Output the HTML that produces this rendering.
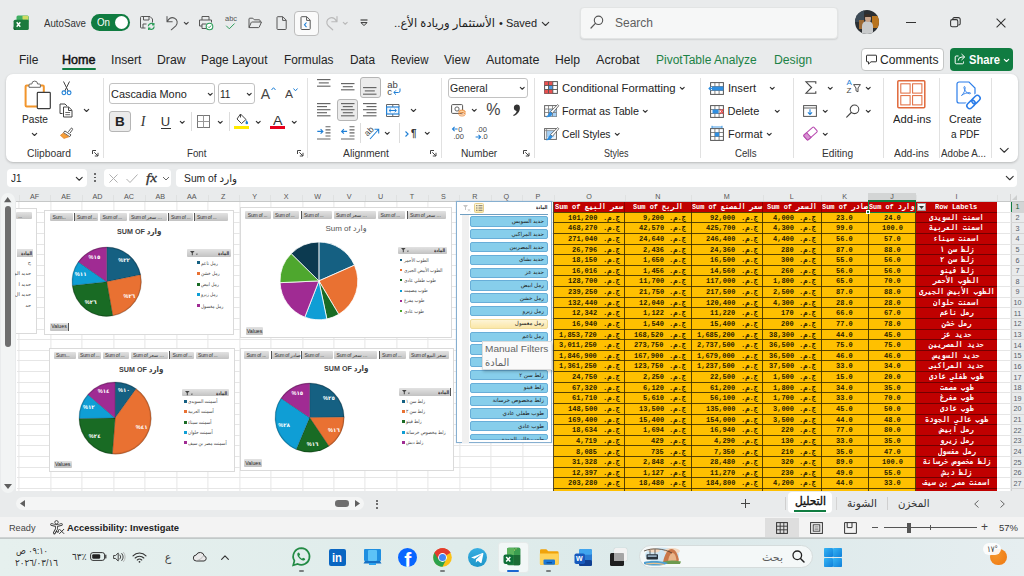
<!DOCTYPE html>
<html lang="ar"><head><meta charset="utf-8"><title>Excel</title>
<style>
html,body{margin:0;padding:0;}
body{width:1024px;height:576px;overflow:hidden;background:#e9ebec;position:relative;font-family:'Liberation Sans','DejaVu Sans',sans-serif;}
#app{position:absolute;left:0;top:0;width:1024px;height:576px;overflow:hidden;}
#app div,#app span,#app svg{position:absolute;box-sizing:border-box;}
#app span{white-space:pre;transform-origin:0 50%;}
#app svg{overflow:visible;}

</style></head><body><div id="app">
<svg style="left:13.00px;top:14.00px;" width="18" height="17" viewBox="0 0 18 17">
<path d="M3.500 3 a1.500 1.500 0 0 1 1.500-1.500 h9.300 a1.500 1.500 0 0 1 1.500 1.500 v4 h-12.300z" fill="#3fae62"/>
<rect x="9.500" y="1.700" width="5.800" height="4" rx=".8" fill="#cfdb62"/>
<rect x=".6" y="5.700" width="15.200" height="10.300" rx="1.600" fill="#1b7a3d"/>
<path d="M.6 12.500 l2.500 3.500 h-1 a1.500 1.500 0 0 1-1.500-1.500z" fill="#14602e"/>
<path d="M3.700 8.300 L7.300 12.700 M7.300 8.300 L3.700 12.700" stroke="#fff" stroke-width="1.400"/></svg>
<span style="left:44.00px;top:18.25px;font:400 10.5px/10.5px 'Liberation Sans','DejaVu Sans',sans-serif;color:#333;transform:scaleX(0.9221);">AutoSave</span>
<div style="left:91.00px;top:13.70px;width:39.30px;height:17.00px;background:#107c41;border-radius:8.500px;"></div>
<span style="left:96.80px;top:17.70px;font:400 10px/10px 'Liberation Sans','DejaVu Sans',sans-serif;color:#fff;transform:scaleX(0.9742);">On</span>
<div style="left:115.00px;top:15.70px;width:13.00px;height:13.00px;background:#fff;border-radius:50%;"></div>
<svg style="left:139.00px;top:15.00px;" width="17" height="16" viewBox="0 0 17 16"><path d="M1.5 2.5 a1 1 0 0 1 1-1 h8.5 l2.5 2.5 v3.5 M1.5 2.5 v9.5 a1 1 0 0 0 1 1 h4" fill="none" stroke="#575757" stroke-width="1"/>
<path d="M4.5 1.5 v3.5 h5.5 v-3.5 M4 13 v-4 h3.5" fill="none" stroke="#575757" stroke-width="1"/>
<path d="M9.3 11.3 a3 3 0 0 1 5.3-1.8 M14.9 8 v1.8 h-1.8 M15.2 11.5 a3 3 0 0 1-5.3 1.8 M9.6 15 v-1.8 h1.8" fill="none" stroke="#2e9e5b" stroke-width="1.2"/></svg>
<svg style="left:165.00px;top:15.00px;" width="15" height="16" viewBox="0 0 15 16"><path d="M2 1.5 v5.2 h5.2 M2.3 6.4 C4 3.5 7 2 9.6 3.2 C12.6 4.6 13 8.4 10.8 10.8 L6.3 14.8" fill="none" stroke="#575757" stroke-width="1.05" stroke-linecap="round" stroke-linejoin="round"/></svg>
<svg style="left:184.25px;top:21.88px;" width="4.5" height="3.25" viewBox="0 0 4.5 3.25"><path d="M0.3 0.3 L2.25 2.25 L4.2 0.3" fill="none" stroke="#444" stroke-width="1.1" stroke-linecap="round" stroke-linejoin="round"/></svg>
<svg style="left:198.00px;top:15.00px;" width="17" height="16" viewBox="0 0 17 16"><path d="M4 5 v-3.5 h7 v3.5 M4 11 h-2.5 v-6 h12 v2.5 M4 13.5 v-4.5 h4.5 M4 13.5 h4" fill="none" stroke="#575757" stroke-width="1"/>
<circle cx="11.5" cy="11.5" r="3.3" fill="#fff" stroke="#2e9e5b" stroke-width="1.1"/><path d="M10 11.6 l1.1 1.1 l2-2.2" fill="none" stroke="#2e9e5b" stroke-width="1"/></svg>
<span style="left:225.00px;top:15.30px;font:400 8px/8px 'Liberation Sans','DejaVu Sans',sans-serif;color:#555;transform:scaleX(0.9298);">abc</span>
<svg style="left:225.00px;top:22.50px;" width="11" height="7" viewBox="0 0 11 7"><path d="M1.500 3 l2.800 2.800 l5-5" fill="none" stroke="#2e9e5b" stroke-width="1" stroke-linecap="round" stroke-linejoin="round"/></svg>
<svg style="left:248.00px;top:17.00px;" width="15" height="12" viewBox="0 0 15 12"><path d="M1 10.5 v-8.5 a0.8 0.8 0 0 1 .8-.8 h3 l1.5 1.6 h5 a0.8 0.8 0 0 1 .8.8 v1.4 M1 10.5 l2.2-5 a1 1 0 0 1 .9-.5 h9.4 l-2.3 5.2 a0.8 0.8 0 0 1-.7.4 h-9.5" fill="none" stroke="#575757" stroke-width="1" stroke-linejoin="round"/></svg>
<svg style="left:276.00px;top:16.00px;" width="11" height="15" viewBox="0 0 11 15"><path d="M1 1.5 a.8 .8 0 0 1 .8-.8 h5 l3.4 3.4 v8.6 a.8 .8 0 0 1-.8.8 h-7.6 a.8 .8 0 0 1-.8-.8 z M6.6 .9 v3.5 h3.4" fill="none" stroke="#575757" stroke-width="1" stroke-linejoin="round"/></svg>
<div style="left:293.50px;top:10.50px;width:25.00px;height:25.00px;background:#fafafa;border:1px solid #bdbdbd;border-radius:4px;"></div>
<svg style="left:300.00px;top:16.00px;" width="11" height="15" viewBox="0 0 11 15"><path d="M1 1.5 a.8 .8 0 0 1 .8-.8 h5 l3.4 3.4 v8.6 a.8 .8 0 0 1-.8.8 h-7.6 a.8 .8 0 0 1-.8-.8 z M6.6 .9 v3.5 h3.4" fill="none" stroke="#575757" stroke-width="1" stroke-linejoin="round"/><path d="M6.5 6.5 l-2 2.3 l2 2.3" fill="none" stroke="#1e7fd6" stroke-width="1.1"/></svg>
<svg style="left:324.00px;top:15.00px;" width="15" height="16" viewBox="0 0 15 16"><path d="M13 1.5 v5.2 h-5.2 M12.7 6.4 C11 3.5 8 2 5.4 3.2 C2.4 4.6 2 8.4 4.2 10.8 L8.7 14.8" fill="none" stroke="#b9b9b9" stroke-width="1.15" stroke-linecap="round" stroke-linejoin="round"/></svg>
<svg style="left:343.25px;top:21.88px;" width="4.5" height="3.25" viewBox="0 0 4.5 3.25"><path d="M0.3 0.3 L2.25 2.25 L4.2 0.3" fill="none" stroke="#b9b9b9" stroke-width="1.1" stroke-linecap="round" stroke-linejoin="round"/></svg>
<svg style="left:360.00px;top:19.00px;" width="8" height="8" viewBox="0 0 8 8"><path d="M0.5 1 h7" stroke="#333" stroke-width="1.1"/><path d="M1 3.6 l3 3 l3-3 z" fill="none" stroke="#333" stroke-width="1"/></svg>
<span style="left:394.00px;top:18.40px;font:400 11.8px/11.8px 'Liberation Sans','DejaVu Sans',sans-serif;color:#222;direction:rtl;transform:scaleX(0.9807);">الأستثمار وريادة الأع..</span>
<span style="left:499.00px;top:17.75px;font:400 11.5px/11.5px 'Liberation Sans','DejaVu Sans',sans-serif;color:#222;transform:scaleX(0.9537);">• Saved</span>
<svg style="left:541.50px;top:21.75px;" width="7" height="4.5" viewBox="0 0 7 4.5"><path d="M0.3 0.3 L3.5 3.5 L6.7 0.3" fill="none" stroke="#333" stroke-width="1.1" stroke-linecap="round" stroke-linejoin="round"/></svg>
<div style="left:580.00px;top:6.50px;width:258.00px;height:32.50px;background:#f6f7f7;border:1px solid #e2e4e4;border-radius:4px;box-shadow:0 1px 1.5px rgba(0,0,0,.10);"></div>
<svg style="left:590.00px;top:15.00px;" width="14" height="14" viewBox="0 0 14 14"><circle cx="8.5" cy="5.3" r="4.2" fill="none" stroke="#555" stroke-width="1.1"/><path d="M5.4 8.3 L1 13" stroke="#555" stroke-width="1.2" stroke-linecap="round"/></svg>
<span style="left:615.00px;top:16.50px;font:400 12px/12px 'Liberation Sans','DejaVu Sans',sans-serif;color:#5f5f5f;">Search</span>
<div style="left:855px;top:10px;width:24px;height:24px;border-radius:50%;overflow:hidden;background:#2b2f33;"><div style="left:0;top:0;width:9px;height:12px;background:#3d4b57;"></div><div style="left:17px;top:6px;width:7px;height:12px;background:#b8741f;"></div><div style="left:4px;top:10px;width:5px;height:9px;background:#9c6a35;"></div><div style="left:7px;top:11px;width:11px;height:14px;border-radius:5px 5px 0 0;background:#c9cbcc;"></div><div style="left:9.5px;top:4.5px;width:6px;height:7px;border-radius:50%;background:#c9a58c;"></div><div style="left:9px;top:3.5px;width:7px;height:3px;border-radius:3px 3px 0 0;background:#3a2d25;"></div></div>
<div style="left:906.00px;top:21.50px;width:9.50px;height:1.10px;background:#333;"></div>
<svg style="left:950.00px;top:17.00px;" width="11" height="11" viewBox="0 0 11 11"><rect x="0.6" y="2.6" width="7.2" height="7.2" rx="1.6" fill="none" stroke="#333" stroke-width="1.05"/><path d="M2.8 2.4 v-.4 a1.4 1.4 0 0 1 1.4-1.4 h4.2 a1.8 1.8 0 0 1 1.8 1.8 v4.2 a1.4 1.4 0 0 1-1.4 1.4 h-.5" fill="none" stroke="#333" stroke-width="1.05"/></svg>
<svg style="left:996.00px;top:18.00px;" width="10" height="10" viewBox="0 0 10 10"><path d="M0.6 0.6 L9.4 9.4 M9.4 0.6 L0.6 9.4" stroke="#333" stroke-width="1.05"/></svg>
<span style="left:19.00px;top:54.30px;font:400 12px/12px 'Liberation Sans','DejaVu Sans',sans-serif;color:#242424;">File</span>
<span style="left:111.00px;top:54.30px;font:400 12px/12px 'Liberation Sans','DejaVu Sans',sans-serif;color:#242424;transform:scaleX(1.0161);">Insert</span>
<span style="left:157.00px;top:54.30px;font:400 12px/12px 'Liberation Sans','DejaVu Sans',sans-serif;color:#242424;transform:scaleX(1.0173);">Draw</span>
<span style="left:201.00px;top:54.30px;font:400 12px/12px 'Liberation Sans','DejaVu Sans',sans-serif;color:#242424;transform:scaleX(0.9868);">Page Layout</span>
<span style="left:284.00px;top:54.30px;font:400 12px/12px 'Liberation Sans','DejaVu Sans',sans-serif;color:#242424;transform:scaleX(0.9897);">Formulas</span>
<span style="left:350.00px;top:54.30px;font:400 12px/12px 'Liberation Sans','DejaVu Sans',sans-serif;color:#242424;transform:scaleX(0.9858);">Data</span>
<span style="left:391.00px;top:54.30px;font:400 12px/12px 'Liberation Sans','DejaVu Sans',sans-serif;color:#242424;transform:scaleX(0.9528);">Review</span>
<span style="left:444.00px;top:54.30px;font:400 12px/12px 'Liberation Sans','DejaVu Sans',sans-serif;color:#242424;">View</span>
<span style="left:486.00px;top:54.30px;font:400 12px/12px 'Liberation Sans','DejaVu Sans',sans-serif;color:#242424;transform:scaleX(1.0414);">Automate</span>
<span style="left:555.00px;top:54.30px;font:400 12px/12px 'Liberation Sans','DejaVu Sans',sans-serif;color:#242424;transform:scaleX(1.0127);">Help</span>
<span style="left:596.00px;top:54.30px;font:400 12px/12px 'Liberation Sans','DejaVu Sans',sans-serif;color:#242424;transform:scaleX(1.0518);">Acrobat</span>
<span style="left:62.00px;top:54.30px;font:400 12px/12px 'Liberation Sans','DejaVu Sans',sans-serif;color:#111;-webkit-text-stroke:.45px #111;transform:scaleX(1.0464);">Home</span>
<div style="left:61.50px;top:68.40px;width:34.00px;height:1.80px;background:#107c41;border-radius:1px;"></div>
<span style="left:656.00px;top:54.30px;font:400 12px/12px 'Liberation Sans','DejaVu Sans',sans-serif;color:#1c8246;">PivotTable Analyze</span>
<span style="left:774.00px;top:54.30px;font:400 12px/12px 'Liberation Sans','DejaVu Sans',sans-serif;color:#1c8246;transform:scaleX(1.0171);">Design</span>
<div style="left:861.00px;top:48.00px;width:82.50px;height:22.50px;background:#fff;border:1px solid #c4c6c6;border-radius:4px;"></div>
<svg style="left:866.00px;top:53.50px;" width="11" height="11" viewBox="0 0 11 11"><path d="M1 1.2 h9 a.5 .5 0 0 1 .5 .5 v5.6 a.5 .5 0 0 1-.5 .5 h-5 l-2.5 2.3 v-2.3 h-1.5 a.5 .5 0 0 1-.5-.5 v-5.6 a.5 .5 0 0 1 .5-.5z" fill="none" stroke="#333" stroke-width="1"/></svg>
<span style="left:879.50px;top:53.60px;font:400 12px/12px 'Liberation Sans','DejaVu Sans',sans-serif;color:#242424;transform:scaleX(1.0083);">Comments</span>
<div style="left:950.00px;top:48.00px;width:63.00px;height:22.50px;background:#107c41;border-radius:4px;"></div>
<svg style="left:954.00px;top:53.00px;" width="12" height="12" viewBox="0 0 12 12"><path d="M4.5 3 h-2.3 a1 1 0 0 0-1 1 v5.8 a1 1 0 0 0 1 1 h6.3 a1 1 0 0 0 1-1 v-1.3" fill="none" stroke="#fff" stroke-width="1"/><path d="M7.5 1 l3.2 3 l-3.2 3 M10.5 4 h-2.5 a3.8 3.8 0 0 0-3.8 3.6" fill="none" stroke="#fff" stroke-width="1"/></svg>
<span style="left:968.50px;top:53.60px;font:700 12px/12px 'Liberation Sans','DejaVu Sans',sans-serif;color:#fff;transform:scaleX(0.9293);">Share</span>
<svg style="left:1003.50px;top:58.75px;" width="5" height="3.5" viewBox="0 0 5 3.5"><path d="M0.3 0.3 L2.5 2.5 L4.7 0.3" fill="none" stroke="#fff" stroke-width="1.1" stroke-linecap="round" stroke-linejoin="round"/></svg>
<div style="left:6.00px;top:73.50px;width:1011.50px;height:88.00px;background:#fff;border-radius:7px;box-shadow:0 1px 2.5px rgba(0,0,0,.22);"></div>
<svg style="left:23.00px;top:79.00px;" width="29" height="32" viewBox="0 0 29 32"><rect x="2.600" y="6.600" width="18.200" height="21" rx="1" fill="#fff" stroke="#f2952b" stroke-width="2"/>
<path d="M6 8.300 v-2.300 a1 1 0 0 1 1-1 h1.800 a2.900 2.900 0 0 1 5.800 0 h1.800 a1 1 0 0 1 1 1 v2.300z" fill="#fff" stroke="#6a6a6a" stroke-width="1"/>
<rect x="14.300" y="13.400" width="13" height="16.200" rx=".8" fill="#fff" stroke="#3c3c3c" stroke-width="1.200"/></svg>
<span style="left:22.00px;top:113.80px;font:400 11px/11px 'Liberation Sans','DejaVu Sans',sans-serif;color:#242424;transform:scaleX(0.9239);">Paste</span>
<svg style="left:31.50px;top:132.75px;" width="5" height="3.5" viewBox="0 0 5 3.5"><path d="M0.3 0.3 L2.5 2.5 L4.7 0.3" fill="none" stroke="#333" stroke-width="1.1" stroke-linecap="round" stroke-linejoin="round"/></svg>
<svg style="left:60.50px;top:80.50px;" width="11" height="15" viewBox="0 0 11 15"><path d="M2.5 0.5 L7.2 10 M8.5 0.5 L3.8 10" stroke="#444" stroke-width="1"/><circle cx="2.9" cy="11.8" r="1.9" fill="none" stroke="#1e7fd6" stroke-width="1.1"/><circle cx="8.1" cy="11.8" r="1.9" fill="none" stroke="#1e7fd6" stroke-width="1.1"/></svg>
<svg style="left:59.00px;top:103.00px;" width="15" height="15" viewBox="0 0 15 15"><path d="M3.5 10.5 h-2.5 v-9.5 h5 l2 2" fill="none" stroke="#444" stroke-width="1"/><path d="M4.5 4 h5.2 l3.3 3.3 v6.7 h-8.5z M9.5 4.2 v3.3 h3.3" fill="#fff" stroke="#444" stroke-width="1"/><path d="M6.3 9.5 h4.8 M6.3 11.7 h4.8" stroke="#444" stroke-width=".8"/></svg>
<svg style="left:84.00px;top:109.25px;" width="5" height="3.5" viewBox="0 0 5 3.5"><path d="M0.3 0.3 L2.5 2.5 L4.7 0.3" fill="none" stroke="#333" stroke-width="1.1" stroke-linecap="round" stroke-linejoin="round"/></svg>
<svg style="left:59.80px;top:127.00px;" width="13.2" height="12.3" viewBox="0 0 15 14"><path d="M9.5 5.5 l3-4 a1.2 1.2 0 0 1 1.8 1.4 l-2.8 4" fill="#fff" stroke="#444" stroke-width="1"/><path d="M5.5 4.5 l7 4.5 l-1.5 2 l-7-4.5z" fill="#fff" stroke="#444" stroke-width="1"/><path d="M3.6 7 l6.4 4.2 l-5.5 1.8 l-4-3.5z" fill="#f6a13a" stroke="#e07a1f" stroke-width=".8"/></svg>
<span style="left:26.50px;top:148.80px;font:400 10.2px/10.2px 'Liberation Sans','DejaVu Sans',sans-serif;color:#333;transform:scaleX(1.0090);">Clipboard</span>
<svg style="left:92.00px;top:149.50px;" width="7" height="7" viewBox="0 0 7 7"><path d="M0.5 4 v-3.5 h3.5" fill="none" stroke="#444" stroke-width="1"/><path d="M2.3 2.3 L6 6 M6 2.800 v3.200 h-3.200" fill="none" stroke="#444" stroke-width="1"/></svg>
<div style="left:102.50px;top:78.00px;width:1.00px;height:80.00px;background:#e1e1e1;"></div>
<div style="left:109.00px;top:83.00px;width:106.00px;height:20.70px;background:#fff;border:1px solid #c2c2c2;border-radius:3px;"></div>
<span style="left:110.80px;top:88.50px;font:400 11px/11px 'Liberation Sans','DejaVu Sans',sans-serif;color:#242424;transform:scaleX(0.9917);">Cascadia Mono</span>
<svg style="left:207.75px;top:93.17px;" width="4.5" height="3.25" viewBox="0 0 4.5 3.25"><path d="M0.3 0.3 L2.25 2.25 L4.2 0.3" fill="none" stroke="#333" stroke-width="1.1" stroke-linecap="round" stroke-linejoin="round"/></svg>
<div style="left:217.50px;top:83.00px;width:37.00px;height:20.70px;background:#fff;border:1px solid #c2c2c2;border-radius:3px;"></div>
<span style="left:219.50px;top:88.50px;font:400 11px/11px 'Liberation Sans','DejaVu Sans',sans-serif;color:#242424;transform:scaleX(0.9193);">11</span>
<svg style="left:246.75px;top:93.17px;" width="4.5" height="3.25" viewBox="0 0 4.5 3.25"><path d="M0.3 0.3 L2.25 2.25 L4.2 0.3" fill="none" stroke="#333" stroke-width="1.1" stroke-linecap="round" stroke-linejoin="round"/></svg>
<span style="left:260.80px;top:86.70px;font:400 14px/14px 'Liberation Sans','DejaVu Sans',sans-serif;color:#444;">A</span>
<svg style="left:270.80px;top:87.00px;" width="5" height="3.5" viewBox="0 0 5 3.5"><path d="M.5 3 l2-2.3 l2 2.3" fill="none" stroke="#1e7fd6" stroke-width="1"/></svg>
<span style="left:285.00px;top:89.05px;font:400 11.5px/11.5px 'Liberation Sans','DejaVu Sans',sans-serif;color:#444;transform:scaleX(1.0428);">A</span>
<svg style="left:293.30px;top:87.50px;" width="5" height="3.5" viewBox="0 0 5 3.5"><path d="M.5 .5 l2 2.3 l2-2.3" fill="none" stroke="#1e7fd6" stroke-width="1"/></svg>
<div style="left:109.00px;top:110.70px;width:21.50px;height:21.50px;background:#ebebeb;border:1px solid #b5b5b5;border-radius:3px;"></div>
<span style="left:114.92px;top:115.25px;font:700 13.5px/13.5px 'Liberation Sans','DejaVu Sans',sans-serif;color:#222;">B</span>
<span style="left:140.66px;top:115.00px;font:italic 400 14px/14px 'Liberation Serif','DejaVu Serif',serif;color:#333;">I</span>
<span style="left:160.80px;top:114.80px;font:400 13px/13px 'Liberation Sans','DejaVu Sans',sans-serif;color:#333;">U</span>
<div style="left:161.00px;top:128.20px;width:9.50px;height:1.00px;background:#333;"></div>
<svg style="left:180.25px;top:121.17px;" width="4.5" height="3.25" viewBox="0 0 4.5 3.25"><path d="M0.3 0.3 L2.25 2.25 L4.2 0.3" fill="none" stroke="#333" stroke-width="1.1" stroke-linecap="round" stroke-linejoin="round"/></svg>
<div style="left:191.00px;top:112.00px;width:1.00px;height:19.00px;background:#dcdcdc;"></div>
<svg style="left:196.50px;top:115.00px;" width="13" height="13" viewBox="0 0 13 13"><rect x=".5" y=".5" width="12" height="12" fill="none" stroke="#777" stroke-width="1"/><path d="M6.5 .5 v12 M.5 6.5 h12" stroke="#999" stroke-width="1"/></svg>
<svg style="left:217.75px;top:121.17px;" width="4.5" height="3.25" viewBox="0 0 4.5 3.25"><path d="M0.3 0.3 L2.25 2.25 L4.2 0.3" fill="none" stroke="#333" stroke-width="1.1" stroke-linecap="round" stroke-linejoin="round"/></svg>
<div style="left:228.50px;top:112.00px;width:1.00px;height:19.00px;background:#dcdcdc;"></div>
<svg style="left:235.00px;top:113.00px;" width="14" height="12" viewBox="0 0 14 12"><path d="M5.5 1 L11 6.5 L6.5 10.5 L2 6 z" fill="#fff" stroke="#444" stroke-width="1" stroke-linejoin="round"/><path d="M5.5 1 v3.5" stroke="#444" stroke-width="1"/><path d="M11.5 7 c1 1.5 1.6 2.3 1.6 3 a1.3 1.3 0 0 1-2.6 0 c0-.8 .5-1.6 1-3z" fill="#1e7fd6"/></svg>
<div style="left:234.00px;top:126.20px;width:15.00px;height:3.20px;background:#ffeb00;"></div>
<svg style="left:256.25px;top:121.17px;" width="4.5" height="3.25" viewBox="0 0 4.5 3.25"><path d="M0.3 0.3 L2.25 2.25 L4.2 0.3" fill="none" stroke="#333" stroke-width="1.1" stroke-linecap="round" stroke-linejoin="round"/></svg>
<span style="left:272.75px;top:113.75px;font:400 13.5px/13.5px 'Liberation Sans','DejaVu Sans',sans-serif;color:#333;transform:scaleX(1.0537);">A</span>
<div style="left:270.00px;top:126.20px;width:15.00px;height:3.20px;background:#e8001c;"></div>
<svg style="left:291.75px;top:121.17px;" width="4.5" height="3.25" viewBox="0 0 4.5 3.25"><path d="M0.3 0.3 L2.25 2.25 L4.2 0.3" fill="none" stroke="#333" stroke-width="1.1" stroke-linecap="round" stroke-linejoin="round"/></svg>
<span style="left:187.00px;top:148.80px;font:400 10.2px/10.2px 'Liberation Sans','DejaVu Sans',sans-serif;color:#333;transform:scaleX(0.9563);">Font</span>
<svg style="left:296.50px;top:149.50px;" width="7" height="7" viewBox="0 0 7 7"><path d="M0.5 4 v-3.5 h3.5" fill="none" stroke="#444" stroke-width="1"/><path d="M2.3 2.3 L6 6 M6 2.800 v3.200 h-3.200" fill="none" stroke="#444" stroke-width="1"/></svg>
<div style="left:306.50px;top:78.00px;width:1.00px;height:80.00px;background:#e1e1e1;"></div>
<svg style="left:317.30px;top:79.40px;" width="13.5" height="10.899999999999999" viewBox="0 0 13.5 10.899999999999999"><path d="M0.0 0.6 h13.5" stroke="#666" stroke-width="1.15"/><path d="M1.8 3.9 h10" stroke="#666" stroke-width="1.15"/><path d="M0.0 7.2 h13.5" stroke="#666" stroke-width="1.15"/></svg>
<svg style="left:340.50px;top:83.40px;" width="13.5" height="10.3" viewBox="0 0 13.5 10.3"><path d="M0.0 0.6 h13.5" stroke="#666" stroke-width="1.15"/><path d="M1.8 3.7 h10" stroke="#666" stroke-width="1.15"/><path d="M0.0 6.8 h13.5" stroke="#666" stroke-width="1.15"/></svg>
<div style="left:359.50px;top:76.70px;width:21.30px;height:21.20px;background:#ebebeb;border:1px solid #b5b5b5;border-radius:3px;"></div>
<svg style="left:363.30px;top:87.40px;" width="13.5" height="10.899999999999999" viewBox="0 0 13.5 10.899999999999999"><path d="M0.0 0.6 h13.5" stroke="#666" stroke-width="1.15"/><path d="M1.8 3.9 h10" stroke="#666" stroke-width="1.15"/><path d="M0.0 7.2 h13.5" stroke="#666" stroke-width="1.15"/></svg>
<span style="left:387.30px;top:80.05px;font:400 9.5px/9.5px 'Liberation Sans','DejaVu Sans',sans-serif;color:#444;">ab</span>
<span style="left:387.30px;top:86.55px;font:400 9.5px/9.5px 'Liberation Sans','DejaVu Sans',sans-serif;color:#444;">c</span>
<svg style="left:392.50px;top:88.00px;" width="8" height="7" viewBox="0 0 8 7"><path d="M7 .5 v2.5 a1.5 1.5 0 0 1-1.5 1.5 h-4.5 M3 2.3 l-2.2 2.2 l2.2 2.2" fill="none" stroke="#1e7fd6" stroke-width="1"/></svg>
<svg style="left:317.30px;top:103.30px;" width="13.5" height="16.25" viewBox="0 0 13.5 16.25"><path d="M0.0 0.6 h13.5" stroke="#666" stroke-width="1.15"/><path d="M0.0 3.6 h10" stroke="#666" stroke-width="1.15"/><path d="M0.0 6.7 h13.5" stroke="#666" stroke-width="1.15"/><path d="M0.0 9.7 h10" stroke="#666" stroke-width="1.15"/><path d="M0.0 12.8 h13.5" stroke="#666" stroke-width="1.15"/></svg>
<div style="left:336.50px;top:99.20px;width:21.30px;height:21.50px;background:#ebebeb;border:1px solid #b5b5b5;border-radius:3px;"></div>
<svg style="left:340.50px;top:103.30px;" width="13.5" height="16.25" viewBox="0 0 13.5 16.25"><path d="M0.0 0.6 h13.5" stroke="#666" stroke-width="1.15"/><path d="M1.8 3.6 h10" stroke="#666" stroke-width="1.15"/><path d="M0.0 6.7 h13.5" stroke="#666" stroke-width="1.15"/><path d="M1.8 9.7 h10" stroke="#666" stroke-width="1.15"/><path d="M0.0 12.8 h13.5" stroke="#666" stroke-width="1.15"/></svg>
<svg style="left:363.40px;top:103.30px;" width="13.5" height="16.25" viewBox="0 0 13.5 16.25"><path d="M0.0 0.6 h13.5" stroke="#666" stroke-width="1.15"/><path d="M3.5 3.6 h10" stroke="#666" stroke-width="1.15"/><path d="M0.0 6.7 h13.5" stroke="#666" stroke-width="1.15"/><path d="M3.5 9.7 h10" stroke="#666" stroke-width="1.15"/><path d="M0.0 12.8 h13.5" stroke="#666" stroke-width="1.15"/></svg>
<svg style="left:386.00px;top:103.70px;" width="13.5" height="13" viewBox="0 0 13.5 13"><path d="M.5 3 v-2.500 h12.500 v2.500 M6.750 .5 v2.500 M.5 10 v2.500 h12.500 v-2.500 M6.750 10 v2.500" fill="none" stroke="#666" stroke-width="1"/><rect x=".6" y="3" width="12.300" height="7" fill="#f2f8fe" stroke="#1e7fd6" stroke-width="1.150"/><path d="M3.200 6.500 h7 M4.800 4.900 l-1.700 1.600 l1.700 1.600 M8.700 4.900 l1.700 1.600 l-1.700 1.600" fill="none" stroke="#1e7fd6" stroke-width="1"/></svg>
<svg style="left:410.50px;top:109.25px;" width="5" height="3.5" viewBox="0 0 5 3.5"><path d="M0.3 0.3 L2.5 2.5 L4.7 0.3" fill="none" stroke="#333" stroke-width="1.1" stroke-linecap="round" stroke-linejoin="round"/></svg>
<svg style="left:317.30px;top:126.30px;" width="13.5" height="13.5" viewBox="0 0 13.5 13.5"><path d="M8.500 .7 h5 M8.500 3.800 h5 M8.500 6.900 h5 M8.500 10 h5 M0 13 h13.500" stroke="#666" stroke-width="1.150"/><path d="M.3 5.400 h5.500 M3.600 3.100 l2.300 2.300 l-2.300 2.300" fill="none" stroke="#1e7fd6" stroke-width="1.100"/></svg>
<svg style="left:340.50px;top:126.30px;" width="13.5" height="13.5" viewBox="0 0 13.5 13.5"><path d="M8.500 .7 h5 M8.500 3.800 h5 M8.500 6.900 h5 M8.500 10 h5 M0 13 h13.500" stroke="#666" stroke-width="1.150"/><path d="M.6 5.400 h5.500 M2.900 3.100 l-2.300 2.300 l2.300 2.300" fill="none" stroke="#1e7fd6" stroke-width="1.100"/></svg>
<div style="left:359.80px;top:123.00px;width:1.00px;height:20.00px;background:#dcdcdc;"></div>
<div style="left:363px;top:125.500px;width:12px;height:10px;transform:rotate(-45deg);transform-origin:50% 50%;"><span style="left:1px;top:1px;font:400 8.500px/8px 'Liberation Sans',sans-serif;color:#444;">ab</span></div>
<svg style="left:369.00px;top:127.80px;" width="11" height="12" viewBox="0 0 11 12"><path d="M1 11 L9.500 1.500 M5.500 1.200 h4.200 v4.200" fill="none" stroke="#1e7fd6" stroke-width="1.05"/></svg>
<svg style="left:385.25px;top:132.38px;" width="4.5" height="3.25" viewBox="0 0 4.5 3.25"><path d="M0.3 0.3 L2.25 2.25 L4.2 0.3" fill="none" stroke="#333" stroke-width="1.1" stroke-linecap="round" stroke-linejoin="round"/></svg>
<div style="left:398.80px;top:123.00px;width:1.00px;height:20.00px;background:#dcdcdc;"></div>
<svg style="left:405.00px;top:130.50px;" width="4" height="6" viewBox="0 0 4 6"><path d="M.5 .5 l2.6 2.5 l-2.6 2.5" fill="none" stroke="#1e7fd6" stroke-width="1.1"/></svg>
<span style="left:411.00px;top:128.25px;font:700 10.5px/10.5px 'Liberation Sans','DejaVu Sans',sans-serif;color:#333;transform:scaleX(0.9412);">¶</span>
<svg style="left:425.25px;top:132.38px;" width="4.5" height="3.25" viewBox="0 0 4.5 3.25"><path d="M0.3 0.3 L2.25 2.25 L4.2 0.3" fill="none" stroke="#333" stroke-width="1.1" stroke-linecap="round" stroke-linejoin="round"/></svg>
<span style="left:343.00px;top:148.80px;font:400 10.2px/10.2px 'Liberation Sans','DejaVu Sans',sans-serif;color:#333;transform:scaleX(1.0152);">Alignment</span>
<svg style="left:430.00px;top:149.50px;" width="7" height="7" viewBox="0 0 7 7"><path d="M0.5 4 v-3.5 h3.5" fill="none" stroke="#444" stroke-width="1"/><path d="M2.3 2.3 L6 6 M6 2.800 v3.200 h-3.200" fill="none" stroke="#444" stroke-width="1"/></svg>
<div style="left:440.50px;top:78.00px;width:1.00px;height:80.00px;background:#e1e1e1;"></div>
<div style="left:447.50px;top:77.50px;width:80.00px;height:20.50px;background:#fff;border:1px solid #c2c2c2;border-radius:3px;"></div>
<span style="left:449.50px;top:82.80px;font:400 11px/11px 'Liberation Sans','DejaVu Sans',sans-serif;color:#242424;transform:scaleX(0.9581);">General</span>
<svg style="left:520.25px;top:87.38px;" width="4.5" height="3.25" viewBox="0 0 4.5 3.25"><path d="M0.3 0.3 L2.25 2.25 L4.2 0.3" fill="none" stroke="#333" stroke-width="1.1" stroke-linecap="round" stroke-linejoin="round"/></svg>
<svg style="left:451.00px;top:104.00px;" width="15" height="13" viewBox="0 0 15 13"><rect x=".6" y=".6" width="11" height="8.8" rx="1" fill="#fff" stroke="#555" stroke-width="1"/><circle cx="6" cy="5" r="2.1" fill="none" stroke="#555" stroke-width=".9"/><ellipse cx="11" cy="7.3" rx="3" ry="1.2" fill="#ffd9a8" stroke="#e8802a" stroke-width=".8"/><path d="M8 7.3 v3.5 a3 1.2 0 0 0 6 0 v-3.5 M8 9 a3 1.2 0 0 0 6 0" fill="none" stroke="#e8802a" stroke-width=".8"/></svg>
<svg style="left:472.25px;top:109.38px;" width="4.5" height="3.25" viewBox="0 0 4.5 3.25"><path d="M0.3 0.3 L2.25 2.25 L4.2 0.3" fill="none" stroke="#333" stroke-width="1.1" stroke-linecap="round" stroke-linejoin="round"/></svg>
<span style="left:486.25px;top:102.00px;font:400 16px/16px 'Liberation Sans','DejaVu Sans',sans-serif;color:#444;">%</span>
<svg style="left:512.00px;top:103.50px;" width="9" height="13" viewBox="0 0 9 13"><path d="M4.600 .5 a3.300 3.300 0 0 1 3.300 3.400 c0 3.600-2.400 6.600-6.300 8.100 l-.4-.9 c2-1 3.200-2.400 3.400-4.100 a3.300 3.300 0 0 1 0-6.500z" fill="#333"/></svg>
<svg style="left:451.50px;top:126.00px;" width="13" height="6" viewBox="0 0 13 6"><path d="M.6 3 h5 M2.6 .9 l-2.1 2.1 l2.1 2.1" fill="none" stroke="#1e7fd6" stroke-width="1.05"/></svg>
<span style="left:458.20px;top:125.85px;font:400 7.5px/7.5px 'Liberation Sans','DejaVu Sans',sans-serif;color:#444;">0</span>
<span style="left:453.50px;top:133.25px;font:400 7.5px/7.5px 'Liberation Sans','DejaVu Sans',sans-serif;color:#444;">.00</span>
<span style="left:476.50px;top:125.85px;font:400 7.5px/7.5px 'Liberation Sans','DejaVu Sans',sans-serif;color:#444;">.00</span>
<svg style="left:474.50px;top:133.80px;" width="13" height="6" viewBox="0 0 13 6"><path d="M.6 3 h5 M3.5 .9 l2.1 2.1 l-2.1 2.1" fill="none" stroke="#1e7fd6" stroke-width="1.05"/></svg>
<span style="left:481.50px;top:133.25px;font:400 7.5px/7.5px 'Liberation Sans','DejaVu Sans',sans-serif;color:#444;">.0</span>
<span style="left:461.00px;top:148.80px;font:400 10.2px/10.2px 'Liberation Sans','DejaVu Sans',sans-serif;color:#333;">Number</span>
<svg style="left:522.50px;top:149.50px;" width="7" height="7" viewBox="0 0 7 7"><path d="M0.5 4 v-3.5 h3.5" fill="none" stroke="#444" stroke-width="1"/><path d="M2.3 2.3 L6 6 M6 2.800 v3.200 h-3.200" fill="none" stroke="#444" stroke-width="1"/></svg>
<div style="left:533.50px;top:78.00px;width:1.00px;height:80.00px;background:#e1e1e1;"></div>
<svg style="left:544.00px;top:81.00px;" width="14" height="13" viewBox="0 0 14 13"><rect x=".6" y=".6" width="12.8" height="11.8" fill="#fff" stroke="#555" stroke-width="1"/><rect x=".6" y=".6" width="8.200" height="3.900" fill="#e85050"/><rect x=".6" y="8.500" width="8.200" height="3.900" fill="#e85050"/><rect x="4.5" y="4.5" width="4.3" height="4" fill="#4a9be8"/><path d="M4.5 .6 v11.8 M8.8 .6 v11.8 M.6 4.5 h12.8 M.6 8.5 h12.8" stroke="#555" stroke-width=".9"/></svg>
<span style="left:562.00px;top:82.80px;font:400 11px/11px 'Liberation Sans','DejaVu Sans',sans-serif;color:#242424;transform:scaleX(1.0256);">Conditional Formatting</span>
<svg style="left:679.75px;top:87.38px;" width="4.5" height="3.25" viewBox="0 0 4.5 3.25"><path d="M0.3 0.3 L2.25 2.25 L4.2 0.3" fill="none" stroke="#333" stroke-width="1.1" stroke-linecap="round" stroke-linejoin="round"/></svg>
<svg style="left:544.00px;top:104.00px;" width="15" height="14" viewBox="0 0 15 14"><rect x=".6" y="1.600" width="11.800" height="10.800" fill="#fff" stroke="#666" stroke-width="1"/><rect x="4.500" y="5" width="7.900" height="7.400" fill="#a6d0f5"/><path d="M.6 5 h11.800 M.6 8.500 h11.800 M4.500 1.600 v10.800 M8.500 1.600 v10.800" stroke="#777" stroke-width=".8"/><path d="M13.600 .6 l1.200 1.100 l-6.300 7.600 l-2.100-1.600z" fill="#fff" stroke="#555" stroke-width=".8" stroke-linejoin="round"/><path d="M6.300 7.800 l2.100 1.600 c-.6 2.600-3.200 4.200-6.400 3.800 c1.700-1 2.500-3.900 4.300-5.400z" fill="#2f8ee0"/></svg>
<span style="left:562.00px;top:105.80px;font:400 11px/11px 'Liberation Sans','DejaVu Sans',sans-serif;color:#242424;transform:scaleX(0.9787);">Format as Table</span>
<svg style="left:643.25px;top:110.38px;" width="4.5" height="3.25" viewBox="0 0 4.5 3.25"><path d="M0.3 0.3 L2.25 2.25 L4.2 0.3" fill="none" stroke="#333" stroke-width="1.1" stroke-linecap="round" stroke-linejoin="round"/></svg>
<svg style="left:544.00px;top:127.00px;" width="15" height="14" viewBox="0 0 15 14"><rect x=".6" y="1.600" width="11.800" height="10.800" fill="#fff" stroke="#666" stroke-width="1"/><rect x="2.600" y="3.600" width="7.800" height="6.800" fill="#a6d0f5"/><path d="M.6 3.600 h11.800 M2.600 1.600 v10.800" stroke="#777" stroke-width=".7"/><path d="M13.600 .6 l1.200 1.100 l-6.300 7.600 l-2.100-1.600z" fill="#fff" stroke="#555" stroke-width=".8" stroke-linejoin="round"/><path d="M6.300 7.800 l2.100 1.600 c-.6 2.600-3.200 4.200-6.400 3.800 c1.700-1 2.500-3.900 4.300-5.400z" fill="#2f8ee0"/></svg>
<span style="left:562.00px;top:128.80px;font:400 11px/11px 'Liberation Sans','DejaVu Sans',sans-serif;color:#242424;transform:scaleX(0.9333);">Cell Styles</span>
<svg style="left:615.25px;top:133.38px;" width="4.5" height="3.25" viewBox="0 0 4.5 3.25"><path d="M0.3 0.3 L2.25 2.25 L4.2 0.3" fill="none" stroke="#333" stroke-width="1.1" stroke-linecap="round" stroke-linejoin="round"/></svg>
<span style="left:604.00px;top:148.80px;font:400 10.2px/10.2px 'Liberation Sans','DejaVu Sans',sans-serif;color:#333;transform:scaleX(0.8829);">Styles</span>
<div style="left:699.50px;top:78.00px;width:1.00px;height:80.00px;background:#e1e1e1;"></div>
<svg style="left:709.00px;top:82.00px;" width="16" height="13" viewBox="0 0 16 13"><rect x="1.6" y=".6" width="12.8" height="11.8" fill="#fff" stroke="#555" stroke-width="1"/><path d="M1.6 4.5 h12.8 M1.6 8.5 h12.8 M5.9 .6 v11.8 M10.1 .6 v11.8" stroke="#666" stroke-width=".8"/><rect x="3" y="4.5" width="11.4" height="4" fill="#2f8ee0"/><path d="M0 6.5 h4 M1.8 4.7 l-1.8 1.8 l1.8 1.8" fill="none" stroke="#2f8ee0" stroke-width="1.1"/></svg>
<svg style="left:709.00px;top:104.50px;" width="16" height="13" viewBox="0 0 16 13"><rect x="1.6" y=".6" width="12.8" height="11.8" fill="#fff" stroke="#555" stroke-width="1"/><path d="M1.6 4.5 h12.8 M1.6 8.5 h12.8 M5.9 .6 v11.8 M10.1 .6 v11.8" stroke="#666" stroke-width=".8"/><rect x="3.5" y="4.5" width="6" height="4" fill="#2f8ee0"/><path d="M10.8 4 l4 5 M14.8 4 l-4 5" stroke="#e23b3b" stroke-width="1.1"/></svg>
<svg style="left:709.00px;top:128.00px;" width="16" height="13" viewBox="0 0 16 13"><rect x="1.6" y=".6" width="12.8" height="11.8" fill="#fff" stroke="#555" stroke-width="1"/><path d="M1.6 4.5 h12.8 M1.6 8.5 h12.8 M5.9 .6 v11.8 M10.1 .6 v11.8" stroke="#666" stroke-width=".8"/><rect x="5.9" y="4.5" width="4.2" height="4" fill="#2f8ee0"/><path d="M3 -1 h10 M3 -2.2 v2.4 M13 -2.2 v2.4" stroke="#2f8ee0" stroke-width=".9"/></svg>
<span style="left:727.50px;top:82.80px;font:400 11px/11px 'Liberation Sans','DejaVu Sans',sans-serif;color:#242424;transform:scaleX(1.0176);">Insert</span>
<svg style="left:769.75px;top:87.38px;" width="4.5" height="3.25" viewBox="0 0 4.5 3.25"><path d="M0.3 0.3 L2.25 2.25 L4.2 0.3" fill="none" stroke="#333" stroke-width="1.1" stroke-linecap="round" stroke-linejoin="round"/></svg>
<span style="left:727.50px;top:105.80px;font:400 11px/11px 'Liberation Sans','DejaVu Sans',sans-serif;color:#242424;">Delete</span>
<svg style="left:774.75px;top:110.38px;" width="4.5" height="3.25" viewBox="0 0 4.5 3.25"><path d="M0.3 0.3 L2.25 2.25 L4.2 0.3" fill="none" stroke="#333" stroke-width="1.1" stroke-linecap="round" stroke-linejoin="round"/></svg>
<span style="left:727.50px;top:128.80px;font:400 11px/11px 'Liberation Sans','DejaVu Sans',sans-serif;color:#242424;transform:scaleX(0.9901);">Format</span>
<svg style="left:766.75px;top:133.38px;" width="4.5" height="3.25" viewBox="0 0 4.5 3.25"><path d="M0.3 0.3 L2.25 2.25 L4.2 0.3" fill="none" stroke="#333" stroke-width="1.1" stroke-linecap="round" stroke-linejoin="round"/></svg>
<span style="left:735.00px;top:148.80px;font:400 10.2px/10.2px 'Liberation Sans','DejaVu Sans',sans-serif;color:#333;transform:scaleX(0.9490);">Cells</span>
<div style="left:792.50px;top:78.00px;width:1.00px;height:80.00px;background:#e1e1e1;"></div>
<svg style="left:804.50px;top:81.00px;" width="12" height="13" viewBox="0 0 12 13"><path d="M10.800 2.800 v-2 h-9.800 l5.600 5.700 l-5.600 5.700 h9.800 v-2" fill="none" stroke="#444" stroke-width="1.100" stroke-linejoin="miter"/></svg>
<svg style="left:827.75px;top:87.38px;" width="4.5" height="3.25" viewBox="0 0 4.5 3.25"><path d="M0.3 0.3 L2.25 2.25 L4.2 0.3" fill="none" stroke="#333" stroke-width="1.1" stroke-linecap="round" stroke-linejoin="round"/></svg>
<span style="left:846.50px;top:79.30px;font:400 8px/8px 'Liberation Sans','DejaVu Sans',sans-serif;color:#1e7fd6;">A</span>
<span style="left:846.50px;top:87.00px;font:400 8px/8px 'Liberation Sans','DejaVu Sans',sans-serif;color:#444;">Z</span>
<svg style="left:852.50px;top:84.00px;" width="8" height="9" viewBox="0 0 8 9"><path d="M.6 .6 h6.8 l-2.4 3.4 v3.8 l-2 -1 v-2.8z" fill="none" stroke="#444" stroke-width=".95" stroke-linejoin="round"/></svg>
<svg style="left:865.75px;top:87.38px;" width="4.5" height="3.25" viewBox="0 0 4.5 3.25"><path d="M0.3 0.3 L2.25 2.25 L4.2 0.3" fill="none" stroke="#333" stroke-width="1.1" stroke-linecap="round" stroke-linejoin="round"/></svg>
<svg style="left:803.00px;top:104.50px;" width="14" height="12" viewBox="0 0 14 12"><rect x=".6" y=".6" width="12.8" height="10.8" fill="#fff" stroke="#555" stroke-width="1"/><path d="M.6 3 h12.8" stroke="#555" stroke-width=".9"/><path d="M7 4.3 v5 M4.9 7.4 l2.1 2 l2.1-2" fill="none" stroke="#1e7fd6" stroke-width="1.05"/></svg>
<svg style="left:822.75px;top:109.88px;" width="4.5" height="3.25" viewBox="0 0 4.5 3.25"><path d="M0.3 0.3 L2.25 2.25 L4.2 0.3" fill="none" stroke="#333" stroke-width="1.1" stroke-linecap="round" stroke-linejoin="round"/></svg>
<svg style="left:846.00px;top:104.00px;" width="14" height="14" viewBox="0 0 14 14"><circle cx="8.5" cy="5.3" r="4.3" fill="none" stroke="#444" stroke-width="1.05"/><path d="M5.3 8.5 L.7 13.2" stroke="#444" stroke-width="1.15" stroke-linecap="round"/></svg>
<svg style="left:865.75px;top:109.88px;" width="4.5" height="3.25" viewBox="0 0 4.5 3.25"><path d="M0.3 0.3 L2.25 2.25 L4.2 0.3" fill="none" stroke="#333" stroke-width="1.1" stroke-linecap="round" stroke-linejoin="round"/></svg>
<svg style="left:803.00px;top:126.00px;" width="15" height="15" viewBox="0 0 15 15"><g transform="rotate(-42 7.500 7.500)"><rect x=".8" y="4.300" width="13.400" height="6.400" rx="1" fill="#fff" stroke="#b84bb0" stroke-width="1.050"/><path d="M.8 5.300 a1 1 0 0 1 1-1 h3.500 v6.400 h-3.500 a1 1 0 0 1-1-1z" fill="#d893d2" stroke="#b84bb0" stroke-width="1"/></g></svg>
<svg style="left:822.75px;top:132.88px;" width="4.5" height="3.25" viewBox="0 0 4.5 3.25"><path d="M0.3 0.3 L2.25 2.25 L4.2 0.3" fill="none" stroke="#333" stroke-width="1.1" stroke-linecap="round" stroke-linejoin="round"/></svg>
<span style="left:822.00px;top:148.80px;font:400 10.2px/10.2px 'Liberation Sans','DejaVu Sans',sans-serif;color:#333;">Editing</span>
<div style="left:883.00px;top:78.00px;width:1.00px;height:80.00px;background:#e1e1e1;"></div>
<svg style="left:897.00px;top:80.00px;" width="29" height="29" viewBox="0 0 29 29"><rect x=".8" y=".8" width="27" height="27" rx="1" fill="#fff" stroke="#e0683a" stroke-width="1.5"/><rect x="3.8" y="3.8" width="9.3" height="9.3" fill="none" stroke="#e0683a" stroke-width="1"/><rect x="15.6" y="3.8" width="9.3" height="9.3" fill="none" stroke="#e0683a" stroke-width="1"/><rect x="3.8" y="15.6" width="9.3" height="9.3" fill="none" stroke="#e0683a" stroke-width="1"/><rect x="15.6" y="15.6" width="9.3" height="9.3" fill="none" stroke="#e0683a" stroke-width="1"/></svg>
<span style="left:892.50px;top:113.80px;font:400 11px/11px 'Liberation Sans','DejaVu Sans',sans-serif;color:#242424;transform:scaleX(1.0189);">Add-ins</span>
<span style="left:893.50px;top:148.80px;font:400 10.2px/10.2px 'Liberation Sans','DejaVu Sans',sans-serif;color:#333;transform:scaleX(1.0131);">Add-ins</span>
<div style="left:939.00px;top:78.00px;width:1.00px;height:80.00px;background:#e1e1e1;"></div>
<svg style="left:955.00px;top:81.00px;" width="27" height="30" viewBox="0 0 27 30"><path d="M2 3 a2 2 0 0 1 2-2 h10 l6 6 v9 M2 3 v17 a2 2 0 0 0 2 2 h8" fill="none" stroke="#2b7de9" stroke-width="1.2"/><path d="M6.5 14.5 c2.5-2 4-6 3.6-8.3 c-.2-1-1.3-.8-1.2 .3 c.3 3 3 6 5.8 6.300 c1.200 0 1-1.200 0-1.200 c-3 0-6.200 1.200-8.200 2.900z" fill="none" stroke="#2b7de9" stroke-width=".9"/><g transform="rotate(-45 18.500 21)" fill="none"><rect x="10.300" y="18.200" width="16.400" height="5.600" rx="2.800" stroke="#fff" stroke-width="4"/><rect x="10.300" y="18.200" width="9.400" height="5.600" rx="2.800" stroke="#2b7de9" stroke-width="1.500"/><rect x="17.300" y="18.200" width="9.400" height="5.600" rx="2.800" stroke="#2b7de9" stroke-width="1.500"/></g></svg>
<span style="left:948.75px;top:113.80px;font:400 11px/11px 'Liberation Sans','DejaVu Sans',sans-serif;color:#242424;transform:scaleX(0.9839);">Create</span>
<span style="left:950.75px;top:128.80px;font:400 11px/11px 'Liberation Sans','DejaVu Sans',sans-serif;color:#242424;transform:scaleX(0.9138);">a PDF</span>
<span style="left:941.00px;top:148.80px;font:400 10.2px/10.2px 'Liberation Sans','DejaVu Sans',sans-serif;color:#333;transform:scaleX(0.9571);">Adobe A...</span>
<div style="left:990.50px;top:78.00px;width:1.00px;height:80.00px;background:#e1e1e1;"></div>
<svg style="left:1000.25px;top:147.88px;" width="8.5" height="5.25" viewBox="0 0 8.5 5.25"><path d="M0.3 0.3 L4.25 4.25 L8.2 0.3" fill="none" stroke="#333" stroke-width="1.1" stroke-linecap="round" stroke-linejoin="round"/></svg>
<div style="left:7.00px;top:169.00px;width:80.00px;height:17.50px;background:#fff;border-radius:4px;"></div>
<span style="left:10.50px;top:172.70px;font:400 10.6px/10.6px 'Liberation Sans','DejaVu Sans',sans-serif;color:#242424;transform:scaleX(0.9372);">J1</span>
<svg style="left:76.25px;top:176.68px;" width="6.5" height="4.25" viewBox="0 0 6.5 4.25"><path d="M0.3 0.3 L3.25 3.25 L6.2 0.3" fill="none" stroke="#333" stroke-width="1.1" stroke-linecap="round" stroke-linejoin="round"/></svg>
<div style="left:94.00px;top:173.00px;width:1.90px;height:1.90px;background:#444;border-radius:50%;"></div>
<div style="left:94.00px;top:176.50px;width:1.90px;height:1.90px;background:#444;border-radius:50%;"></div>
<div style="left:94.00px;top:180.00px;width:1.90px;height:1.90px;background:#444;border-radius:50%;"></div>
<div style="left:104.00px;top:169.00px;width:67.00px;height:17.50px;background:#fff;border-radius:4px;"></div>
<svg style="left:109.00px;top:173.50px;" width="9" height="9" viewBox="0 0 9 9"><path d="M.5 .5 L8.5 8.5 M8.5 .5 L.5 8.5" stroke="#b0b0b0" stroke-width="1"/></svg>
<svg style="left:126.00px;top:173.50px;" width="12" height="9" viewBox="0 0 12 9"><path d="M.5 5 L4 8.5 L11.5 .5" fill="none" stroke="#b0b0b0" stroke-width="1"/></svg>
<span style="left:146.00px;top:171.30px;font:italic 400 13px/13px 'Liberation Serif','DejaVu Serif',serif;color:#333;-webkit-text-stroke:.3px #333;transform:scaleX(1.1714);">fx</span>
<svg style="left:163.00px;top:176.80px;" width="6" height="4.0" viewBox="0 0 6 4.0"><path d="M0.3 0.3 L3.0 3.0 L5.7 0.3" fill="none" stroke="#666" stroke-width="1" stroke-linecap="round" stroke-linejoin="round"/></svg>
<div style="left:175.50px;top:169.00px;width:841.50px;height:17.50px;background:#fff;border-radius:4px;"></div>
<span style="left:184.00px;top:172.75px;font:400 10.5px/10.5px 'Liberation Sans','DejaVu Sans',sans-serif;color:#242424;transform:scaleX(0.9829);">Sum of وارد</span>
<svg style="left:1005.75px;top:175.62px;" width="7.5" height="4.75" viewBox="0 0 7.5 4.75"><path d="M0.3 0.3 L3.75 3.75 L7.2 0.3" fill="none" stroke="#333" stroke-width="1.1" stroke-linecap="round" stroke-linejoin="round"/></svg>
<div style="left:15.80px;top:201.50px;width:994.70px;height:289.50px;background:#fff;"></div>
<div style="left:17.00px;top:201.50px;width:536.50px;height:289.50px;background-image:repeating-linear-gradient(to bottom,transparent 0,transparent 9.63px,#e6e6e6 9.63px,#e6e6e6 10.63px);"></div>
<div style="left:17.00px;top:201.50px;width:536.50px;height:289.50px;background-image:repeating-linear-gradient(to right,transparent 0,transparent 30.45px,#e6e6e6 30.45px,#e6e6e6 31.45px);background-position:-28.60px 0;"></div>
<div style="left:997.30px;top:201.50px;width:13.20px;height:289.50px;background-image:repeating-linear-gradient(to bottom,transparent 0,transparent 9.63px,#e6e6e6 9.63px,#e6e6e6 10.63px);"></div>
<div style="left:1010.50px;top:201.50px;width:13.50px;height:289.50px;background:#e9ebec;border-left:1px solid #cfcfcf;"></div>
<div style="left:1010.50px;top:201.50px;width:13.50px;height:10.63px;background:#d3d5d5;"></div>
<div style="left:1010.50px;top:201.50px;width:1.60px;height:10.63px;background:#107c41;"></div>
<span style="left:1015.50px;top:203.41px;font:400 7.2px/7.2px 'Liberation Sans','DejaVu Sans',sans-serif;color:#0e5c2f;">1</span>
<div style="left:1011.00px;top:211.63px;width:13.00px;height:1.00px;background:#d4d4d4;"></div>
<span style="left:1015.50px;top:214.04px;font:400 7.2px/7.2px 'Liberation Sans','DejaVu Sans',sans-serif;color:#56606a;">2</span>
<div style="left:1011.00px;top:222.26px;width:13.00px;height:1.00px;background:#d4d4d4;"></div>
<span style="left:1015.50px;top:224.67px;font:400 7.2px/7.2px 'Liberation Sans','DejaVu Sans',sans-serif;color:#56606a;">3</span>
<div style="left:1011.00px;top:232.89px;width:13.00px;height:1.00px;background:#d4d4d4;"></div>
<span style="left:1015.50px;top:235.30px;font:400 7.2px/7.2px 'Liberation Sans','DejaVu Sans',sans-serif;color:#56606a;">4</span>
<div style="left:1011.00px;top:243.52px;width:13.00px;height:1.00px;background:#d4d4d4;"></div>
<span style="left:1015.50px;top:245.94px;font:400 7.2px/7.2px 'Liberation Sans','DejaVu Sans',sans-serif;color:#56606a;">5</span>
<div style="left:1011.00px;top:254.15px;width:13.00px;height:1.00px;background:#d4d4d4;"></div>
<span style="left:1015.50px;top:256.56px;font:400 7.2px/7.2px 'Liberation Sans','DejaVu Sans',sans-serif;color:#56606a;">6</span>
<div style="left:1011.00px;top:264.78px;width:13.00px;height:1.00px;background:#d4d4d4;"></div>
<span style="left:1015.50px;top:267.19px;font:400 7.2px/7.2px 'Liberation Sans','DejaVu Sans',sans-serif;color:#56606a;">7</span>
<div style="left:1011.00px;top:275.41px;width:13.00px;height:1.00px;background:#d4d4d4;"></div>
<span style="left:1015.50px;top:277.82px;font:400 7.2px/7.2px 'Liberation Sans','DejaVu Sans',sans-serif;color:#56606a;">8</span>
<div style="left:1011.00px;top:286.04px;width:13.00px;height:1.00px;background:#d4d4d4;"></div>
<span style="left:1015.50px;top:288.45px;font:400 7.2px/7.2px 'Liberation Sans','DejaVu Sans',sans-serif;color:#56606a;">9</span>
<div style="left:1011.00px;top:296.67px;width:13.00px;height:1.00px;background:#d4d4d4;"></div>
<span style="left:1013.50px;top:299.08px;font:400 7.2px/7.2px 'Liberation Sans','DejaVu Sans',sans-serif;color:#56606a;">10</span>
<div style="left:1011.00px;top:307.30px;width:13.00px;height:1.00px;background:#d4d4d4;"></div>
<span style="left:1013.77px;top:309.71px;font:400 7.2px/7.2px 'Liberation Sans','DejaVu Sans',sans-serif;color:#56606a;">11</span>
<div style="left:1011.00px;top:317.93px;width:13.00px;height:1.00px;background:#d4d4d4;"></div>
<span style="left:1013.50px;top:320.34px;font:400 7.2px/7.2px 'Liberation Sans','DejaVu Sans',sans-serif;color:#56606a;">12</span>
<div style="left:1011.00px;top:328.56px;width:13.00px;height:1.00px;background:#d4d4d4;"></div>
<span style="left:1013.50px;top:330.97px;font:400 7.2px/7.2px 'Liberation Sans','DejaVu Sans',sans-serif;color:#56606a;">13</span>
<div style="left:1011.00px;top:339.19px;width:13.00px;height:1.00px;background:#d4d4d4;"></div>
<span style="left:1013.50px;top:341.60px;font:400 7.2px/7.2px 'Liberation Sans','DejaVu Sans',sans-serif;color:#56606a;">14</span>
<div style="left:1011.00px;top:349.82px;width:13.00px;height:1.00px;background:#d4d4d4;"></div>
<span style="left:1013.50px;top:352.24px;font:400 7.2px/7.2px 'Liberation Sans','DejaVu Sans',sans-serif;color:#56606a;">15</span>
<div style="left:1011.00px;top:360.45px;width:13.00px;height:1.00px;background:#d4d4d4;"></div>
<span style="left:1013.50px;top:362.87px;font:400 7.2px/7.2px 'Liberation Sans','DejaVu Sans',sans-serif;color:#56606a;">16</span>
<div style="left:1011.00px;top:371.08px;width:13.00px;height:1.00px;background:#d4d4d4;"></div>
<span style="left:1013.50px;top:373.50px;font:400 7.2px/7.2px 'Liberation Sans','DejaVu Sans',sans-serif;color:#56606a;">17</span>
<div style="left:1011.00px;top:381.71px;width:13.00px;height:1.00px;background:#d4d4d4;"></div>
<span style="left:1013.50px;top:384.12px;font:400 7.2px/7.2px 'Liberation Sans','DejaVu Sans',sans-serif;color:#56606a;">18</span>
<div style="left:1011.00px;top:392.34px;width:13.00px;height:1.00px;background:#d4d4d4;"></div>
<span style="left:1013.50px;top:394.75px;font:400 7.2px/7.2px 'Liberation Sans','DejaVu Sans',sans-serif;color:#56606a;">19</span>
<div style="left:1011.00px;top:402.97px;width:13.00px;height:1.00px;background:#d4d4d4;"></div>
<span style="left:1013.50px;top:405.38px;font:400 7.2px/7.2px 'Liberation Sans','DejaVu Sans',sans-serif;color:#56606a;">20</span>
<div style="left:1011.00px;top:413.60px;width:13.00px;height:1.00px;background:#d4d4d4;"></div>
<span style="left:1013.50px;top:416.01px;font:400 7.2px/7.2px 'Liberation Sans','DejaVu Sans',sans-serif;color:#56606a;">21</span>
<div style="left:1011.00px;top:424.23px;width:13.00px;height:1.00px;background:#d4d4d4;"></div>
<span style="left:1013.50px;top:426.64px;font:400 7.2px/7.2px 'Liberation Sans','DejaVu Sans',sans-serif;color:#56606a;">22</span>
<div style="left:1011.00px;top:434.86px;width:13.00px;height:1.00px;background:#d4d4d4;"></div>
<span style="left:1013.50px;top:437.27px;font:400 7.2px/7.2px 'Liberation Sans','DejaVu Sans',sans-serif;color:#56606a;">23</span>
<div style="left:1011.00px;top:445.49px;width:13.00px;height:1.00px;background:#d4d4d4;"></div>
<span style="left:1013.50px;top:447.90px;font:400 7.2px/7.2px 'Liberation Sans','DejaVu Sans',sans-serif;color:#56606a;">24</span>
<div style="left:1011.00px;top:456.12px;width:13.00px;height:1.00px;background:#d4d4d4;"></div>
<span style="left:1013.50px;top:458.53px;font:400 7.2px/7.2px 'Liberation Sans','DejaVu Sans',sans-serif;color:#56606a;">25</span>
<div style="left:1011.00px;top:466.75px;width:13.00px;height:1.00px;background:#d4d4d4;"></div>
<span style="left:1013.50px;top:469.16px;font:400 7.2px/7.2px 'Liberation Sans','DejaVu Sans',sans-serif;color:#56606a;">26</span>
<div style="left:1011.00px;top:477.38px;width:13.00px;height:1.00px;background:#d4d4d4;"></div>
<span style="left:1013.50px;top:479.79px;font:400 7.2px/7.2px 'Liberation Sans','DejaVu Sans',sans-serif;color:#56606a;">27</span>
<div style="left:1011.00px;top:488.01px;width:13.00px;height:1.00px;background:#d4d4d4;"></div>
<div style="left:15.80px;top:192.50px;width:1008.20px;height:8.50px;background:#e9ebec;"></div>
<div style="left:15.80px;top:200.70px;width:1008.20px;height:1.00px;background:#c6c8c8;"></div>
<span style="left:29.98px;top:193.20px;font:400 7.2px/7.2px 'Liberation Sans','DejaVu Sans',sans-serif;color:#555;">AF</span>
<div style="left:18.85px;top:194.50px;width:1.00px;height:6.00px;background:#dfe1e1;"></div>
<span style="left:61.23px;top:193.20px;font:400 7.2px/7.2px 'Liberation Sans','DejaVu Sans',sans-serif;color:#555;">AE</span>
<div style="left:50.30px;top:194.50px;width:1.00px;height:6.00px;background:#dfe1e1;"></div>
<span style="left:92.47px;top:193.20px;font:400 7.2px/7.2px 'Liberation Sans','DejaVu Sans',sans-serif;color:#555;">AD</span>
<div style="left:81.75px;top:194.50px;width:1.00px;height:6.00px;background:#dfe1e1;"></div>
<span style="left:123.92px;top:193.20px;font:400 7.2px/7.2px 'Liberation Sans','DejaVu Sans',sans-serif;color:#555;">AC</span>
<div style="left:113.20px;top:194.50px;width:1.00px;height:6.00px;background:#dfe1e1;"></div>
<span style="left:155.58px;top:193.20px;font:400 7.2px/7.2px 'Liberation Sans','DejaVu Sans',sans-serif;color:#555;">AB</span>
<div style="left:144.65px;top:194.50px;width:1.00px;height:6.00px;background:#dfe1e1;"></div>
<span style="left:187.03px;top:193.20px;font:400 7.2px/7.2px 'Liberation Sans','DejaVu Sans',sans-serif;color:#555;">AA</span>
<div style="left:176.10px;top:194.50px;width:1.00px;height:6.00px;background:#dfe1e1;"></div>
<span style="left:221.08px;top:193.20px;font:400 7.2px/7.2px 'Liberation Sans','DejaVu Sans',sans-serif;color:#555;">Z</span>
<div style="left:207.55px;top:194.50px;width:1.00px;height:6.00px;background:#dfe1e1;"></div>
<span style="left:252.33px;top:193.20px;font:400 7.2px/7.2px 'Liberation Sans','DejaVu Sans',sans-serif;color:#555;">Y</span>
<div style="left:239.00px;top:194.50px;width:1.00px;height:6.00px;background:#dfe1e1;"></div>
<span style="left:283.78px;top:193.20px;font:400 7.2px/7.2px 'Liberation Sans','DejaVu Sans',sans-serif;color:#555;">X</span>
<div style="left:270.45px;top:194.50px;width:1.00px;height:6.00px;background:#dfe1e1;"></div>
<span style="left:314.23px;top:193.20px;font:400 7.2px/7.2px 'Liberation Sans','DejaVu Sans',sans-serif;color:#555;">W</span>
<div style="left:301.90px;top:194.50px;width:1.00px;height:6.00px;background:#dfe1e1;"></div>
<span style="left:346.68px;top:193.20px;font:400 7.2px/7.2px 'Liberation Sans','DejaVu Sans',sans-serif;color:#555;">V</span>
<div style="left:333.35px;top:194.50px;width:1.00px;height:6.00px;background:#dfe1e1;"></div>
<span style="left:377.92px;top:193.20px;font:400 7.2px/7.2px 'Liberation Sans','DejaVu Sans',sans-serif;color:#555;">U</span>
<div style="left:364.80px;top:194.50px;width:1.00px;height:6.00px;background:#dfe1e1;"></div>
<span style="left:409.78px;top:193.20px;font:400 7.2px/7.2px 'Liberation Sans','DejaVu Sans',sans-serif;color:#555;">T</span>
<div style="left:396.25px;top:194.50px;width:1.00px;height:6.00px;background:#dfe1e1;"></div>
<span style="left:441.03px;top:193.20px;font:400 7.2px/7.2px 'Liberation Sans','DejaVu Sans',sans-serif;color:#555;">S</span>
<div style="left:427.70px;top:194.50px;width:1.00px;height:6.00px;background:#dfe1e1;"></div>
<span style="left:472.27px;top:193.20px;font:400 7.2px/7.2px 'Liberation Sans','DejaVu Sans',sans-serif;color:#555;">R</span>
<div style="left:459.15px;top:194.50px;width:1.00px;height:6.00px;background:#dfe1e1;"></div>
<span style="left:503.53px;top:193.20px;font:400 7.2px/7.2px 'Liberation Sans','DejaVu Sans',sans-serif;color:#555;">Q</span>
<div style="left:490.60px;top:194.50px;width:1.00px;height:6.00px;background:#dfe1e1;"></div>
<span style="left:535.38px;top:193.20px;font:400 7.2px/7.2px 'Liberation Sans','DejaVu Sans',sans-serif;color:#555;">P</span>
<div style="left:522.05px;top:194.50px;width:1.00px;height:6.00px;background:#dfe1e1;"></div>
<div style="left:553.50px;top:194.50px;width:1.00px;height:6.00px;background:#dfe1e1;"></div>
<span style="left:586.20px;top:193.20px;font:400 7.2px/7.2px 'Liberation Sans','DejaVu Sans',sans-serif;color:#555;">O</span>
<div style="left:624.50px;top:194.50px;width:1.00px;height:6.00px;background:#dfe1e1;"></div>
<span style="left:655.15px;top:193.20px;font:400 7.2px/7.2px 'Liberation Sans','DejaVu Sans',sans-serif;color:#555;">N</span>
<div style="left:691.00px;top:194.50px;width:1.00px;height:6.00px;background:#dfe1e1;"></div>
<span style="left:723.75px;top:193.20px;font:400 7.2px/7.2px 'Liberation Sans','DejaVu Sans',sans-serif;color:#555;">M</span>
<div style="left:762.50px;top:194.50px;width:1.00px;height:6.00px;background:#dfe1e1;"></div>
<span style="left:789.75px;top:193.20px;font:400 7.2px/7.2px 'Liberation Sans','DejaVu Sans',sans-serif;color:#555;">L</span>
<div style="left:821.00px;top:194.50px;width:1.00px;height:6.00px;background:#dfe1e1;"></div>
<span style="left:842.20px;top:193.20px;font:400 7.2px/7.2px 'Liberation Sans','DejaVu Sans',sans-serif;color:#555;">K</span>
<div style="left:868.20px;top:194.50px;width:1.00px;height:6.00px;background:#dfe1e1;"></div>
<div style="left:868.20px;top:192.50px;width:47.60px;height:8.50px;background:#d3d5d5;"></div>
<div style="left:868.20px;top:200.00px;width:47.60px;height:1.50px;background:#107c41;"></div>
<span style="left:890.20px;top:193.20px;font:400 7.2px/7.2px 'Liberation Sans','DejaVu Sans',sans-serif;color:#555;">J</span>
<div style="left:915.80px;top:194.50px;width:1.00px;height:6.00px;background:#dfe1e1;"></div>
<span style="left:955.55px;top:193.20px;font:400 7.2px/7.2px 'Liberation Sans','DejaVu Sans',sans-serif;color:#555;">I</span>
<div style="left:997.30px;top:194.50px;width:1.00px;height:6.00px;background:#dfe1e1;"></div>
<svg style="left:1012.00px;top:195.00px;" width="5" height="5" viewBox="0 0 5 5"><path d="M5 0 V5 H0z" fill="#cdcfcf"/></svg>
<div style="left:1010.30px;top:193.50px;width:1.00px;height:7.00px;background:#cfcfcf;"></div>
<div style="left:553.50px;top:201.50px;width:362.30px;height:289.50px;background:#ffc000;"></div>
<div style="left:553.50px;top:201.50px;width:443.80px;height:10.63px;background:#c00000;"></div>
<div style="left:915.80px;top:201.50px;width:81.50px;height:289.50px;background:#c00000;"></div>
<div style="left:553.50px;top:211.63px;width:362.30px;height:1.00px;background:#3a2c00;opacity:.85;"></div>
<div style="left:915.80px;top:211.63px;width:81.50px;height:1.00px;background:#5e0000;opacity:.8;"></div>
<div style="left:553.50px;top:222.26px;width:362.30px;height:1.00px;background:#3a2c00;opacity:.85;"></div>
<div style="left:915.80px;top:222.26px;width:81.50px;height:1.00px;background:#5e0000;opacity:.8;"></div>
<div style="left:553.50px;top:232.89px;width:362.30px;height:1.00px;background:#3a2c00;opacity:.85;"></div>
<div style="left:915.80px;top:232.89px;width:81.50px;height:1.00px;background:#5e0000;opacity:.8;"></div>
<div style="left:553.50px;top:243.52px;width:362.30px;height:1.00px;background:#3a2c00;opacity:.85;"></div>
<div style="left:915.80px;top:243.52px;width:81.50px;height:1.00px;background:#5e0000;opacity:.8;"></div>
<div style="left:553.50px;top:254.15px;width:362.30px;height:1.00px;background:#3a2c00;opacity:.85;"></div>
<div style="left:915.80px;top:254.15px;width:81.50px;height:1.00px;background:#5e0000;opacity:.8;"></div>
<div style="left:553.50px;top:264.78px;width:362.30px;height:1.00px;background:#3a2c00;opacity:.85;"></div>
<div style="left:915.80px;top:264.78px;width:81.50px;height:1.00px;background:#5e0000;opacity:.8;"></div>
<div style="left:553.50px;top:275.41px;width:362.30px;height:1.00px;background:#3a2c00;opacity:.85;"></div>
<div style="left:915.80px;top:275.41px;width:81.50px;height:1.00px;background:#5e0000;opacity:.8;"></div>
<div style="left:553.50px;top:286.04px;width:362.30px;height:1.00px;background:#3a2c00;opacity:.85;"></div>
<div style="left:915.80px;top:286.04px;width:81.50px;height:1.00px;background:#5e0000;opacity:.8;"></div>
<div style="left:553.50px;top:296.67px;width:362.30px;height:1.00px;background:#3a2c00;opacity:.85;"></div>
<div style="left:915.80px;top:296.67px;width:81.50px;height:1.00px;background:#5e0000;opacity:.8;"></div>
<div style="left:553.50px;top:307.30px;width:362.30px;height:1.00px;background:#3a2c00;opacity:.85;"></div>
<div style="left:915.80px;top:307.30px;width:81.50px;height:1.00px;background:#5e0000;opacity:.8;"></div>
<div style="left:553.50px;top:317.93px;width:362.30px;height:1.00px;background:#3a2c00;opacity:.85;"></div>
<div style="left:915.80px;top:317.93px;width:81.50px;height:1.00px;background:#5e0000;opacity:.8;"></div>
<div style="left:553.50px;top:328.56px;width:362.30px;height:1.00px;background:#3a2c00;opacity:.85;"></div>
<div style="left:915.80px;top:328.56px;width:81.50px;height:1.00px;background:#5e0000;opacity:.8;"></div>
<div style="left:553.50px;top:339.19px;width:362.30px;height:1.00px;background:#3a2c00;opacity:.85;"></div>
<div style="left:915.80px;top:339.19px;width:81.50px;height:1.00px;background:#5e0000;opacity:.8;"></div>
<div style="left:553.50px;top:349.82px;width:362.30px;height:1.00px;background:#3a2c00;opacity:.85;"></div>
<div style="left:915.80px;top:349.82px;width:81.50px;height:1.00px;background:#5e0000;opacity:.8;"></div>
<div style="left:553.50px;top:360.45px;width:362.30px;height:1.00px;background:#3a2c00;opacity:.85;"></div>
<div style="left:915.80px;top:360.45px;width:81.50px;height:1.00px;background:#5e0000;opacity:.8;"></div>
<div style="left:553.50px;top:371.08px;width:362.30px;height:1.00px;background:#3a2c00;opacity:.85;"></div>
<div style="left:915.80px;top:371.08px;width:81.50px;height:1.00px;background:#5e0000;opacity:.8;"></div>
<div style="left:553.50px;top:381.71px;width:362.30px;height:1.00px;background:#3a2c00;opacity:.85;"></div>
<div style="left:915.80px;top:381.71px;width:81.50px;height:1.00px;background:#5e0000;opacity:.8;"></div>
<div style="left:553.50px;top:392.34px;width:362.30px;height:1.00px;background:#3a2c00;opacity:.85;"></div>
<div style="left:915.80px;top:392.34px;width:81.50px;height:1.00px;background:#5e0000;opacity:.8;"></div>
<div style="left:553.50px;top:402.97px;width:362.30px;height:1.00px;background:#3a2c00;opacity:.85;"></div>
<div style="left:915.80px;top:402.97px;width:81.50px;height:1.00px;background:#5e0000;opacity:.8;"></div>
<div style="left:553.50px;top:413.60px;width:362.30px;height:1.00px;background:#3a2c00;opacity:.85;"></div>
<div style="left:915.80px;top:413.60px;width:81.50px;height:1.00px;background:#5e0000;opacity:.8;"></div>
<div style="left:553.50px;top:424.23px;width:362.30px;height:1.00px;background:#3a2c00;opacity:.85;"></div>
<div style="left:915.80px;top:424.23px;width:81.50px;height:1.00px;background:#5e0000;opacity:.8;"></div>
<div style="left:553.50px;top:434.86px;width:362.30px;height:1.00px;background:#3a2c00;opacity:.85;"></div>
<div style="left:915.80px;top:434.86px;width:81.50px;height:1.00px;background:#5e0000;opacity:.8;"></div>
<div style="left:553.50px;top:445.49px;width:362.30px;height:1.00px;background:#3a2c00;opacity:.85;"></div>
<div style="left:915.80px;top:445.49px;width:81.50px;height:1.00px;background:#5e0000;opacity:.8;"></div>
<div style="left:553.50px;top:456.12px;width:362.30px;height:1.00px;background:#3a2c00;opacity:.85;"></div>
<div style="left:915.80px;top:456.12px;width:81.50px;height:1.00px;background:#5e0000;opacity:.8;"></div>
<div style="left:553.50px;top:466.75px;width:362.30px;height:1.00px;background:#3a2c00;opacity:.85;"></div>
<div style="left:915.80px;top:466.75px;width:81.50px;height:1.00px;background:#5e0000;opacity:.8;"></div>
<div style="left:553.50px;top:477.38px;width:362.30px;height:1.00px;background:#3a2c00;opacity:.85;"></div>
<div style="left:915.80px;top:477.38px;width:81.50px;height:1.00px;background:#5e0000;opacity:.8;"></div>
<div style="left:553.50px;top:488.01px;width:362.30px;height:1.00px;background:#3a2c00;opacity:.85;"></div>
<div style="left:915.80px;top:488.01px;width:81.50px;height:1.00px;background:#5e0000;opacity:.8;"></div>
<div style="left:553.00px;top:201.50px;width:1.00px;height:289.50px;background:#3a2c00;opacity:.85;"></div>
<div style="left:624.00px;top:212.13px;width:1.00px;height:278.87px;background:#3a2c00;opacity:.85;"></div>
<div style="left:690.50px;top:212.13px;width:1.00px;height:278.87px;background:#3a2c00;opacity:.85;"></div>
<div style="left:762.00px;top:212.13px;width:1.00px;height:278.87px;background:#3a2c00;opacity:.85;"></div>
<div style="left:820.50px;top:212.13px;width:1.00px;height:278.87px;background:#3a2c00;opacity:.85;"></div>
<div style="left:867.70px;top:212.13px;width:1.00px;height:278.87px;background:#3a2c00;opacity:.85;"></div>
<div style="left:915.30px;top:212.13px;width:1.00px;height:278.87px;background:#3a2c00;opacity:.85;"></div>
<div style="left:624.00px;top:201.50px;width:1.00px;height:10.63px;background:#7a0000;opacity:.7;"></div>
<div style="left:690.50px;top:201.50px;width:1.00px;height:10.63px;background:#7a0000;opacity:.7;"></div>
<div style="left:762.00px;top:201.50px;width:1.00px;height:10.63px;background:#7a0000;opacity:.7;"></div>
<div style="left:820.50px;top:201.50px;width:1.00px;height:10.63px;background:#7a0000;opacity:.7;"></div>
<div style="left:867.70px;top:201.50px;width:1.00px;height:10.63px;background:#7a0000;opacity:.7;"></div>
<div style="left:915.30px;top:201.50px;width:1.00px;height:10.63px;background:#7a0000;opacity:.7;"></div>
<span style="left:555.00px;top:203.12px;font:700 8px/8px 'Liberation Mono','DejaVu Sans Mono',monospace;color:#fff;transform:scaleX(0.8837);">Sum of سعر البيع</span>
<span style="left:632.75px;top:203.12px;font:700 8px/8px 'Liberation Mono','DejaVu Sans Mono',monospace;color:#fff;transform:scaleX(0.8665);">Sum of الربح</span>
<span style="left:691.75px;top:203.12px;font:700 8px/8px 'Liberation Mono','DejaVu Sans Mono',monospace;color:#fff;transform:scaleX(0.8561);">Sum of سعر المصنع</span>
<span style="left:766.75px;top:203.12px;font:700 8px/8px 'Liberation Mono','DejaVu Sans Mono',monospace;color:#fff;transform:scaleX(0.8665);">Sum of السعر</span>
<span style="left:821.60px;top:203.12px;font:700 8px/8px 'Liberation Mono','DejaVu Sans Mono',monospace;color:#fff;transform:scaleX(0.8700);">Sum of صادر</span>
<span style="left:869.35px;top:203.12px;font:700 8px/8px 'Liberation Mono','DejaVu Sans Mono',monospace;color:#fff;transform:scaleX(0.8567);">Sum of وارد</span>
<span style="left:934.55px;top:203.12px;font:700 8px/8px 'Liberation Mono','DejaVu Sans Mono',monospace;color:#fff;transform:scaleX(0.8789);">Row Labels</span>
<div style="left:916.50px;top:202.50px;width:9.00px;height:8.63px;background:linear-gradient(#fff,#dcdcdc);border:1px solid #9a9a9a;"></div>
<svg style="left:918.70px;top:205.70px;" width="5" height="3" viewBox="0 0 5 3"><path d="M0 0 h5 l-2.500 3z" fill="#333"/></svg>
<div style="left:867.70px;top:201.00px;width:48.60px;height:11.63px;border:1.3px solid #107c41;"></div>
<div style="left:866.20px;top:210.13px;width:3.50px;height:3.50px;background:#107c41;border:.5px solid #fff;"></div>
<span style="left:929.16px;top:213.64px;font:700 8px/8px 'Liberation Mono','DejaVu Sans Mono',monospace;color:#fff;direction:rtl;transform:scaleX(0.8750);">اسمنت السويدى</span>
<span style="left:883.60px;top:213.64px;font:700 8px/8px 'Liberation Mono','DejaVu Sans Mono',monospace;color:#2a2000;transform:scaleX(0.8749);">24.0</span>
<span style="left:836.20px;top:213.64px;font:700 8px/8px 'Liberation Mono','DejaVu Sans Mono',monospace;color:#2a2000;transform:scaleX(0.8749);">23.0</span>
<span style="left:772.70px;top:213.64px;font:700 8px/8px 'Liberation Mono','DejaVu Sans Mono',monospace;color:#2a2000;transform:scaleX(0.8744);">4,000</span>
<span style="left:799.00px;top:213.64px;font:700 8px/8px 'Liberation Mono','DejaVu Sans Mono',monospace;color:#2a2000;direction:rtl;transform:scaleX(0.8838);">ج.م.</span>
<span style="left:710.00px;top:213.64px;font:700 8px/8px 'Liberation Mono','DejaVu Sans Mono',monospace;color:#2a2000;transform:scaleX(0.8746);">92,000</span>
<span style="left:740.50px;top:213.64px;font:700 8px/8px 'Liberation Mono','DejaVu Sans Mono',monospace;color:#2a2000;direction:rtl;transform:scaleX(0.8838);">ج.م.</span>
<span style="left:642.70px;top:213.64px;font:700 8px/8px 'Liberation Mono','DejaVu Sans Mono',monospace;color:#2a2000;transform:scaleX(0.8744);">9,200</span>
<span style="left:669.00px;top:213.64px;font:700 8px/8px 'Liberation Mono','DejaVu Sans Mono',monospace;color:#2a2000;direction:rtl;transform:scaleX(0.8838);">ج.م.</span>
<span style="left:567.80px;top:213.64px;font:700 8px/8px 'Liberation Mono','DejaVu Sans Mono',monospace;color:#2a2000;transform:scaleX(0.8748);">101,200</span>
<span style="left:602.50px;top:213.64px;font:700 8px/8px 'Liberation Mono','DejaVu Sans Mono',monospace;color:#2a2000;direction:rtl;transform:scaleX(0.8838);">ج.م.</span>
<span style="left:929.16px;top:224.27px;font:700 8px/8px 'Liberation Mono','DejaVu Sans Mono',monospace;color:#fff;direction:rtl;transform:scaleX(0.8750);">اسمنت العربية</span>
<span style="left:881.50px;top:224.27px;font:700 8px/8px 'Liberation Mono','DejaVu Sans Mono',monospace;color:#2a2000;transform:scaleX(0.8744);">100.0</span>
<span style="left:836.20px;top:224.27px;font:700 8px/8px 'Liberation Mono','DejaVu Sans Mono',monospace;color:#2a2000;transform:scaleX(0.8749);">99.0</span>
<span style="left:772.70px;top:224.27px;font:700 8px/8px 'Liberation Mono','DejaVu Sans Mono',monospace;color:#2a2000;transform:scaleX(0.8744);">4,300</span>
<span style="left:799.00px;top:224.27px;font:700 8px/8px 'Liberation Mono','DejaVu Sans Mono',monospace;color:#2a2000;direction:rtl;transform:scaleX(0.8838);">ج.م.</span>
<span style="left:705.80px;top:224.27px;font:700 8px/8px 'Liberation Mono','DejaVu Sans Mono',monospace;color:#2a2000;transform:scaleX(0.8748);">425,700</span>
<span style="left:740.50px;top:224.27px;font:700 8px/8px 'Liberation Mono','DejaVu Sans Mono',monospace;color:#2a2000;direction:rtl;transform:scaleX(0.8838);">ج.م.</span>
<span style="left:638.50px;top:224.27px;font:700 8px/8px 'Liberation Mono','DejaVu Sans Mono',monospace;color:#2a2000;transform:scaleX(0.8746);">42,570</span>
<span style="left:669.00px;top:224.27px;font:700 8px/8px 'Liberation Mono','DejaVu Sans Mono',monospace;color:#2a2000;direction:rtl;transform:scaleX(0.8838);">ج.م.</span>
<span style="left:567.80px;top:224.27px;font:700 8px/8px 'Liberation Mono','DejaVu Sans Mono',monospace;color:#2a2000;transform:scaleX(0.8748);">468,270</span>
<span style="left:602.50px;top:224.27px;font:700 8px/8px 'Liberation Mono','DejaVu Sans Mono',monospace;color:#2a2000;direction:rtl;transform:scaleX(0.8838);">ج.م.</span>
<span style="left:933.38px;top:234.90px;font:700 8px/8px 'Liberation Mono','DejaVu Sans Mono',monospace;color:#fff;direction:rtl;transform:scaleX(0.8750);">اسمنت سيناء</span>
<span style="left:883.60px;top:234.90px;font:700 8px/8px 'Liberation Mono','DejaVu Sans Mono',monospace;color:#2a2000;transform:scaleX(0.8749);">57.0</span>
<span style="left:836.20px;top:234.90px;font:700 8px/8px 'Liberation Mono','DejaVu Sans Mono',monospace;color:#2a2000;transform:scaleX(0.8749);">56.0</span>
<span style="left:772.70px;top:234.90px;font:700 8px/8px 'Liberation Mono','DejaVu Sans Mono',monospace;color:#2a2000;transform:scaleX(0.8744);">4,400</span>
<span style="left:799.00px;top:234.90px;font:700 8px/8px 'Liberation Mono','DejaVu Sans Mono',monospace;color:#2a2000;direction:rtl;transform:scaleX(0.8838);">ج.م.</span>
<span style="left:705.80px;top:234.90px;font:700 8px/8px 'Liberation Mono','DejaVu Sans Mono',monospace;color:#2a2000;transform:scaleX(0.8748);">246,400</span>
<span style="left:740.50px;top:234.90px;font:700 8px/8px 'Liberation Mono','DejaVu Sans Mono',monospace;color:#2a2000;direction:rtl;transform:scaleX(0.8838);">ج.م.</span>
<span style="left:638.50px;top:234.90px;font:700 8px/8px 'Liberation Mono','DejaVu Sans Mono',monospace;color:#2a2000;transform:scaleX(0.8746);">24,640</span>
<span style="left:669.00px;top:234.90px;font:700 8px/8px 'Liberation Mono','DejaVu Sans Mono',monospace;color:#2a2000;direction:rtl;transform:scaleX(0.8838);">ج.م.</span>
<span style="left:567.80px;top:234.90px;font:700 8px/8px 'Liberation Mono','DejaVu Sans Mono',monospace;color:#2a2000;transform:scaleX(0.8748);">271,040</span>
<span style="left:602.50px;top:234.90px;font:700 8px/8px 'Liberation Mono','DejaVu Sans Mono',monospace;color:#2a2000;direction:rtl;transform:scaleX(0.8838);">ج.م.</span>
<span style="left:939.70px;top:245.53px;font:700 8px/8px 'Liberation Mono','DejaVu Sans Mono',monospace;color:#fff;direction:rtl;transform:scaleX(0.8750);">زلط سن ١</span>
<span style="left:883.60px;top:245.53px;font:700 8px/8px 'Liberation Mono','DejaVu Sans Mono',monospace;color:#2a2000;transform:scaleX(0.8749);">88.0</span>
<span style="left:836.20px;top:245.53px;font:700 8px/8px 'Liberation Mono','DejaVu Sans Mono',monospace;color:#2a2000;transform:scaleX(0.8749);">87.0</span>
<span style="left:781.10px;top:245.53px;font:700 8px/8px 'Liberation Mono','DejaVu Sans Mono',monospace;color:#2a2000;transform:scaleX(0.8746);">280</span>
<span style="left:799.00px;top:245.53px;font:700 8px/8px 'Liberation Mono','DejaVu Sans Mono',monospace;color:#2a2000;direction:rtl;transform:scaleX(0.8838);">ج.م.</span>
<span style="left:710.00px;top:245.53px;font:700 8px/8px 'Liberation Mono','DejaVu Sans Mono',monospace;color:#2a2000;transform:scaleX(0.8746);">24,360</span>
<span style="left:740.50px;top:245.53px;font:700 8px/8px 'Liberation Mono','DejaVu Sans Mono',monospace;color:#2a2000;direction:rtl;transform:scaleX(0.8838);">ج.م.</span>
<span style="left:642.70px;top:245.53px;font:700 8px/8px 'Liberation Mono','DejaVu Sans Mono',monospace;color:#2a2000;transform:scaleX(0.8744);">2,436</span>
<span style="left:669.00px;top:245.53px;font:700 8px/8px 'Liberation Mono','DejaVu Sans Mono',monospace;color:#2a2000;direction:rtl;transform:scaleX(0.8838);">ج.م.</span>
<span style="left:572.00px;top:245.53px;font:700 8px/8px 'Liberation Mono','DejaVu Sans Mono',monospace;color:#2a2000;transform:scaleX(0.8746);">26,796</span>
<span style="left:602.50px;top:245.53px;font:700 8px/8px 'Liberation Mono','DejaVu Sans Mono',monospace;color:#2a2000;direction:rtl;transform:scaleX(0.8838);">ج.م.</span>
<span style="left:939.70px;top:256.17px;font:700 8px/8px 'Liberation Mono','DejaVu Sans Mono',monospace;color:#fff;direction:rtl;transform:scaleX(0.8750);">زلط سن ٢</span>
<span style="left:883.60px;top:256.17px;font:700 8px/8px 'Liberation Mono','DejaVu Sans Mono',monospace;color:#2a2000;transform:scaleX(0.8749);">56.0</span>
<span style="left:836.20px;top:256.17px;font:700 8px/8px 'Liberation Mono','DejaVu Sans Mono',monospace;color:#2a2000;transform:scaleX(0.8749);">55.0</span>
<span style="left:781.10px;top:256.17px;font:700 8px/8px 'Liberation Mono','DejaVu Sans Mono',monospace;color:#2a2000;transform:scaleX(0.8746);">300</span>
<span style="left:799.00px;top:256.17px;font:700 8px/8px 'Liberation Mono','DejaVu Sans Mono',monospace;color:#2a2000;direction:rtl;transform:scaleX(0.8838);">ج.م.</span>
<span style="left:710.00px;top:256.17px;font:700 8px/8px 'Liberation Mono','DejaVu Sans Mono',monospace;color:#2a2000;transform:scaleX(0.8746);">16,500</span>
<span style="left:740.50px;top:256.17px;font:700 8px/8px 'Liberation Mono','DejaVu Sans Mono',monospace;color:#2a2000;direction:rtl;transform:scaleX(0.8838);">ج.م.</span>
<span style="left:642.70px;top:256.17px;font:700 8px/8px 'Liberation Mono','DejaVu Sans Mono',monospace;color:#2a2000;transform:scaleX(0.8744);">1,650</span>
<span style="left:669.00px;top:256.17px;font:700 8px/8px 'Liberation Mono','DejaVu Sans Mono',monospace;color:#2a2000;direction:rtl;transform:scaleX(0.8838);">ج.م.</span>
<span style="left:572.00px;top:256.17px;font:700 8px/8px 'Liberation Mono','DejaVu Sans Mono',monospace;color:#2a2000;transform:scaleX(0.8746);">18,150</span>
<span style="left:602.50px;top:256.17px;font:700 8px/8px 'Liberation Mono','DejaVu Sans Mono',monospace;color:#2a2000;direction:rtl;transform:scaleX(0.8838);">ج.م.</span>
<span style="left:939.70px;top:266.79px;font:700 8px/8px 'Liberation Mono','DejaVu Sans Mono',monospace;color:#fff;direction:rtl;transform:scaleX(0.8750);">زلط فينو</span>
<span style="left:883.60px;top:266.79px;font:700 8px/8px 'Liberation Mono','DejaVu Sans Mono',monospace;color:#2a2000;transform:scaleX(0.8749);">56.0</span>
<span style="left:836.20px;top:266.79px;font:700 8px/8px 'Liberation Mono','DejaVu Sans Mono',monospace;color:#2a2000;transform:scaleX(0.8749);">56.0</span>
<span style="left:781.10px;top:266.79px;font:700 8px/8px 'Liberation Mono','DejaVu Sans Mono',monospace;color:#2a2000;transform:scaleX(0.8746);">260</span>
<span style="left:799.00px;top:266.79px;font:700 8px/8px 'Liberation Mono','DejaVu Sans Mono',monospace;color:#2a2000;direction:rtl;transform:scaleX(0.8838);">ج.م.</span>
<span style="left:710.00px;top:266.79px;font:700 8px/8px 'Liberation Mono','DejaVu Sans Mono',monospace;color:#2a2000;transform:scaleX(0.8746);">14,560</span>
<span style="left:740.50px;top:266.79px;font:700 8px/8px 'Liberation Mono','DejaVu Sans Mono',monospace;color:#2a2000;direction:rtl;transform:scaleX(0.8838);">ج.م.</span>
<span style="left:642.70px;top:266.79px;font:700 8px/8px 'Liberation Mono','DejaVu Sans Mono',monospace;color:#2a2000;transform:scaleX(0.8744);">1,456</span>
<span style="left:669.00px;top:266.79px;font:700 8px/8px 'Liberation Mono','DejaVu Sans Mono',monospace;color:#2a2000;direction:rtl;transform:scaleX(0.8838);">ج.م.</span>
<span style="left:572.00px;top:266.79px;font:700 8px/8px 'Liberation Mono','DejaVu Sans Mono',monospace;color:#2a2000;transform:scaleX(0.8746);">16,016</span>
<span style="left:602.50px;top:266.79px;font:700 8px/8px 'Liberation Mono','DejaVu Sans Mono',monospace;color:#2a2000;direction:rtl;transform:scaleX(0.8838);">ج.م.</span>
<span style="left:933.38px;top:277.43px;font:700 8px/8px 'Liberation Mono','DejaVu Sans Mono',monospace;color:#fff;direction:rtl;transform:scaleX(0.8750);">الطوب الأحمر</span>
<span style="left:883.60px;top:277.43px;font:700 8px/8px 'Liberation Mono','DejaVu Sans Mono',monospace;color:#2a2000;transform:scaleX(0.8749);">70.0</span>
<span style="left:836.20px;top:277.43px;font:700 8px/8px 'Liberation Mono','DejaVu Sans Mono',monospace;color:#2a2000;transform:scaleX(0.8749);">65.0</span>
<span style="left:772.70px;top:277.43px;font:700 8px/8px 'Liberation Mono','DejaVu Sans Mono',monospace;color:#2a2000;transform:scaleX(0.8744);">1,800</span>
<span style="left:799.00px;top:277.43px;font:700 8px/8px 'Liberation Mono','DejaVu Sans Mono',monospace;color:#2a2000;direction:rtl;transform:scaleX(0.8838);">ج.م.</span>
<span style="left:705.80px;top:277.43px;font:700 8px/8px 'Liberation Mono','DejaVu Sans Mono',monospace;color:#2a2000;transform:scaleX(0.8748);">117,000</span>
<span style="left:740.50px;top:277.43px;font:700 8px/8px 'Liberation Mono','DejaVu Sans Mono',monospace;color:#2a2000;direction:rtl;transform:scaleX(0.8838);">ج.م.</span>
<span style="left:638.50px;top:277.43px;font:700 8px/8px 'Liberation Mono','DejaVu Sans Mono',monospace;color:#2a2000;transform:scaleX(0.8746);">11,700</span>
<span style="left:669.00px;top:277.43px;font:700 8px/8px 'Liberation Mono','DejaVu Sans Mono',monospace;color:#2a2000;direction:rtl;transform:scaleX(0.8838);">ج.م.</span>
<span style="left:567.80px;top:277.43px;font:700 8px/8px 'Liberation Mono','DejaVu Sans Mono',monospace;color:#2a2000;transform:scaleX(0.8748);">128,700</span>
<span style="left:602.50px;top:277.43px;font:700 8px/8px 'Liberation Mono','DejaVu Sans Mono',monospace;color:#2a2000;direction:rtl;transform:scaleX(0.8838);">ج.م.</span>
<span style="left:918.63px;top:288.06px;font:700 8px/8px 'Liberation Mono','DejaVu Sans Mono',monospace;color:#fff;direction:rtl;transform:scaleX(0.8750);">الطوب الأبيض الجيرى</span>
<span style="left:883.60px;top:288.06px;font:700 8px/8px 'Liberation Mono','DejaVu Sans Mono',monospace;color:#2a2000;transform:scaleX(0.8749);">88.0</span>
<span style="left:836.20px;top:288.06px;font:700 8px/8px 'Liberation Mono','DejaVu Sans Mono',monospace;color:#2a2000;transform:scaleX(0.8749);">87.0</span>
<span style="left:772.70px;top:288.06px;font:700 8px/8px 'Liberation Mono','DejaVu Sans Mono',monospace;color:#2a2000;transform:scaleX(0.8744);">2,500</span>
<span style="left:799.00px;top:288.06px;font:700 8px/8px 'Liberation Mono','DejaVu Sans Mono',monospace;color:#2a2000;direction:rtl;transform:scaleX(0.8838);">ج.م.</span>
<span style="left:705.80px;top:288.06px;font:700 8px/8px 'Liberation Mono','DejaVu Sans Mono',monospace;color:#2a2000;transform:scaleX(0.8748);">217,500</span>
<span style="left:740.50px;top:288.06px;font:700 8px/8px 'Liberation Mono','DejaVu Sans Mono',monospace;color:#2a2000;direction:rtl;transform:scaleX(0.8838);">ج.م.</span>
<span style="left:638.50px;top:288.06px;font:700 8px/8px 'Liberation Mono','DejaVu Sans Mono',monospace;color:#2a2000;transform:scaleX(0.8746);">21,750</span>
<span style="left:669.00px;top:288.06px;font:700 8px/8px 'Liberation Mono','DejaVu Sans Mono',monospace;color:#2a2000;direction:rtl;transform:scaleX(0.8838);">ج.م.</span>
<span style="left:567.80px;top:288.06px;font:700 8px/8px 'Liberation Mono','DejaVu Sans Mono',monospace;color:#2a2000;transform:scaleX(0.8748);">239,250</span>
<span style="left:602.50px;top:288.06px;font:700 8px/8px 'Liberation Mono','DejaVu Sans Mono',monospace;color:#2a2000;direction:rtl;transform:scaleX(0.8838);">ج.م.</span>
<span style="left:933.38px;top:298.69px;font:700 8px/8px 'Liberation Mono','DejaVu Sans Mono',monospace;color:#fff;direction:rtl;transform:scaleX(0.8750);">اسمنت حلوان</span>
<span style="left:883.60px;top:298.69px;font:700 8px/8px 'Liberation Mono','DejaVu Sans Mono',monospace;color:#2a2000;transform:scaleX(0.8749);">28.0</span>
<span style="left:836.20px;top:298.69px;font:700 8px/8px 'Liberation Mono','DejaVu Sans Mono',monospace;color:#2a2000;transform:scaleX(0.8749);">28.0</span>
<span style="left:772.70px;top:298.69px;font:700 8px/8px 'Liberation Mono','DejaVu Sans Mono',monospace;color:#2a2000;transform:scaleX(0.8744);">4,300</span>
<span style="left:799.00px;top:298.69px;font:700 8px/8px 'Liberation Mono','DejaVu Sans Mono',monospace;color:#2a2000;direction:rtl;transform:scaleX(0.8838);">ج.م.</span>
<span style="left:705.80px;top:298.69px;font:700 8px/8px 'Liberation Mono','DejaVu Sans Mono',monospace;color:#2a2000;transform:scaleX(0.8748);">120,400</span>
<span style="left:740.50px;top:298.69px;font:700 8px/8px 'Liberation Mono','DejaVu Sans Mono',monospace;color:#2a2000;direction:rtl;transform:scaleX(0.8838);">ج.م.</span>
<span style="left:638.50px;top:298.69px;font:700 8px/8px 'Liberation Mono','DejaVu Sans Mono',monospace;color:#2a2000;transform:scaleX(0.8746);">12,040</span>
<span style="left:669.00px;top:298.69px;font:700 8px/8px 'Liberation Mono','DejaVu Sans Mono',monospace;color:#2a2000;direction:rtl;transform:scaleX(0.8838);">ج.م.</span>
<span style="left:567.80px;top:298.69px;font:700 8px/8px 'Liberation Mono','DejaVu Sans Mono',monospace;color:#2a2000;transform:scaleX(0.8748);">132,440</span>
<span style="left:602.50px;top:298.69px;font:700 8px/8px 'Liberation Mono','DejaVu Sans Mono',monospace;color:#2a2000;direction:rtl;transform:scaleX(0.8838);">ج.م.</span>
<span style="left:939.70px;top:309.31px;font:700 8px/8px 'Liberation Mono','DejaVu Sans Mono',monospace;color:#fff;direction:rtl;transform:scaleX(0.8750);">رمل ناعم</span>
<span style="left:883.60px;top:309.31px;font:700 8px/8px 'Liberation Mono','DejaVu Sans Mono',monospace;color:#2a2000;transform:scaleX(0.8749);">67.0</span>
<span style="left:836.20px;top:309.31px;font:700 8px/8px 'Liberation Mono','DejaVu Sans Mono',monospace;color:#2a2000;transform:scaleX(0.8749);">66.0</span>
<span style="left:781.10px;top:309.31px;font:700 8px/8px 'Liberation Mono','DejaVu Sans Mono',monospace;color:#2a2000;transform:scaleX(0.8746);">170</span>
<span style="left:799.00px;top:309.31px;font:700 8px/8px 'Liberation Mono','DejaVu Sans Mono',monospace;color:#2a2000;direction:rtl;transform:scaleX(0.8838);">ج.م.</span>
<span style="left:710.00px;top:309.31px;font:700 8px/8px 'Liberation Mono','DejaVu Sans Mono',monospace;color:#2a2000;transform:scaleX(0.8746);">11,220</span>
<span style="left:740.50px;top:309.31px;font:700 8px/8px 'Liberation Mono','DejaVu Sans Mono',monospace;color:#2a2000;direction:rtl;transform:scaleX(0.8838);">ج.م.</span>
<span style="left:642.70px;top:309.31px;font:700 8px/8px 'Liberation Mono','DejaVu Sans Mono',monospace;color:#2a2000;transform:scaleX(0.8744);">1,122</span>
<span style="left:669.00px;top:309.31px;font:700 8px/8px 'Liberation Mono','DejaVu Sans Mono',monospace;color:#2a2000;direction:rtl;transform:scaleX(0.8838);">ج.م.</span>
<span style="left:572.00px;top:309.31px;font:700 8px/8px 'Liberation Mono','DejaVu Sans Mono',monospace;color:#2a2000;transform:scaleX(0.8746);">12,342</span>
<span style="left:602.50px;top:309.31px;font:700 8px/8px 'Liberation Mono','DejaVu Sans Mono',monospace;color:#2a2000;direction:rtl;transform:scaleX(0.8838);">ج.م.</span>
<span style="left:941.80px;top:319.94px;font:700 8px/8px 'Liberation Mono','DejaVu Sans Mono',monospace;color:#fff;direction:rtl;transform:scaleX(0.8750);">رمل خشن</span>
<span style="left:883.60px;top:319.94px;font:700 8px/8px 'Liberation Mono','DejaVu Sans Mono',monospace;color:#2a2000;transform:scaleX(0.8749);">78.0</span>
<span style="left:836.20px;top:319.94px;font:700 8px/8px 'Liberation Mono','DejaVu Sans Mono',monospace;color:#2a2000;transform:scaleX(0.8749);">77.0</span>
<span style="left:781.10px;top:319.94px;font:700 8px/8px 'Liberation Mono','DejaVu Sans Mono',monospace;color:#2a2000;transform:scaleX(0.8746);">200</span>
<span style="left:799.00px;top:319.94px;font:700 8px/8px 'Liberation Mono','DejaVu Sans Mono',monospace;color:#2a2000;direction:rtl;transform:scaleX(0.8838);">ج.م.</span>
<span style="left:710.00px;top:319.94px;font:700 8px/8px 'Liberation Mono','DejaVu Sans Mono',monospace;color:#2a2000;transform:scaleX(0.8746);">15,400</span>
<span style="left:740.50px;top:319.94px;font:700 8px/8px 'Liberation Mono','DejaVu Sans Mono',monospace;color:#2a2000;direction:rtl;transform:scaleX(0.8838);">ج.م.</span>
<span style="left:642.70px;top:319.94px;font:700 8px/8px 'Liberation Mono','DejaVu Sans Mono',monospace;color:#2a2000;transform:scaleX(0.8744);">1,540</span>
<span style="left:669.00px;top:319.94px;font:700 8px/8px 'Liberation Mono','DejaVu Sans Mono',monospace;color:#2a2000;direction:rtl;transform:scaleX(0.8838);">ج.م.</span>
<span style="left:572.00px;top:319.94px;font:700 8px/8px 'Liberation Mono','DejaVu Sans Mono',monospace;color:#2a2000;transform:scaleX(0.8746);">16,940</span>
<span style="left:602.50px;top:319.94px;font:700 8px/8px 'Liberation Mono','DejaVu Sans Mono',monospace;color:#2a2000;direction:rtl;transform:scaleX(0.8838);">ج.م.</span>
<span style="left:941.80px;top:330.57px;font:700 8px/8px 'Liberation Mono','DejaVu Sans Mono',monospace;color:#fff;direction:rtl;transform:scaleX(0.8750);">حديد عز</span>
<span style="left:883.60px;top:330.57px;font:700 8px/8px 'Liberation Mono','DejaVu Sans Mono',monospace;color:#2a2000;transform:scaleX(0.8749);">45.0</span>
<span style="left:836.20px;top:330.57px;font:700 8px/8px 'Liberation Mono','DejaVu Sans Mono',monospace;color:#2a2000;transform:scaleX(0.8749);">44.0</span>
<span style="left:768.50px;top:330.57px;font:700 8px/8px 'Liberation Mono','DejaVu Sans Mono',monospace;color:#2a2000;transform:scaleX(0.8746);">38,300</span>
<span style="left:799.00px;top:330.57px;font:700 8px/8px 'Liberation Mono','DejaVu Sans Mono',monospace;color:#2a2000;direction:rtl;transform:scaleX(0.8838);">ج.م.</span>
<span style="left:697.40px;top:330.57px;font:700 8px/8px 'Liberation Mono','DejaVu Sans Mono',monospace;color:#2a2000;transform:scaleX(0.8746);">1,685,200</span>
<span style="left:740.50px;top:330.57px;font:700 8px/8px 'Liberation Mono','DejaVu Sans Mono',monospace;color:#2a2000;direction:rtl;transform:scaleX(0.8838);">ج.م.</span>
<span style="left:634.30px;top:330.57px;font:700 8px/8px 'Liberation Mono','DejaVu Sans Mono',monospace;color:#2a2000;transform:scaleX(0.8748);">168,520</span>
<span style="left:669.00px;top:330.57px;font:700 8px/8px 'Liberation Mono','DejaVu Sans Mono',monospace;color:#2a2000;direction:rtl;transform:scaleX(0.8838);">ج.م.</span>
<span style="left:559.40px;top:330.57px;font:700 8px/8px 'Liberation Mono','DejaVu Sans Mono',monospace;color:#2a2000;transform:scaleX(0.8746);">1,853,720</span>
<span style="left:602.50px;top:330.57px;font:700 8px/8px 'Liberation Mono','DejaVu Sans Mono',monospace;color:#2a2000;direction:rtl;transform:scaleX(0.8838);">ج.م.</span>
<span style="left:929.16px;top:341.20px;font:700 8px/8px 'Liberation Mono','DejaVu Sans Mono',monospace;color:#fff;direction:rtl;transform:scaleX(0.8750);">حديد المصريين</span>
<span style="left:883.60px;top:341.20px;font:700 8px/8px 'Liberation Mono','DejaVu Sans Mono',monospace;color:#2a2000;transform:scaleX(0.8749);">75.0</span>
<span style="left:836.20px;top:341.20px;font:700 8px/8px 'Liberation Mono','DejaVu Sans Mono',monospace;color:#2a2000;transform:scaleX(0.8749);">75.0</span>
<span style="left:768.50px;top:341.20px;font:700 8px/8px 'Liberation Mono','DejaVu Sans Mono',monospace;color:#2a2000;transform:scaleX(0.8746);">36,500</span>
<span style="left:799.00px;top:341.20px;font:700 8px/8px 'Liberation Mono','DejaVu Sans Mono',monospace;color:#2a2000;direction:rtl;transform:scaleX(0.8838);">ج.م.</span>
<span style="left:697.40px;top:341.20px;font:700 8px/8px 'Liberation Mono','DejaVu Sans Mono',monospace;color:#2a2000;transform:scaleX(0.8746);">2,737,500</span>
<span style="left:740.50px;top:341.20px;font:700 8px/8px 'Liberation Mono','DejaVu Sans Mono',monospace;color:#2a2000;direction:rtl;transform:scaleX(0.8838);">ج.م.</span>
<span style="left:634.30px;top:341.20px;font:700 8px/8px 'Liberation Mono','DejaVu Sans Mono',monospace;color:#2a2000;transform:scaleX(0.8748);">273,750</span>
<span style="left:669.00px;top:341.20px;font:700 8px/8px 'Liberation Mono','DejaVu Sans Mono',monospace;color:#2a2000;direction:rtl;transform:scaleX(0.8838);">ج.م.</span>
<span style="left:559.40px;top:341.20px;font:700 8px/8px 'Liberation Mono','DejaVu Sans Mono',monospace;color:#2a2000;transform:scaleX(0.8746);">3,011,250</span>
<span style="left:602.50px;top:341.20px;font:700 8px/8px 'Liberation Mono','DejaVu Sans Mono',monospace;color:#2a2000;direction:rtl;transform:scaleX(0.8838);">ج.م.</span>
<span style="left:933.38px;top:351.84px;font:700 8px/8px 'Liberation Mono','DejaVu Sans Mono',monospace;color:#fff;direction:rtl;transform:scaleX(0.8750);">حديد السويس</span>
<span style="left:883.60px;top:351.84px;font:700 8px/8px 'Liberation Mono','DejaVu Sans Mono',monospace;color:#2a2000;transform:scaleX(0.8749);">46.0</span>
<span style="left:836.20px;top:351.84px;font:700 8px/8px 'Liberation Mono','DejaVu Sans Mono',monospace;color:#2a2000;transform:scaleX(0.8749);">46.0</span>
<span style="left:768.50px;top:351.84px;font:700 8px/8px 'Liberation Mono','DejaVu Sans Mono',monospace;color:#2a2000;transform:scaleX(0.8746);">36,500</span>
<span style="left:799.00px;top:351.84px;font:700 8px/8px 'Liberation Mono','DejaVu Sans Mono',monospace;color:#2a2000;direction:rtl;transform:scaleX(0.8838);">ج.م.</span>
<span style="left:697.40px;top:351.84px;font:700 8px/8px 'Liberation Mono','DejaVu Sans Mono',monospace;color:#2a2000;transform:scaleX(0.8746);">1,679,000</span>
<span style="left:740.50px;top:351.84px;font:700 8px/8px 'Liberation Mono','DejaVu Sans Mono',monospace;color:#2a2000;direction:rtl;transform:scaleX(0.8838);">ج.م.</span>
<span style="left:634.30px;top:351.84px;font:700 8px/8px 'Liberation Mono','DejaVu Sans Mono',monospace;color:#2a2000;transform:scaleX(0.8748);">167,900</span>
<span style="left:669.00px;top:351.84px;font:700 8px/8px 'Liberation Mono','DejaVu Sans Mono',monospace;color:#2a2000;direction:rtl;transform:scaleX(0.8838);">ج.م.</span>
<span style="left:559.40px;top:351.84px;font:700 8px/8px 'Liberation Mono','DejaVu Sans Mono',monospace;color:#2a2000;transform:scaleX(0.8746);">1,846,900</span>
<span style="left:602.50px;top:351.84px;font:700 8px/8px 'Liberation Mono','DejaVu Sans Mono',monospace;color:#2a2000;direction:rtl;transform:scaleX(0.8838);">ج.م.</span>
<span style="left:929.16px;top:362.47px;font:700 8px/8px 'Liberation Mono','DejaVu Sans Mono',monospace;color:#fff;direction:rtl;transform:scaleX(0.8750);">حديد المراكبى</span>
<span style="left:883.60px;top:362.47px;font:700 8px/8px 'Liberation Mono','DejaVu Sans Mono',monospace;color:#2a2000;transform:scaleX(0.8749);">34.0</span>
<span style="left:836.20px;top:362.47px;font:700 8px/8px 'Liberation Mono','DejaVu Sans Mono',monospace;color:#2a2000;transform:scaleX(0.8749);">33.0</span>
<span style="left:768.50px;top:362.47px;font:700 8px/8px 'Liberation Mono','DejaVu Sans Mono',monospace;color:#2a2000;transform:scaleX(0.8746);">37,500</span>
<span style="left:799.00px;top:362.47px;font:700 8px/8px 'Liberation Mono','DejaVu Sans Mono',monospace;color:#2a2000;direction:rtl;transform:scaleX(0.8838);">ج.م.</span>
<span style="left:697.40px;top:362.47px;font:700 8px/8px 'Liberation Mono','DejaVu Sans Mono',monospace;color:#2a2000;transform:scaleX(0.8746);">1,237,500</span>
<span style="left:740.50px;top:362.47px;font:700 8px/8px 'Liberation Mono','DejaVu Sans Mono',monospace;color:#2a2000;direction:rtl;transform:scaleX(0.8838);">ج.م.</span>
<span style="left:634.30px;top:362.47px;font:700 8px/8px 'Liberation Mono','DejaVu Sans Mono',monospace;color:#2a2000;transform:scaleX(0.8748);">123,750</span>
<span style="left:669.00px;top:362.47px;font:700 8px/8px 'Liberation Mono','DejaVu Sans Mono',monospace;color:#2a2000;direction:rtl;transform:scaleX(0.8838);">ج.م.</span>
<span style="left:559.40px;top:362.47px;font:700 8px/8px 'Liberation Mono','DejaVu Sans Mono',monospace;color:#2a2000;transform:scaleX(0.8746);">1,361,250</span>
<span style="left:602.50px;top:362.47px;font:700 8px/8px 'Liberation Mono','DejaVu Sans Mono',monospace;color:#2a2000;direction:rtl;transform:scaleX(0.8838);">ج.م.</span>
<span style="left:929.17px;top:373.10px;font:700 8px/8px 'Liberation Mono','DejaVu Sans Mono',monospace;color:#fff;direction:rtl;transform:scaleX(0.8750);">طوب طفلي عادى</span>
<span style="left:883.60px;top:373.10px;font:700 8px/8px 'Liberation Mono','DejaVu Sans Mono',monospace;color:#2a2000;transform:scaleX(0.8749);">20.0</span>
<span style="left:836.20px;top:373.10px;font:700 8px/8px 'Liberation Mono','DejaVu Sans Mono',monospace;color:#2a2000;transform:scaleX(0.8749);">15.0</span>
<span style="left:772.70px;top:373.10px;font:700 8px/8px 'Liberation Mono','DejaVu Sans Mono',monospace;color:#2a2000;transform:scaleX(0.8744);">1,500</span>
<span style="left:799.00px;top:373.10px;font:700 8px/8px 'Liberation Mono','DejaVu Sans Mono',monospace;color:#2a2000;direction:rtl;transform:scaleX(0.8838);">ج.م.</span>
<span style="left:710.00px;top:373.10px;font:700 8px/8px 'Liberation Mono','DejaVu Sans Mono',monospace;color:#2a2000;transform:scaleX(0.8746);">22,500</span>
<span style="left:740.50px;top:373.10px;font:700 8px/8px 'Liberation Mono','DejaVu Sans Mono',monospace;color:#2a2000;direction:rtl;transform:scaleX(0.8838);">ج.م.</span>
<span style="left:642.70px;top:373.10px;font:700 8px/8px 'Liberation Mono','DejaVu Sans Mono',monospace;color:#2a2000;transform:scaleX(0.8744);">2,250</span>
<span style="left:669.00px;top:373.10px;font:700 8px/8px 'Liberation Mono','DejaVu Sans Mono',monospace;color:#2a2000;direction:rtl;transform:scaleX(0.8838);">ج.م.</span>
<span style="left:572.00px;top:373.10px;font:700 8px/8px 'Liberation Mono','DejaVu Sans Mono',monospace;color:#2a2000;transform:scaleX(0.8746);">24,750</span>
<span style="left:602.50px;top:373.10px;font:700 8px/8px 'Liberation Mono','DejaVu Sans Mono',monospace;color:#2a2000;direction:rtl;transform:scaleX(0.8838);">ج.م.</span>
<span style="left:939.70px;top:383.73px;font:700 8px/8px 'Liberation Mono','DejaVu Sans Mono',monospace;color:#fff;direction:rtl;transform:scaleX(0.8750);">طوب مصمت</span>
<span style="left:883.60px;top:383.73px;font:700 8px/8px 'Liberation Mono','DejaVu Sans Mono',monospace;color:#2a2000;transform:scaleX(0.8749);">35.0</span>
<span style="left:836.20px;top:383.73px;font:700 8px/8px 'Liberation Mono','DejaVu Sans Mono',monospace;color:#2a2000;transform:scaleX(0.8749);">34.0</span>
<span style="left:772.70px;top:383.73px;font:700 8px/8px 'Liberation Mono','DejaVu Sans Mono',monospace;color:#2a2000;transform:scaleX(0.8744);">1,800</span>
<span style="left:799.00px;top:383.73px;font:700 8px/8px 'Liberation Mono','DejaVu Sans Mono',monospace;color:#2a2000;direction:rtl;transform:scaleX(0.8838);">ج.م.</span>
<span style="left:710.00px;top:383.73px;font:700 8px/8px 'Liberation Mono','DejaVu Sans Mono',monospace;color:#2a2000;transform:scaleX(0.8746);">61,200</span>
<span style="left:740.50px;top:383.73px;font:700 8px/8px 'Liberation Mono','DejaVu Sans Mono',monospace;color:#2a2000;direction:rtl;transform:scaleX(0.8838);">ج.م.</span>
<span style="left:642.70px;top:383.73px;font:700 8px/8px 'Liberation Mono','DejaVu Sans Mono',monospace;color:#2a2000;transform:scaleX(0.8744);">6,120</span>
<span style="left:669.00px;top:383.73px;font:700 8px/8px 'Liberation Mono','DejaVu Sans Mono',monospace;color:#2a2000;direction:rtl;transform:scaleX(0.8838);">ج.م.</span>
<span style="left:572.00px;top:383.73px;font:700 8px/8px 'Liberation Mono','DejaVu Sans Mono',monospace;color:#2a2000;transform:scaleX(0.8746);">67,320</span>
<span style="left:602.50px;top:383.73px;font:700 8px/8px 'Liberation Mono','DejaVu Sans Mono',monospace;color:#2a2000;direction:rtl;transform:scaleX(0.8838);">ج.م.</span>
<span style="left:939.70px;top:394.36px;font:700 8px/8px 'Liberation Mono','DejaVu Sans Mono',monospace;color:#fff;direction:rtl;transform:scaleX(0.8750);">طوب مفرغ</span>
<span style="left:883.60px;top:394.36px;font:700 8px/8px 'Liberation Mono','DejaVu Sans Mono',monospace;color:#2a2000;transform:scaleX(0.8749);">70.0</span>
<span style="left:836.20px;top:394.36px;font:700 8px/8px 'Liberation Mono','DejaVu Sans Mono',monospace;color:#2a2000;transform:scaleX(0.8749);">33.0</span>
<span style="left:772.70px;top:394.36px;font:700 8px/8px 'Liberation Mono','DejaVu Sans Mono',monospace;color:#2a2000;transform:scaleX(0.8744);">1,700</span>
<span style="left:799.00px;top:394.36px;font:700 8px/8px 'Liberation Mono','DejaVu Sans Mono',monospace;color:#2a2000;direction:rtl;transform:scaleX(0.8838);">ج.م.</span>
<span style="left:710.00px;top:394.36px;font:700 8px/8px 'Liberation Mono','DejaVu Sans Mono',monospace;color:#2a2000;transform:scaleX(0.8746);">56,100</span>
<span style="left:740.50px;top:394.36px;font:700 8px/8px 'Liberation Mono','DejaVu Sans Mono',monospace;color:#2a2000;direction:rtl;transform:scaleX(0.8838);">ج.م.</span>
<span style="left:642.70px;top:394.36px;font:700 8px/8px 'Liberation Mono','DejaVu Sans Mono',monospace;color:#2a2000;transform:scaleX(0.8744);">5,610</span>
<span style="left:669.00px;top:394.36px;font:700 8px/8px 'Liberation Mono','DejaVu Sans Mono',monospace;color:#2a2000;direction:rtl;transform:scaleX(0.8838);">ج.م.</span>
<span style="left:572.00px;top:394.36px;font:700 8px/8px 'Liberation Mono','DejaVu Sans Mono',monospace;color:#2a2000;transform:scaleX(0.8746);">61,710</span>
<span style="left:602.50px;top:394.36px;font:700 8px/8px 'Liberation Mono','DejaVu Sans Mono',monospace;color:#2a2000;direction:rtl;transform:scaleX(0.8838);">ج.م.</span>
<span style="left:939.70px;top:404.99px;font:700 8px/8px 'Liberation Mono','DejaVu Sans Mono',monospace;color:#fff;direction:rtl;transform:scaleX(0.8750);">طوب عادى</span>
<span style="left:883.60px;top:404.99px;font:700 8px/8px 'Liberation Mono','DejaVu Sans Mono',monospace;color:#2a2000;transform:scaleX(0.8749);">50.0</span>
<span style="left:836.20px;top:404.99px;font:700 8px/8px 'Liberation Mono','DejaVu Sans Mono',monospace;color:#2a2000;transform:scaleX(0.8749);">45.0</span>
<span style="left:772.70px;top:404.99px;font:700 8px/8px 'Liberation Mono','DejaVu Sans Mono',monospace;color:#2a2000;transform:scaleX(0.8744);">3,000</span>
<span style="left:799.00px;top:404.99px;font:700 8px/8px 'Liberation Mono','DejaVu Sans Mono',monospace;color:#2a2000;direction:rtl;transform:scaleX(0.8838);">ج.م.</span>
<span style="left:705.80px;top:404.99px;font:700 8px/8px 'Liberation Mono','DejaVu Sans Mono',monospace;color:#2a2000;transform:scaleX(0.8748);">135,000</span>
<span style="left:740.50px;top:404.99px;font:700 8px/8px 'Liberation Mono','DejaVu Sans Mono',monospace;color:#2a2000;direction:rtl;transform:scaleX(0.8838);">ج.م.</span>
<span style="left:638.50px;top:404.99px;font:700 8px/8px 'Liberation Mono','DejaVu Sans Mono',monospace;color:#2a2000;transform:scaleX(0.8746);">13,500</span>
<span style="left:669.00px;top:404.99px;font:700 8px/8px 'Liberation Mono','DejaVu Sans Mono',monospace;color:#2a2000;direction:rtl;transform:scaleX(0.8838);">ج.م.</span>
<span style="left:567.80px;top:404.99px;font:700 8px/8px 'Liberation Mono','DejaVu Sans Mono',monospace;color:#2a2000;transform:scaleX(0.8748);">148,500</span>
<span style="left:602.50px;top:404.99px;font:700 8px/8px 'Liberation Mono','DejaVu Sans Mono',monospace;color:#2a2000;direction:rtl;transform:scaleX(0.8838);">ج.م.</span>
<span style="left:924.95px;top:415.62px;font:700 8px/8px 'Liberation Mono','DejaVu Sans Mono',monospace;color:#fff;direction:rtl;transform:scaleX(0.8750);">طوب عالي الجودة</span>
<span style="left:883.60px;top:415.62px;font:700 8px/8px 'Liberation Mono','DejaVu Sans Mono',monospace;color:#2a2000;transform:scaleX(0.8749);">48.0</span>
<span style="left:836.20px;top:415.62px;font:700 8px/8px 'Liberation Mono','DejaVu Sans Mono',monospace;color:#2a2000;transform:scaleX(0.8749);">44.0</span>
<span style="left:772.70px;top:415.62px;font:700 8px/8px 'Liberation Mono','DejaVu Sans Mono',monospace;color:#2a2000;transform:scaleX(0.8744);">3,500</span>
<span style="left:799.00px;top:415.62px;font:700 8px/8px 'Liberation Mono','DejaVu Sans Mono',monospace;color:#2a2000;direction:rtl;transform:scaleX(0.8838);">ج.م.</span>
<span style="left:705.80px;top:415.62px;font:700 8px/8px 'Liberation Mono','DejaVu Sans Mono',monospace;color:#2a2000;transform:scaleX(0.8748);">154,000</span>
<span style="left:740.50px;top:415.62px;font:700 8px/8px 'Liberation Mono','DejaVu Sans Mono',monospace;color:#2a2000;direction:rtl;transform:scaleX(0.8838);">ج.م.</span>
<span style="left:638.50px;top:415.62px;font:700 8px/8px 'Liberation Mono','DejaVu Sans Mono',monospace;color:#2a2000;transform:scaleX(0.8746);">15,400</span>
<span style="left:669.00px;top:415.62px;font:700 8px/8px 'Liberation Mono','DejaVu Sans Mono',monospace;color:#2a2000;direction:rtl;transform:scaleX(0.8838);">ج.م.</span>
<span style="left:567.80px;top:415.62px;font:700 8px/8px 'Liberation Mono','DejaVu Sans Mono',monospace;color:#2a2000;transform:scaleX(0.8748);">169,400</span>
<span style="left:602.50px;top:415.62px;font:700 8px/8px 'Liberation Mono','DejaVu Sans Mono',monospace;color:#2a2000;direction:rtl;transform:scaleX(0.8838);">ج.م.</span>
<span style="left:939.70px;top:426.25px;font:700 8px/8px 'Liberation Mono','DejaVu Sans Mono',monospace;color:#fff;direction:rtl;transform:scaleX(0.8750);">رمل ابيض</span>
<span style="left:883.60px;top:426.25px;font:700 8px/8px 'Liberation Mono','DejaVu Sans Mono',monospace;color:#2a2000;transform:scaleX(0.8749);">80.0</span>
<span style="left:836.20px;top:426.25px;font:700 8px/8px 'Liberation Mono','DejaVu Sans Mono',monospace;color:#2a2000;transform:scaleX(0.8749);">77.0</span>
<span style="left:781.10px;top:426.25px;font:700 8px/8px 'Liberation Mono','DejaVu Sans Mono',monospace;color:#2a2000;transform:scaleX(0.8746);">220</span>
<span style="left:799.00px;top:426.25px;font:700 8px/8px 'Liberation Mono','DejaVu Sans Mono',monospace;color:#2a2000;direction:rtl;transform:scaleX(0.8838);">ج.م.</span>
<span style="left:710.00px;top:426.25px;font:700 8px/8px 'Liberation Mono','DejaVu Sans Mono',monospace;color:#2a2000;transform:scaleX(0.8746);">16,940</span>
<span style="left:740.50px;top:426.25px;font:700 8px/8px 'Liberation Mono','DejaVu Sans Mono',monospace;color:#2a2000;direction:rtl;transform:scaleX(0.8838);">ج.م.</span>
<span style="left:642.70px;top:426.25px;font:700 8px/8px 'Liberation Mono','DejaVu Sans Mono',monospace;color:#2a2000;transform:scaleX(0.8744);">1,694</span>
<span style="left:669.00px;top:426.25px;font:700 8px/8px 'Liberation Mono','DejaVu Sans Mono',monospace;color:#2a2000;direction:rtl;transform:scaleX(0.8838);">ج.م.</span>
<span style="left:572.00px;top:426.25px;font:700 8px/8px 'Liberation Mono','DejaVu Sans Mono',monospace;color:#2a2000;transform:scaleX(0.8746);">18,634</span>
<span style="left:602.50px;top:426.25px;font:700 8px/8px 'Liberation Mono','DejaVu Sans Mono',monospace;color:#2a2000;direction:rtl;transform:scaleX(0.8838);">ج.م.</span>
<span style="left:939.70px;top:436.88px;font:700 8px/8px 'Liberation Mono','DejaVu Sans Mono',monospace;color:#fff;direction:rtl;transform:scaleX(0.8750);">رمل زيرو</span>
<span style="left:883.60px;top:436.88px;font:700 8px/8px 'Liberation Mono','DejaVu Sans Mono',monospace;color:#2a2000;transform:scaleX(0.8749);">35.0</span>
<span style="left:836.20px;top:436.88px;font:700 8px/8px 'Liberation Mono','DejaVu Sans Mono',monospace;color:#2a2000;transform:scaleX(0.8749);">33.0</span>
<span style="left:781.10px;top:436.88px;font:700 8px/8px 'Liberation Mono','DejaVu Sans Mono',monospace;color:#2a2000;transform:scaleX(0.8746);">130</span>
<span style="left:799.00px;top:436.88px;font:700 8px/8px 'Liberation Mono','DejaVu Sans Mono',monospace;color:#2a2000;direction:rtl;transform:scaleX(0.8838);">ج.م.</span>
<span style="left:714.20px;top:436.88px;font:700 8px/8px 'Liberation Mono','DejaVu Sans Mono',monospace;color:#2a2000;transform:scaleX(0.8744);">4,290</span>
<span style="left:740.50px;top:436.88px;font:700 8px/8px 'Liberation Mono','DejaVu Sans Mono',monospace;color:#2a2000;direction:rtl;transform:scaleX(0.8838);">ج.م.</span>
<span style="left:651.10px;top:436.88px;font:700 8px/8px 'Liberation Mono','DejaVu Sans Mono',monospace;color:#2a2000;transform:scaleX(0.8746);">429</span>
<span style="left:669.00px;top:436.88px;font:700 8px/8px 'Liberation Mono','DejaVu Sans Mono',monospace;color:#2a2000;direction:rtl;transform:scaleX(0.8838);">ج.م.</span>
<span style="left:576.20px;top:436.88px;font:700 8px/8px 'Liberation Mono','DejaVu Sans Mono',monospace;color:#2a2000;transform:scaleX(0.8744);">4,719</span>
<span style="left:602.50px;top:436.88px;font:700 8px/8px 'Liberation Mono','DejaVu Sans Mono',monospace;color:#2a2000;direction:rtl;transform:scaleX(0.8838);">ج.م.</span>
<span style="left:937.59px;top:447.50px;font:700 8px/8px 'Liberation Mono','DejaVu Sans Mono',monospace;color:#fff;direction:rtl;transform:scaleX(0.8750);">رمل مغسول</span>
<span style="left:883.60px;top:447.50px;font:700 8px/8px 'Liberation Mono','DejaVu Sans Mono',monospace;color:#2a2000;transform:scaleX(0.8749);">47.0</span>
<span style="left:836.20px;top:447.50px;font:700 8px/8px 'Liberation Mono','DejaVu Sans Mono',monospace;color:#2a2000;transform:scaleX(0.8749);">35.0</span>
<span style="left:781.10px;top:447.50px;font:700 8px/8px 'Liberation Mono','DejaVu Sans Mono',monospace;color:#2a2000;transform:scaleX(0.8746);">210</span>
<span style="left:799.00px;top:447.50px;font:700 8px/8px 'Liberation Mono','DejaVu Sans Mono',monospace;color:#2a2000;direction:rtl;transform:scaleX(0.8838);">ج.م.</span>
<span style="left:714.20px;top:447.50px;font:700 8px/8px 'Liberation Mono','DejaVu Sans Mono',monospace;color:#2a2000;transform:scaleX(0.8744);">7,350</span>
<span style="left:740.50px;top:447.50px;font:700 8px/8px 'Liberation Mono','DejaVu Sans Mono',monospace;color:#2a2000;direction:rtl;transform:scaleX(0.8838);">ج.م.</span>
<span style="left:651.10px;top:447.50px;font:700 8px/8px 'Liberation Mono','DejaVu Sans Mono',monospace;color:#2a2000;transform:scaleX(0.8746);">735</span>
<span style="left:669.00px;top:447.50px;font:700 8px/8px 'Liberation Mono','DejaVu Sans Mono',monospace;color:#2a2000;direction:rtl;transform:scaleX(0.8838);">ج.م.</span>
<span style="left:576.20px;top:447.50px;font:700 8px/8px 'Liberation Mono','DejaVu Sans Mono',monospace;color:#2a2000;transform:scaleX(0.8744);">8,085</span>
<span style="left:602.50px;top:447.50px;font:700 8px/8px 'Liberation Mono','DejaVu Sans Mono',monospace;color:#2a2000;direction:rtl;transform:scaleX(0.8838);">ج.م.</span>
<span style="left:922.85px;top:458.13px;font:700 8px/8px 'Liberation Mono','DejaVu Sans Mono',monospace;color:#fff;direction:rtl;transform:scaleX(0.8750);">زلط مخصوص خرسانة</span>
<span style="left:881.50px;top:458.13px;font:700 8px/8px 'Liberation Mono','DejaVu Sans Mono',monospace;color:#2a2000;transform:scaleX(0.8744);">100.0</span>
<span style="left:836.20px;top:458.13px;font:700 8px/8px 'Liberation Mono','DejaVu Sans Mono',monospace;color:#2a2000;transform:scaleX(0.8749);">89.0</span>
<span style="left:781.10px;top:458.13px;font:700 8px/8px 'Liberation Mono','DejaVu Sans Mono',monospace;color:#2a2000;transform:scaleX(0.8746);">320</span>
<span style="left:799.00px;top:458.13px;font:700 8px/8px 'Liberation Mono','DejaVu Sans Mono',monospace;color:#2a2000;direction:rtl;transform:scaleX(0.8838);">ج.م.</span>
<span style="left:710.00px;top:458.13px;font:700 8px/8px 'Liberation Mono','DejaVu Sans Mono',monospace;color:#2a2000;transform:scaleX(0.8746);">28,480</span>
<span style="left:740.50px;top:458.13px;font:700 8px/8px 'Liberation Mono','DejaVu Sans Mono',monospace;color:#2a2000;direction:rtl;transform:scaleX(0.8838);">ج.م.</span>
<span style="left:642.70px;top:458.13px;font:700 8px/8px 'Liberation Mono','DejaVu Sans Mono',monospace;color:#2a2000;transform:scaleX(0.8744);">2,848</span>
<span style="left:669.00px;top:458.13px;font:700 8px/8px 'Liberation Mono','DejaVu Sans Mono',monospace;color:#2a2000;direction:rtl;transform:scaleX(0.8838);">ج.م.</span>
<span style="left:572.00px;top:458.13px;font:700 8px/8px 'Liberation Mono','DejaVu Sans Mono',monospace;color:#2a2000;transform:scaleX(0.8746);">31,328</span>
<span style="left:602.50px;top:458.13px;font:700 8px/8px 'Liberation Mono','DejaVu Sans Mono',monospace;color:#2a2000;direction:rtl;transform:scaleX(0.8838);">ج.م.</span>
<span style="left:941.80px;top:468.76px;font:700 8px/8px 'Liberation Mono','DejaVu Sans Mono',monospace;color:#fff;direction:rtl;transform:scaleX(0.8750);">زلط دبش</span>
<span style="left:883.60px;top:468.76px;font:700 8px/8px 'Liberation Mono','DejaVu Sans Mono',monospace;color:#2a2000;transform:scaleX(0.8749);">55.0</span>
<span style="left:836.20px;top:468.76px;font:700 8px/8px 'Liberation Mono','DejaVu Sans Mono',monospace;color:#2a2000;transform:scaleX(0.8749);">49.0</span>
<span style="left:781.10px;top:468.76px;font:700 8px/8px 'Liberation Mono','DejaVu Sans Mono',monospace;color:#2a2000;transform:scaleX(0.8746);">230</span>
<span style="left:799.00px;top:468.76px;font:700 8px/8px 'Liberation Mono','DejaVu Sans Mono',monospace;color:#2a2000;direction:rtl;transform:scaleX(0.8838);">ج.م.</span>
<span style="left:710.00px;top:468.76px;font:700 8px/8px 'Liberation Mono','DejaVu Sans Mono',monospace;color:#2a2000;transform:scaleX(0.8746);">11,270</span>
<span style="left:740.50px;top:468.76px;font:700 8px/8px 'Liberation Mono','DejaVu Sans Mono',monospace;color:#2a2000;direction:rtl;transform:scaleX(0.8838);">ج.م.</span>
<span style="left:642.70px;top:468.76px;font:700 8px/8px 'Liberation Mono','DejaVu Sans Mono',monospace;color:#2a2000;transform:scaleX(0.8744);">1,127</span>
<span style="left:669.00px;top:468.76px;font:700 8px/8px 'Liberation Mono','DejaVu Sans Mono',monospace;color:#2a2000;direction:rtl;transform:scaleX(0.8838);">ج.م.</span>
<span style="left:572.00px;top:468.76px;font:700 8px/8px 'Liberation Mono','DejaVu Sans Mono',monospace;color:#2a2000;transform:scaleX(0.8746);">12,397</span>
<span style="left:602.50px;top:468.76px;font:700 8px/8px 'Liberation Mono','DejaVu Sans Mono',monospace;color:#2a2000;direction:rtl;transform:scaleX(0.8838);">ج.م.</span>
<span style="left:922.86px;top:479.39px;font:700 8px/8px 'Liberation Mono','DejaVu Sans Mono',monospace;color:#fff;direction:rtl;transform:scaleX(0.8750);">اسمنت مصر بن سيف</span>
<span style="left:883.60px;top:479.39px;font:700 8px/8px 'Liberation Mono','DejaVu Sans Mono',monospace;color:#2a2000;transform:scaleX(0.8749);">33.0</span>
<span style="left:836.20px;top:479.39px;font:700 8px/8px 'Liberation Mono','DejaVu Sans Mono',monospace;color:#2a2000;transform:scaleX(0.8749);">44.0</span>
<span style="left:772.70px;top:479.39px;font:700 8px/8px 'Liberation Mono','DejaVu Sans Mono',monospace;color:#2a2000;transform:scaleX(0.8744);">4,200</span>
<span style="left:799.00px;top:479.39px;font:700 8px/8px 'Liberation Mono','DejaVu Sans Mono',monospace;color:#2a2000;direction:rtl;transform:scaleX(0.8838);">ج.م.</span>
<span style="left:705.80px;top:479.39px;font:700 8px/8px 'Liberation Mono','DejaVu Sans Mono',monospace;color:#2a2000;transform:scaleX(0.8748);">184,800</span>
<span style="left:740.50px;top:479.39px;font:700 8px/8px 'Liberation Mono','DejaVu Sans Mono',monospace;color:#2a2000;direction:rtl;transform:scaleX(0.8838);">ج.م.</span>
<span style="left:638.50px;top:479.39px;font:700 8px/8px 'Liberation Mono','DejaVu Sans Mono',monospace;color:#2a2000;transform:scaleX(0.8746);">18,480</span>
<span style="left:669.00px;top:479.39px;font:700 8px/8px 'Liberation Mono','DejaVu Sans Mono',monospace;color:#2a2000;direction:rtl;transform:scaleX(0.8838);">ج.م.</span>
<span style="left:567.80px;top:479.39px;font:700 8px/8px 'Liberation Mono','DejaVu Sans Mono',monospace;color:#2a2000;transform:scaleX(0.8748);">203,280</span>
<span style="left:602.50px;top:479.39px;font:700 8px/8px 'Liberation Mono','DejaVu Sans Mono',monospace;color:#2a2000;direction:rtl;transform:scaleX(0.8838);">ج.م.</span>
<div style="left:15.80px;top:208.30px;width:21.70px;height:126.00px;background:#fff;border:1px solid #dadada;border-left:none;"></div>
<div style="left:15.80px;top:212.20px;width:16.20px;height:7.30px;background:linear-gradient(#e2e2e2,#c2c2c2);border-radius:1px;"></div>
<span style="left:18.30px;top:213.55px;font:400 5px/5px 'Liberation Sans','DejaVu Sans',sans-serif;color:#333;letter-spacing:-.2px;">...</span>
<div style="left:17.00px;top:249.40px;width:16.00px;height:7.30px;background:linear-gradient(#e2e2e2,#c2c2c2);"></div>
<span style="left:21.30px;top:250.70px;font:700 5px/5px 'Liberation Sans','DejaVu Sans',sans-serif;color:#333;direction:rtl;transform:scaleX(0.7808);">المادة</span>
<span style="left:27.77px;top:260.30px;font:400 5px/5px 'Liberation Sans','DejaVu Sans',sans-serif;color:#444;direction:rtl;">ح</span>
<span style="left:13.62px;top:271.00px;font:400 5px/5px 'Liberation Sans','DejaVu Sans',sans-serif;color:#444;direction:rtl;">حديد الم</span>
<span style="left:18.48px;top:281.70px;font:400 5px/5px 'Liberation Sans','DejaVu Sans',sans-serif;color:#444;direction:rtl;">حديد ا</span>
<span style="left:14.84px;top:292.40px;font:400 5px/5px 'Liberation Sans','DejaVu Sans',sans-serif;color:#444;direction:rtl;">حديد ال</span>
<span style="left:25.28px;top:303.10px;font:400 5px/5px 'Liberation Sans','DejaVu Sans',sans-serif;color:#444;direction:rtl;">حد</span>
<div style="left:44.40px;top:210.00px;width:189.80px;height:124.70px;background:#fff;border:1px solid #dadada;"></div>
<div style="left:50.00px;top:213.30px;width:23.00px;height:7.70px;background:linear-gradient(#e2e2e2,#c2c2c2);border-radius:1px;"></div>
<span style="left:52.50px;top:214.85px;font:400 5px/5px 'Liberation Sans','DejaVu Sans',sans-serif;color:#333;letter-spacing:-.2px;">Sum...</span>
<div style="left:74.50px;top:213.30px;width:23.50px;height:7.70px;background:linear-gradient(#e2e2e2,#c2c2c2);border-radius:1px;"></div>
<span style="left:77.00px;top:214.85px;font:400 5px/5px 'Liberation Sans','DejaVu Sans',sans-serif;color:#333;letter-spacing:-.2px;">Sum of ...</span>
<div style="left:73.50px;top:213.00px;width:1.00px;height:8.30px;background:#555;"></div>
<div style="left:100.00px;top:213.30px;width:27.00px;height:7.70px;background:linear-gradient(#e2e2e2,#c2c2c2);border-radius:1px;"></div>
<span style="left:102.50px;top:214.85px;font:400 5px/5px 'Liberation Sans','DejaVu Sans',sans-serif;color:#333;letter-spacing:-.2px;">Sum of ...</span>
<div style="left:128.50px;top:213.30px;width:38.50px;height:7.70px;background:linear-gradient(#e2e2e2,#c2c2c2);border-radius:1px;"></div>
<span style="left:131.00px;top:214.85px;font:400 5px/5px 'Liberation Sans','DejaVu Sans',sans-serif;color:#333;letter-spacing:-.2px;">Sum of سعر ...</span>
<div style="left:168.50px;top:213.30px;width:24.50px;height:7.70px;background:linear-gradient(#e2e2e2,#c2c2c2);border-radius:1px;"></div>
<span style="left:171.00px;top:214.85px;font:400 5px/5px 'Liberation Sans','DejaVu Sans',sans-serif;color:#333;letter-spacing:-.2px;">Sum of ...</span>
<div style="left:167.50px;top:213.00px;width:1.00px;height:8.30px;background:#555;"></div>
<div style="left:194.50px;top:213.30px;width:33.50px;height:7.70px;background:linear-gradient(#e2e2e2,#c2c2c2);border-radius:1px;"></div>
<span style="left:197.00px;top:214.85px;font:400 5px/5px 'Liberation Sans','DejaVu Sans',sans-serif;color:#333;letter-spacing:-.2px;">Sum of ...</span>
<div style="left:193.50px;top:213.00px;width:1.00px;height:8.30px;background:#555;"></div>
<span style="left:116.75px;top:228.00px;font:700 8px/8px 'Liberation Sans','DejaVu Sans',sans-serif;color:#404040;transform:scaleX(0.8939);">SUM OF وارد</span>
<svg style="left:70.30px;top:244.70px;" width="73.4" height="73.4" viewBox="0 0 73.4 73.4"><path d="M36.70 36.70 L36.70 2.00 A34.70 34.70 0 0 1 70.71 29.82z" fill="#156082" stroke="none" stroke-width="0" stroke-linejoin="round"/><path d="M36.70 36.70 L36.70 2.00 A34.70 34.70 0 0 1 70.71 29.82z" fill="none" stroke="rgba(0,0,0,.2)" stroke-width=".9" stroke-linejoin="round"/><path d="M36.70 36.70 L70.71 29.82 A34.70 34.70 0 0 1 42.71 70.88z" fill="#e97132" stroke="none" stroke-width="0" stroke-linejoin="round"/><path d="M36.70 36.70 L70.71 29.82 A34.70 34.70 0 0 1 42.71 70.88z" fill="none" stroke="rgba(0,0,0,.2)" stroke-width=".9" stroke-linejoin="round"/><path d="M36.70 36.70 L42.71 70.88 A34.70 34.70 0 0 1 2.20 40.42z" fill="#196b24" stroke="none" stroke-width="0" stroke-linejoin="round"/><path d="M36.70 36.70 L42.71 70.88 A34.70 34.70 0 0 1 2.20 40.42z" fill="none" stroke="rgba(0,0,0,.2)" stroke-width=".9" stroke-linejoin="round"/><path d="M36.70 36.70 L2.20 40.42 A34.70 34.70 0 0 1 8.24 16.85z" fill="#0f9ed5" stroke="none" stroke-width="0" stroke-linejoin="round"/><path d="M36.70 36.70 L2.20 40.42 A34.70 34.70 0 0 1 8.24 16.85z" fill="none" stroke="rgba(0,0,0,.2)" stroke-width=".9" stroke-linejoin="round"/><path d="M36.70 36.70 L8.24 16.85 A34.70 34.70 0 0 1 36.70 2.00z" fill="#a02b93" stroke="none" stroke-width="0" stroke-linejoin="round"/><path d="M36.70 36.70 L8.24 16.85 A34.70 34.70 0 0 1 36.70 2.00z" fill="none" stroke="rgba(0,0,0,.2)" stroke-width=".9" stroke-linejoin="round"/><circle cx="36.7" cy="36.7" r="34.10" fill="none" stroke="rgba(0,0,0,.13)" stroke-width="1.2"/></svg>
<span style="left:118.22px;top:257.65px;font:700 5.6px/5.6px 'Liberation Sans','DejaVu Sans',sans-serif;color:#fff;">%٢٢</span>
<span style="left:123.45px;top:293.85px;font:700 5.6px/5.6px 'Liberation Sans','DejaVu Sans',sans-serif;color:#fff;">%٢٦</span>
<span style="left:84.82px;top:300.23px;font:700 5.6px/5.6px 'Liberation Sans','DejaVu Sans',sans-serif;color:#fff;">%٢٦</span>
<span style="left:74.87px;top:271.89px;font:700 5.6px/5.6px 'Liberation Sans','DejaVu Sans',sans-serif;color:#fff;">%١١</span>
<span style="left:88.56px;top:254.60px;font:700 5.6px/5.6px 'Liberation Sans','DejaVu Sans',sans-serif;color:#fff;">%١٥</span>
<div style="left:186.70px;top:249.40px;width:44.30px;height:7.30px;background:linear-gradient(#e2e2e2,#c2c2c2);border-radius:1px;"></div>
<svg style="left:189.70px;top:250.90px;" width="8" height="5" viewBox="0 0 8 5"><path d="M0 0 h4.600 l-1.800 2 v2.300 h-1 v-2.300z" fill="#444"/><path d="M5.800 2.800 h2.200 l-1.100 1.300z" fill="#444"/></svg>
<span style="left:218.30px;top:250.75px;font:700 5px/5px 'Liberation Sans','DejaVu Sans',sans-serif;color:#333;direction:rtl;transform:scaleX(0.7808);">المادة</span>
<div style="left:196.80px;top:261.30px;width:3.00px;height:3.00px;background:#156082;"></div>
<span style="left:200.90px;top:260.50px;font:400 5px/5px 'Liberation Sans','DejaVu Sans',sans-serif;color:#444;direction:rtl;transform:scaleX(0.8600);">رمل ناعم</span>
<div style="left:196.80px;top:272.10px;width:3.00px;height:3.00px;background:#e97132;"></div>
<span style="left:200.90px;top:271.30px;font:400 5px/5px 'Liberation Sans','DejaVu Sans',sans-serif;color:#444;direction:rtl;transform:scaleX(0.8600);">رمل خشن</span>
<div style="left:196.80px;top:282.90px;width:3.00px;height:3.00px;background:#196b24;"></div>
<span style="left:200.90px;top:282.10px;font:400 5px/5px 'Liberation Sans','DejaVu Sans',sans-serif;color:#444;direction:rtl;transform:scaleX(0.8600);">رمل ابيض</span>
<div style="left:196.80px;top:293.20px;width:3.00px;height:3.00px;background:#0f9ed5;"></div>
<span style="left:200.90px;top:292.40px;font:400 5px/5px 'Liberation Sans','DejaVu Sans',sans-serif;color:#444;direction:rtl;transform:scaleX(0.8600);">رمل زيرو</span>
<div style="left:196.80px;top:304.30px;width:3.00px;height:3.00px;background:#a02b93;"></div>
<span style="left:200.90px;top:303.50px;font:400 5px/5px 'Liberation Sans','DejaVu Sans',sans-serif;color:#444;direction:rtl;transform:scaleX(0.8600);">رمل مغسول</span>
<div style="left:50.00px;top:323.00px;width:18.00px;height:7.50px;background:linear-gradient(#e2e2e2,#c2c2c2);border-radius:1px;"></div>
<span style="left:51.26px;top:324.35px;font:400 5.2px/5.2px 'Liberation Sans','DejaVu Sans',sans-serif;color:#222;">Values</span>
<div style="left:68.30px;top:323.00px;width:0.80px;height:7.50px;background:#555;"></div>
<div style="left:240.30px;top:207.20px;width:211.70px;height:130.80px;background:#fff;border:1px solid #dadada;"></div>
<div style="left:245.30px;top:211.40px;width:25.70px;height:7.50px;background:linear-gradient(#e2e2e2,#c2c2c2);border-radius:1px;"></div>
<span style="left:247.80px;top:212.85px;font:400 5px/5px 'Liberation Sans','DejaVu Sans',sans-serif;color:#333;letter-spacing:-.2px;">Sum of ...</span>
<div style="left:272.50px;top:211.40px;width:26.50px;height:7.50px;background:linear-gradient(#e2e2e2,#c2c2c2);border-radius:1px;"></div>
<span style="left:275.00px;top:212.85px;font:400 5px/5px 'Liberation Sans','DejaVu Sans',sans-serif;color:#333;letter-spacing:-.2px;">Sum of ...</span>
<div style="left:301.50px;top:211.40px;width:30.50px;height:7.50px;background:linear-gradient(#e2e2e2,#c2c2c2);border-radius:1px;"></div>
<span style="left:304.00px;top:212.85px;font:400 5px/5px 'Liberation Sans','DejaVu Sans',sans-serif;color:#333;letter-spacing:-.2px;">Sum of ...</span>
<div style="left:300.50px;top:211.10px;width:1.00px;height:8.10px;background:#555;"></div>
<div style="left:333.50px;top:211.40px;width:42.50px;height:7.50px;background:linear-gradient(#e2e2e2,#c2c2c2);border-radius:1px;"></div>
<span style="left:336.00px;top:212.85px;font:400 5px/5px 'Liberation Sans','DejaVu Sans',sans-serif;color:#333;letter-spacing:-.2px;">Sum of سعر ...</span>
<div style="left:378.00px;top:211.40px;width:27.00px;height:7.50px;background:linear-gradient(#e2e2e2,#c2c2c2);border-radius:1px;"></div>
<span style="left:380.50px;top:212.85px;font:400 5px/5px 'Liberation Sans','DejaVu Sans',sans-serif;color:#333;letter-spacing:-.2px;">Sum of ...</span>
<div style="left:407.50px;top:211.40px;width:38.50px;height:7.50px;background:linear-gradient(#e2e2e2,#c2c2c2);border-radius:1px;"></div>
<span style="left:410.00px;top:212.85px;font:400 5px/5px 'Liberation Sans','DejaVu Sans',sans-serif;color:#333;letter-spacing:-.2px;">Sum of سعر ...</span>
<div style="left:406.50px;top:211.10px;width:1.00px;height:8.10px;background:#555;"></div>
<span style="left:325.45px;top:225.40px;font:400 8px/8px 'Liberation Sans','DejaVu Sans',sans-serif;color:#555;">Sum of وارد</span>
<svg style="left:278.00px;top:239.90px;" width="81.8" height="81.8" viewBox="0 0 81.8 81.8"><path d="M40.90 40.90 L40.90 2.00 A38.90 38.90 0 0 1 76.48 25.17z" fill="#156082" stroke="#fff" stroke-width="0.8" stroke-linejoin="round"/><path d="M40.90 40.90 L76.48 25.17 A38.90 38.90 0 0 1 60.77 74.35z" fill="#e97132" stroke="#fff" stroke-width="0.8" stroke-linejoin="round"/><path d="M40.90 40.90 L60.77 74.35 A38.90 38.90 0 0 1 48.86 78.98z" fill="#196b24" stroke="#fff" stroke-width="0.8" stroke-linejoin="round"/><path d="M40.90 40.90 L48.86 78.98 A38.90 38.90 0 0 1 26.79 77.15z" fill="#0f9ed5" stroke="#fff" stroke-width="0.8" stroke-linejoin="round"/><path d="M40.90 40.90 L26.79 77.15 A38.90 38.90 0 0 1 2.04 42.66z" fill="#a02b93" stroke="#fff" stroke-width="0.8" stroke-linejoin="round"/><path d="M40.90 40.90 L2.04 42.66 A38.90 38.90 0 0 1 13.22 13.56z" fill="#4ea72e" stroke="#fff" stroke-width="0.8" stroke-linejoin="round"/><path d="M40.90 40.90 L13.22 13.56 A38.90 38.90 0 0 1 40.90 2.00z" fill="#0c3a50" stroke="#fff" stroke-width="0.8" stroke-linejoin="round"/></svg>
<div style="left:398.00px;top:246.70px;width:48.70px;height:7.20px;background:linear-gradient(#e2e2e2,#c2c2c2);border-radius:1px;"></div>
<svg style="left:401.00px;top:248.20px;" width="8" height="5" viewBox="0 0 8 5"><path d="M0 0 h4.600 l-1.800 2 v2.300 h-1 v-2.300z" fill="#444"/><path d="M5.800 2.800 h2.200 l-1.100 1.300z" fill="#444"/></svg>
<span style="left:434.00px;top:248.00px;font:700 5px/5px 'Liberation Sans','DejaVu Sans',sans-serif;color:#333;direction:rtl;transform:scaleX(0.7808);">المادة</span>
<div style="left:400.30px;top:258.90px;width:2.20px;height:2.20px;background:#156082;"></div>
<span style="left:404.00px;top:257.70px;font:400 5px/5px 'Liberation Sans','DejaVu Sans',sans-serif;color:#444;direction:rtl;transform:scaleX(0.8600);">الطوب الأحمر</span>
<div style="left:400.30px;top:268.90px;width:2.20px;height:2.20px;background:#e97132;"></div>
<span style="left:404.00px;top:267.70px;font:400 5px/5px 'Liberation Sans','DejaVu Sans',sans-serif;color:#444;direction:rtl;transform:scaleX(0.8600);">الطوب الأبيض الجيرى</span>
<div style="left:400.30px;top:279.20px;width:2.20px;height:2.20px;background:#196b24;"></div>
<span style="left:404.00px;top:278.00px;font:400 5px/5px 'Liberation Sans','DejaVu Sans',sans-serif;color:#444;direction:rtl;transform:scaleX(0.8600);">طوب طفلي عادى</span>
<div style="left:400.30px;top:289.50px;width:2.20px;height:2.20px;background:#0f9ed5;"></div>
<span style="left:404.00px;top:288.30px;font:400 5px/5px 'Liberation Sans','DejaVu Sans',sans-serif;color:#444;direction:rtl;transform:scaleX(0.8600);">طوب مصمت</span>
<div style="left:400.30px;top:299.50px;width:2.20px;height:2.20px;background:#a02b93;"></div>
<span style="left:404.00px;top:298.30px;font:400 5px/5px 'Liberation Sans','DejaVu Sans',sans-serif;color:#444;direction:rtl;transform:scaleX(0.8600);">طوب مفرغ</span>
<div style="left:400.30px;top:309.70px;width:2.20px;height:2.20px;background:#4ea72e;"></div>
<span style="left:404.00px;top:308.50px;font:400 5px/5px 'Liberation Sans','DejaVu Sans',sans-serif;color:#444;direction:rtl;transform:scaleX(0.8600);">طوب عادى</span>
<div style="left:245.80px;top:327.20px;width:17.50px;height:7.50px;background:linear-gradient(#e2e2e2,#c2c2c2);border-radius:1px;"></div>
<span style="left:246.81px;top:328.55px;font:400 5.2px/5.2px 'Liberation Sans','DejaVu Sans',sans-serif;color:#222;">Values</span>
<div style="left:48.60px;top:347.50px;width:186.10px;height:124.20px;background:#fff;border:1px solid #dadada;"></div>
<div style="left:53.60px;top:351.70px;width:22.40px;height:7.50px;background:linear-gradient(#e2e2e2,#c2c2c2);border-radius:1px;"></div>
<span style="left:56.10px;top:353.15px;font:400 5px/5px 'Liberation Sans','DejaVu Sans',sans-serif;color:#333;letter-spacing:-.2px;">Sum...</span>
<div style="left:77.50px;top:351.70px;width:23.50px;height:7.50px;background:linear-gradient(#e2e2e2,#c2c2c2);border-radius:1px;"></div>
<span style="left:80.00px;top:353.15px;font:400 5px/5px 'Liberation Sans','DejaVu Sans',sans-serif;color:#333;letter-spacing:-.2px;">Sum of ...</span>
<div style="left:102.50px;top:351.70px;width:26.50px;height:7.50px;background:linear-gradient(#e2e2e2,#c2c2c2);border-radius:1px;"></div>
<span style="left:105.00px;top:353.15px;font:400 5px/5px 'Liberation Sans','DejaVu Sans',sans-serif;color:#333;letter-spacing:-.2px;">Sum of ...</span>
<div style="left:130.50px;top:351.70px;width:37.00px;height:7.50px;background:linear-gradient(#e2e2e2,#c2c2c2);border-radius:1px;"></div>
<span style="left:133.00px;top:353.15px;font:400 5px/5px 'Liberation Sans','DejaVu Sans',sans-serif;color:#333;letter-spacing:-.2px;">Sum of سعر ...</span>
<div style="left:170.00px;top:351.70px;width:24.00px;height:7.50px;background:linear-gradient(#e2e2e2,#c2c2c2);border-radius:1px;"></div>
<span style="left:172.50px;top:353.15px;font:400 5px/5px 'Liberation Sans','DejaVu Sans',sans-serif;color:#333;letter-spacing:-.2px;">Sum of ...</span>
<div style="left:169.00px;top:351.40px;width:1.00px;height:8.10px;background:#555;"></div>
<div style="left:195.50px;top:351.70px;width:33.50px;height:7.50px;background:linear-gradient(#e2e2e2,#c2c2c2);border-radius:1px;"></div>
<span style="left:198.00px;top:353.15px;font:400 5px/5px 'Liberation Sans','DejaVu Sans',sans-serif;color:#333;letter-spacing:-.2px;">Sum of ...</span>
<span style="left:118.75px;top:365.70px;font:700 8px/8px 'Liberation Sans','DejaVu Sans',sans-serif;color:#404040;transform:scaleX(0.8939);">SUM OF وارد</span>
<svg style="left:77.20px;top:379.70px;" width="76.2" height="76.2" viewBox="0 0 76.2 76.2"><path d="M38.10 38.10 L38.10 2.00 A36.10 36.10 0 0 1 59.17 8.78z" fill="#156082" stroke="none" stroke-width="0" stroke-linejoin="round"/><path d="M38.10 38.10 L38.10 2.00 A36.10 36.10 0 0 1 59.17 8.78z" fill="none" stroke="rgba(0,0,0,.2)" stroke-width=".9" stroke-linejoin="round"/><path d="M38.10 38.10 L59.17 8.78 A36.10 36.10 0 0 1 35.29 74.09z" fill="#e97132" stroke="none" stroke-width="0" stroke-linejoin="round"/><path d="M38.10 38.10 L59.17 8.78 A36.10 36.10 0 0 1 35.29 74.09z" fill="none" stroke="rgba(0,0,0,.2)" stroke-width=".9" stroke-linejoin="round"/><path d="M38.10 38.10 L35.29 74.09 A36.10 36.10 0 0 1 2.00 38.57z" fill="#196b24" stroke="none" stroke-width="0" stroke-linejoin="round"/><path d="M38.10 38.10 L35.29 74.09 A36.10 36.10 0 0 1 2.00 38.57z" fill="none" stroke="rgba(0,0,0,.2)" stroke-width=".9" stroke-linejoin="round"/><path d="M38.10 38.10 L2.00 38.57 A36.10 36.10 0 0 1 10.82 14.46z" fill="#0f9ed5" stroke="none" stroke-width="0" stroke-linejoin="round"/><path d="M38.10 38.10 L2.00 38.57 A36.10 36.10 0 0 1 10.82 14.46z" fill="none" stroke="rgba(0,0,0,.2)" stroke-width=".9" stroke-linejoin="round"/><path d="M38.10 38.10 L10.82 14.46 A36.10 36.10 0 0 1 38.10 2.00z" fill="#a02b93" stroke="none" stroke-width="0" stroke-linejoin="round"/><path d="M38.10 38.10 L10.82 14.46 A36.10 36.10 0 0 1 38.10 2.00z" fill="none" stroke="rgba(0,0,0,.2)" stroke-width=".9" stroke-linejoin="round"/><circle cx="38.1" cy="38.1" r="35.50" fill="none" stroke="rgba(0,0,0,.13)" stroke-width="1.2"/></svg>
<span style="left:118.02px;top:388.20px;font:700 5.6px/5.6px 'Liberation Sans','DejaVu Sans',sans-serif;color:#fff;">%١٠</span>
<span style="left:135.83px;top:424.67px;font:700 5.6px/5.6px 'Liberation Sans','DejaVu Sans',sans-serif;color:#fff;">%٤١</span>
<span style="left:88.84px;top:434.25px;font:700 5.6px/5.6px 'Liberation Sans','DejaVu Sans',sans-serif;color:#fff;">%٢٤</span>
<span style="left:82.94px;top:405.33px;font:700 5.6px/5.6px 'Liberation Sans','DejaVu Sans',sans-serif;color:#fff;">%١٢</span>
<span style="left:97.69px;top:389.39px;font:700 5.6px/5.6px 'Liberation Sans','DejaVu Sans',sans-serif;color:#fff;">%١٤</span>
<div style="left:182.00px;top:389.40px;width:47.00px;height:7.00px;background:linear-gradient(#e2e2e2,#c2c2c2);border-radius:1px;"></div>
<svg style="left:185.00px;top:390.90px;" width="8" height="5" viewBox="0 0 8 5"><path d="M0 0 h4.600 l-1.800 2 v2.300 h-1 v-2.300z" fill="#444"/><path d="M5.800 2.800 h2.200 l-1.100 1.300z" fill="#444"/></svg>
<span style="left:216.30px;top:390.60px;font:700 5px/5px 'Liberation Sans','DejaVu Sans',sans-serif;color:#333;direction:rtl;transform:scaleX(0.7808);">المادة</span>
<div style="left:184.10px;top:400.20px;width:3.00px;height:3.00px;background:#156082;"></div>
<span style="left:188.20px;top:399.40px;font:400 5px/5px 'Liberation Sans','DejaVu Sans',sans-serif;color:#444;direction:rtl;transform:scaleX(0.8600);">أسمنت السويدى</span>
<div style="left:184.10px;top:410.20px;width:3.00px;height:3.00px;background:#e97132;"></div>
<span style="left:188.20px;top:409.40px;font:400 5px/5px 'Liberation Sans','DejaVu Sans',sans-serif;color:#444;direction:rtl;transform:scaleX(0.8600);">أسمنت العربية</span>
<div style="left:184.10px;top:421.00px;width:3.00px;height:3.00px;background:#196b24;"></div>
<span style="left:188.20px;top:420.20px;font:400 5px/5px 'Liberation Sans','DejaVu Sans',sans-serif;color:#444;direction:rtl;transform:scaleX(0.8600);">أسمنت سيناء</span>
<div style="left:184.10px;top:431.00px;width:3.00px;height:3.00px;background:#0f9ed5;"></div>
<span style="left:188.20px;top:430.20px;font:400 5px/5px 'Liberation Sans','DejaVu Sans',sans-serif;color:#444;direction:rtl;transform:scaleX(0.8600);">أسمنت حلوان</span>
<div style="left:184.10px;top:441.30px;width:3.00px;height:3.00px;background:#a02b93;"></div>
<span style="left:188.20px;top:440.50px;font:400 5px/5px 'Liberation Sans','DejaVu Sans',sans-serif;color:#444;direction:rtl;transform:scaleX(0.8600);">أسمنت مصر بن سيف</span>
<div style="left:53.60px;top:461.40px;width:18.10px;height:6.90px;background:linear-gradient(#e2e2e2,#c2c2c2);border-radius:1px;"></div>
<span style="left:54.91px;top:462.45px;font:400 5.2px/5.2px 'Liberation Sans','DejaVu Sans',sans-serif;color:#222;">Values</span>
<div style="left:239.70px;top:347.50px;width:214.70px;height:123.60px;background:#fff;border:1px solid #dadada;"></div>
<div style="left:243.90px;top:351.10px;width:25.10px;height:7.50px;background:linear-gradient(#e2e2e2,#c2c2c2);border-radius:1px;"></div>
<span style="left:246.40px;top:352.55px;font:400 5px/5px 'Liberation Sans','DejaVu Sans',sans-serif;color:#333;letter-spacing:-.2px;">Sum of ...</span>
<div style="left:272.00px;top:351.10px;width:27.50px;height:7.50px;background:linear-gradient(#e2e2e2,#c2c2c2);border-radius:1px;"></div>
<span style="left:274.50px;top:352.55px;font:400 5px/5px 'Liberation Sans','DejaVu Sans',sans-serif;color:#333;letter-spacing:-.2px;">Sum of صادر</span>
<div style="left:271.00px;top:350.80px;width:1.00px;height:8.10px;background:#555;"></div>
<div style="left:302.00px;top:351.10px;width:30.50px;height:7.50px;background:linear-gradient(#e2e2e2,#c2c2c2);border-radius:1px;"></div>
<span style="left:304.50px;top:352.55px;font:400 5px/5px 'Liberation Sans','DejaVu Sans',sans-serif;color:#333;letter-spacing:-.2px;">Sum of ...</span>
<div style="left:301.00px;top:350.80px;width:1.00px;height:8.10px;background:#555;"></div>
<div style="left:334.00px;top:351.10px;width:42.50px;height:7.50px;background:linear-gradient(#e2e2e2,#c2c2c2);border-radius:1px;"></div>
<span style="left:336.50px;top:352.55px;font:400 5px/5px 'Liberation Sans','DejaVu Sans',sans-serif;color:#333;letter-spacing:-.2px;">Sum of سعر ...</span>
<div style="left:379.50px;top:351.10px;width:26.50px;height:7.50px;background:linear-gradient(#e2e2e2,#c2c2c2);border-radius:1px;"></div>
<span style="left:382.00px;top:352.55px;font:400 5px/5px 'Liberation Sans','DejaVu Sans',sans-serif;color:#333;letter-spacing:-.2px;">Sum of ...</span>
<div style="left:378.50px;top:350.80px;width:1.00px;height:8.10px;background:#555;"></div>
<div style="left:408.50px;top:351.10px;width:40.50px;height:7.50px;background:linear-gradient(#e2e2e2,#c2c2c2);border-radius:1px;"></div>
<span style="left:411.00px;top:352.55px;font:400 5px/5px 'Liberation Sans','DejaVu Sans',sans-serif;color:#333;letter-spacing:-.2px;">Sum of سعر البيع</span>
<span style="left:324.45px;top:365.20px;font:700 8px/8px 'Liberation Sans','DejaVu Sans',sans-serif;color:#404040;transform:scaleX(0.8939);">SUM OF وارد</span>
<svg style="left:273.40px;top:381.20px;" width="73.2" height="73.2" viewBox="0 0 73.2 73.2"><path d="M36.60 36.60 L36.60 2.00 A34.60 34.60 0 0 1 71.20 36.14z" fill="#156082" stroke="none" stroke-width="0" stroke-linejoin="round"/><path d="M36.60 36.60 L36.60 2.00 A34.60 34.60 0 0 1 71.20 36.14z" fill="none" stroke="rgba(0,0,0,.2)" stroke-width=".9" stroke-linejoin="round"/><path d="M36.60 36.60 L71.20 36.14 A34.60 34.60 0 0 1 55.93 65.29z" fill="#e97132" stroke="none" stroke-width="0" stroke-linejoin="round"/><path d="M36.60 36.60 L71.20 36.14 A34.60 34.60 0 0 1 55.93 65.29z" fill="none" stroke="rgba(0,0,0,.2)" stroke-width=".9" stroke-linejoin="round"/><path d="M36.60 36.60 L55.93 65.29 A34.60 34.60 0 0 1 23.18 68.49z" fill="#196b24" stroke="none" stroke-width="0" stroke-linejoin="round"/><path d="M36.60 36.60 L55.93 65.29 A34.60 34.60 0 0 1 23.18 68.49z" fill="none" stroke="rgba(0,0,0,.2)" stroke-width=".9" stroke-linejoin="round"/><path d="M36.60 36.60 L23.18 68.49 A34.60 34.60 0 0 1 7.99 17.14z" fill="#0f9ed5" stroke="none" stroke-width="0" stroke-linejoin="round"/><path d="M36.60 36.60 L23.18 68.49 A34.60 34.60 0 0 1 7.99 17.14z" fill="none" stroke="rgba(0,0,0,.2)" stroke-width=".9" stroke-linejoin="round"/><path d="M36.60 36.60 L7.99 17.14 A34.60 34.60 0 0 1 36.60 2.00z" fill="#a02b93" stroke="none" stroke-width="0" stroke-linejoin="round"/><path d="M36.60 36.60 L7.99 17.14 A34.60 34.60 0 0 1 36.60 2.00z" fill="none" stroke="rgba(0,0,0,.2)" stroke-width=".9" stroke-linejoin="round"/><circle cx="36.6" cy="36.6" r="34.00" fill="none" stroke="rgba(0,0,0,.13)" stroke-width="1.2"/></svg>
<span style="left:323.04px;top:395.79px;font:700 5.6px/5.6px 'Liberation Sans','DejaVu Sans',sans-serif;color:#fff;">%٢٥</span>
<span style="left:328.00px;top:427.52px;font:700 5.6px/5.6px 'Liberation Sans','DejaVu Sans',sans-serif;color:#fff;">%١٦</span>
<span style="left:306.71px;top:441.86px;font:700 5.6px/5.6px 'Liberation Sans','DejaVu Sans',sans-serif;color:#fff;">%١٦</span>
<span style="left:278.21px;top:422.66px;font:700 5.6px/5.6px 'Liberation Sans','DejaVu Sans',sans-serif;color:#fff;">%٢٨</span>
<span style="left:291.46px;top:391.15px;font:700 5.6px/5.6px 'Liberation Sans','DejaVu Sans',sans-serif;color:#fff;">%١٥</span>
<div style="left:399.40px;top:388.30px;width:50.90px;height:7.30px;background:linear-gradient(#e2e2e2,#c2c2c2);border-radius:1px;"></div>
<svg style="left:402.40px;top:389.80px;" width="8" height="5" viewBox="0 0 8 5"><path d="M0 0 h4.600 l-1.800 2 v2.300 h-1 v-2.300z" fill="#444"/><path d="M5.800 2.800 h2.200 l-1.100 1.300z" fill="#444"/></svg>
<span style="left:437.60px;top:389.65px;font:700 5px/5px 'Liberation Sans','DejaVu Sans',sans-serif;color:#333;direction:rtl;transform:scaleX(0.7808);">المادة</span>
<div style="left:450.00px;top:388.00px;width:0.80px;height:8.00px;background:#555;"></div>
<div style="left:401.50px;top:399.60px;width:3.00px;height:3.00px;background:#156082;"></div>
<span style="left:405.60px;top:398.80px;font:400 5px/5px 'Liberation Sans','DejaVu Sans',sans-serif;color:#444;direction:rtl;transform:scaleX(0.8600);">زلط سن ١</span>
<div style="left:401.50px;top:409.90px;width:3.00px;height:3.00px;background:#e97132;"></div>
<span style="left:405.60px;top:409.10px;font:400 5px/5px 'Liberation Sans','DejaVu Sans',sans-serif;color:#444;direction:rtl;transform:scaleX(0.8600);">زلط سن ٢</span>
<div style="left:401.50px;top:420.20px;width:3.00px;height:3.00px;background:#196b24;"></div>
<span style="left:405.60px;top:419.40px;font:400 5px/5px 'Liberation Sans','DejaVu Sans',sans-serif;color:#444;direction:rtl;transform:scaleX(0.8600);">زلط فينو</span>
<div style="left:401.50px;top:430.50px;width:3.00px;height:3.00px;background:#0f9ed5;"></div>
<span style="left:405.60px;top:429.70px;font:400 5px/5px 'Liberation Sans','DejaVu Sans',sans-serif;color:#444;direction:rtl;transform:scaleX(0.8600);">زلط مخصوص خرسانة</span>
<div style="left:401.50px;top:440.70px;width:3.00px;height:3.00px;background:#a02b93;"></div>
<span style="left:405.60px;top:439.90px;font:400 5px/5px 'Liberation Sans','DejaVu Sans',sans-serif;color:#444;direction:rtl;transform:scaleX(0.8600);">زلط دبش</span>
<div style="left:243.90px;top:459.40px;width:18.30px;height:7.30px;background:linear-gradient(#e2e2e2,#c2c2c2);border-radius:1px;"></div>
<span style="left:245.31px;top:460.65px;font:400 5.2px/5.2px 'Liberation Sans','DejaVu Sans',sans-serif;color:#222;">Values</span>
<div style="left:456.00px;top:200.80px;width:96.20px;height:242.50px;background:#fff;border:1px solid #86afd0;box-shadow:0 0 1px rgba(120,160,200,.5);"></div>
<div style="left:461.50px;top:214.50px;width:7.00px;height:228.00px;background:#f0f0f0;"></div>
<span style="left:535.80px;top:205.30px;font:700 5.2px/5.2px 'Liberation Sans','DejaVu Sans',sans-serif;color:#222;direction:rtl;transform:scaleX(0.7723);">المادة</span>
<svg style="left:462.50px;top:204.50px;" width="8" height="7" viewBox="0 0 8 7"><path d="M0 0 h5 l-2 2.300 v2.700 h-1 v-2.700z" fill="#c4c4c4"/><path d="M4.800 4 l2.400 2.400 M7.200 4 l-2.400 2.400" stroke="#c4c4c4" stroke-width=".7"/></svg>
<div style="left:474.40px;top:203.00px;width:10.10px;height:9.70px;background:linear-gradient(#fef7dc,#fbe9ac);border:.6px solid #e6cf8a;border-radius:1.500px;"></div>
<svg style="left:476.30px;top:205.00px;" width="6.5" height="6" viewBox="0 0 6.5 6"><path d="M0 .7 h1.500 M0 3 h1.500 M0 5.300 h1.500 M2.500 .7 h4 M2.500 3 h4 M2.500 5.300 h4" stroke="#555" stroke-width=".8"/></svg>
<div style="left:460.30px;top:213.70px;width:87.30px;height:0.80px;background:#6f9fc2;"></div>
<div style="left:470.30px;top:216.40px;width:77.50px;height:10.20px;background:#87ceeb;border:.6px solid #68aed8;border-radius:2px;"></div>
<span style="left:511.72px;top:218.90px;font:400 5.6px/5.6px 'Liberation Sans','DejaVu Sans',sans-serif;color:#1a1a1a;direction:rtl;">حديد السويس</span>
<div style="left:470.30px;top:229.20px;width:77.50px;height:10.20px;background:#87ceeb;border:.6px solid #68aed8;border-radius:2px;"></div>
<span style="left:511.41px;top:231.70px;font:400 5.6px/5.6px 'Liberation Sans','DejaVu Sans',sans-serif;color:#1a1a1a;direction:rtl;">حديد المراكبي</span>
<div style="left:470.30px;top:242.00px;width:77.50px;height:10.20px;background:#87ceeb;border:.6px solid #68aed8;border-radius:2px;"></div>
<span style="left:509.62px;top:244.50px;font:400 5.6px/5.6px 'Liberation Sans','DejaVu Sans',sans-serif;color:#1a1a1a;direction:rtl;">حديد المصريين</span>
<div style="left:470.30px;top:254.80px;width:77.50px;height:10.20px;background:#87ceeb;border:.6px solid #68aed8;border-radius:2px;"></div>
<span style="left:518.92px;top:257.30px;font:400 5.6px/5.6px 'Liberation Sans','DejaVu Sans',sans-serif;color:#1a1a1a;direction:rtl;">حديد بشاي</span>
<div style="left:470.30px;top:267.60px;width:77.50px;height:10.20px;background:#87ceeb;border:.6px solid #68aed8;border-radius:2px;"></div>
<span style="left:525.12px;top:270.10px;font:400 5.6px/5.6px 'Liberation Sans','DejaVu Sans',sans-serif;color:#1a1a1a;direction:rtl;">حديد عز</span>
<div style="left:470.30px;top:280.40px;width:77.50px;height:10.20px;background:#87ceeb;border:.6px solid #68aed8;border-radius:2px;"></div>
<span style="left:520.86px;top:282.90px;font:400 5.6px/5.6px 'Liberation Sans','DejaVu Sans',sans-serif;color:#1a1a1a;direction:rtl;">رمل ابيض</span>
<div style="left:470.30px;top:293.20px;width:77.50px;height:10.20px;background:#87ceeb;border:.6px solid #68aed8;border-radius:2px;"></div>
<span style="left:519.80px;top:295.70px;font:400 5.6px/5.6px 'Liberation Sans','DejaVu Sans',sans-serif;color:#1a1a1a;direction:rtl;">رمل خشن</span>
<div style="left:470.30px;top:306.00px;width:77.50px;height:10.20px;background:#87ceeb;border:.6px solid #68aed8;border-radius:2px;"></div>
<span style="left:522.45px;top:308.50px;font:400 5.6px/5.6px 'Liberation Sans','DejaVu Sans',sans-serif;color:#1a1a1a;direction:rtl;">رمل زيرو</span>
<div style="left:470.30px;top:318.80px;width:77.50px;height:10.20px;background:linear-gradient(#fdf4d6,#fbe7a8);border:.6px solid #efdc9c;border-radius:2px;"></div>
<span style="left:514.86px;top:321.30px;font:400 5.6px/5.6px 'Liberation Sans','DejaVu Sans',sans-serif;color:#1a1a1a;direction:rtl;">رمل مغسول</span>
<div style="left:470.30px;top:331.60px;width:77.50px;height:10.20px;background:#87ceeb;border:.6px solid #68aed8;border-radius:2px;"></div>
<span style="left:522.19px;top:334.10px;font:400 5.6px/5.6px 'Liberation Sans','DejaVu Sans',sans-serif;color:#1a1a1a;direction:rtl;">رمل ناعم</span>
<div style="left:470.30px;top:344.40px;width:77.50px;height:10.20px;background:#87ceeb;border:.6px solid #68aed8;border-radius:2px;"></div>
<span style="left:521.55px;top:346.90px;font:400 5.6px/5.6px 'Liberation Sans','DejaVu Sans',sans-serif;color:#1a1a1a;direction:rtl;">زلط دبش</span>
<div style="left:470.30px;top:357.20px;width:77.50px;height:10.20px;background:#87ceeb;border:.6px solid #68aed8;border-radius:2px;"></div>
<span style="left:519.20px;top:359.70px;font:400 5.6px/5.6px 'Liberation Sans','DejaVu Sans',sans-serif;color:#1a1a1a;direction:rtl;">زلط سن ١</span>
<div style="left:470.30px;top:370.00px;width:77.50px;height:10.20px;background:#87ceeb;border:.6px solid #68aed8;border-radius:2px;"></div>
<span style="left:519.20px;top:372.50px;font:400 5.6px/5.6px 'Liberation Sans','DejaVu Sans',sans-serif;color:#1a1a1a;direction:rtl;">زلط سن ٢</span>
<div style="left:470.30px;top:382.80px;width:77.50px;height:10.20px;background:#87ceeb;border:.6px solid #68aed8;border-radius:2px;"></div>
<span style="left:523.78px;top:385.30px;font:400 5.6px/5.6px 'Liberation Sans','DejaVu Sans',sans-serif;color:#1a1a1a;direction:rtl;">زلط فينو</span>
<div style="left:470.30px;top:395.60px;width:77.50px;height:10.20px;background:#87ceeb;border:.6px solid #68aed8;border-radius:2px;"></div>
<span style="left:492.56px;top:398.10px;font:400 5.6px/5.6px 'Liberation Sans','DejaVu Sans',sans-serif;color:#1a1a1a;direction:rtl;">زلط مخصوص خرسانة</span>
<div style="left:470.30px;top:408.40px;width:77.50px;height:10.20px;background:#87ceeb;border:.6px solid #68aed8;border-radius:2px;"></div>
<span style="left:502.56px;top:410.90px;font:400 5.6px/5.6px 'Liberation Sans','DejaVu Sans',sans-serif;color:#1a1a1a;direction:rtl;">طوب طفلي عادي</span>
<div style="left:470.30px;top:421.20px;width:77.50px;height:10.20px;background:#87ceeb;border:.6px solid #68aed8;border-radius:2px;"></div>
<span style="left:517.92px;top:423.70px;font:400 5.6px/5.6px 'Liberation Sans','DejaVu Sans',sans-serif;color:#1a1a1a;direction:rtl;">طوب عادي</span>
<div style="left:470.30px;top:434.00px;width:77.50px;height:6.30px;background:#87ceeb;border:.6px solid #68aed8;border-radius:2px;"></div>
<div style="left:470.300px;top:434.00px;width:77.500px;height:6.30px;overflow:hidden;">
<span style="left:31.39px;top:2.50px;font:400 5.6px/5.6px 'Liberation Sans','DejaVu Sans',sans-serif;color:#1a1a1a;direction:rtl;">طوب عالي الجودة</span>
</div>
<div style="left:481.80px;top:341.00px;width:70.20px;height:28.80px;background:#fafafa;border:1px solid #dcdcdc;box-shadow:1px 1.500px 3px rgba(0,0,0,.25);"></div>
<span style="left:485.00px;top:344.25px;font:400 9.5px/9.5px 'Liberation Sans','DejaVu Sans',sans-serif;color:#666;transform:scaleX(1.0608);">Manual Filters</span>
<span style="left:485.00px;top:357.50px;font:400 10px/10px 'Liberation Sans','DejaVu Sans',sans-serif;color:#666;">المادة</span>
<div style="left:1.30px;top:192.50px;width:14.00px;height:300.00px;background:#f2f4f4;border-radius:7px;"></div>
<svg style="left:4.30px;top:196.70px;" width="7.4" height="5.2" viewBox="0 0 7.4 5.2"><path d="M0 5.200 L3.700 0 L7.400 5.200z" fill="#5f5f5f"/></svg>
<div style="left:4.90px;top:206.30px;width:6.20px;height:140.30px;background:#6e6e6e;border-radius:3.100px;"></div>
<svg style="left:4.30px;top:483.50px;" width="7.4" height="5" viewBox="0 0 7.4 5"><path d="M0 0 L4 5 L8 0z" fill="#5f5f5f"/></svg>
<div style="left:15.50px;top:497.00px;width:348.00px;height:13.00px;background:#f4f5f5;border-radius:6.500px;"></div>
<svg style="left:19.50px;top:500.00px;" width="5" height="7" viewBox="0 0 5 7"><path d="M5 0 L0 3.500 L5 7z" fill="#5f5f5f"/></svg>
<div style="left:335.30px;top:500.30px;width:13.80px;height:6.40px;background:#6e6e6e;border-radius:3.200px;"></div>
<svg style="left:354.50px;top:500.00px;" width="5" height="7" viewBox="0 0 5 7"><path d="M0 0 L5 3.500 L0 7z" fill="#5f5f5f"/></svg>
<div style="left:375.50px;top:499.70px;width:2.00px;height:2.00px;background:#444;border-radius:50%;"></div>
<div style="left:375.50px;top:503.10px;width:2.00px;height:2.00px;background:#444;border-radius:50%;"></div>
<div style="left:375.50px;top:506.50px;width:2.00px;height:2.00px;background:#444;border-radius:50%;"></div>
<svg style="left:741.00px;top:499.00px;" width="9" height="9" viewBox="0 0 9 9"><path d="M4.500 0 v9 M0 4.500 h9" stroke="#444" stroke-width="1"/></svg>
<div style="left:785.00px;top:497.00px;width:1.00px;height:13.00px;background:#cfcfcf;"></div>
<div style="left:788.00px;top:491.50px;width:44.00px;height:21.80px;background:#fff;border-radius:4px;"></div>
<span style="left:794.50px;top:496.35px;font:400 11.3px/11.3px 'Liberation Sans','DejaVu Sans',sans-serif;color:#111;direction:rtl;-webkit-text-stroke:.4px #111;transform:scaleX(0.9394);">التحليل</span>
<div style="left:794.00px;top:510.30px;width:32.00px;height:1.40px;background:#107c41;"></div>
<span style="left:847.00px;top:497.80px;font:400 11px/11px 'Liberation Sans','DejaVu Sans',sans-serif;color:#333;direction:rtl;transform:scaleX(0.9717);">الشونة</span>
<div style="left:887.00px;top:497.00px;width:1.00px;height:13.00px;background:#cfcfcf;"></div>
<div style="left:836.00px;top:497.00px;width:1.00px;height:13.00px;background:#d4d4d4;"></div>
<span style="left:897.75px;top:497.80px;font:400 11px/11px 'Liberation Sans','DejaVu Sans',sans-serif;color:#333;direction:rtl;transform:scaleX(0.9260);">المخزن</span>
<svg style="left:974.00px;top:499.50px;" width="5" height="8" viewBox="0 0 5 8"><path d="M4.500 .5 L.7 4 L4.500 7.500" fill="none" stroke="#666" stroke-width="1"/></svg>
<svg style="left:1000.00px;top:499.50px;" width="5" height="8" viewBox="0 0 5 8"><path d="M.5 .5 L4.300 4 L.5 7.500" fill="none" stroke="#666" stroke-width="1"/></svg>
<div style="left:0.00px;top:517.00px;width:1024.00px;height:21.00px;background:#f3f3f3;border-bottom:1px solid #cfd3d3;"></div>
<span style="left:8.50px;top:522.95px;font:400 9.7px/9.7px 'Liberation Sans','DejaVu Sans',sans-serif;color:#444;transform:scaleX(0.9459);">Ready</span>
<svg style="left:50.00px;top:520.30px;" width="15" height="14.5" viewBox="0 0 15 14.5"><circle cx="6.500" cy="2.300" r="1.700" fill="#fff" stroke="#333" stroke-width=".9"/><path d="M1.600 4.600 Q6.500 6.600 11.400 4.600 M6.500 5.600 V9 M6.500 8.800 L4.300 13 M6.500 8.800 L7.800 11.300" fill="none" stroke="#333" stroke-width="2.700" stroke-linecap="round" stroke-linejoin="round"/><path d="M1.600 4.600 Q6.500 6.600 11.400 4.600 M6.500 5.600 V9 M6.500 8.800 L4.300 13 M6.500 8.800 L7.800 11.300" fill="none" stroke="#f3f3f3" stroke-width="1" stroke-linecap="round" stroke-linejoin="round"/><path d="M9.300 9 l4.800 4.800 M14.100 9 l-4.800 4.800" stroke="#333" stroke-width="1"/></svg>
<span style="left:67.00px;top:522.75px;font:700 9.7px/9.7px 'Liberation Sans','DejaVu Sans',sans-serif;color:#222;transform:scaleX(0.9675);">Accessibility: Investigate</span>
<div style="left:765.00px;top:517.50px;width:34.00px;height:19.50px;background:#dedede;"></div>
<svg style="left:776.00px;top:522.00px;" width="12" height="12" viewBox="0 0 12 12"><rect x=".6" y=".6" width="10.800" height="10.800" fill="none" stroke="#333" stroke-width="1"/><path d="M4.200 .6 v10.800 M7.800 .6 v10.800 M.6 4.200 h10.800 M.6 7.800 h10.800" stroke="#333" stroke-width=".9"/></svg>
<svg style="left:810.00px;top:522.00px;" width="13" height="12" viewBox="0 0 13 12"><rect x=".6" y=".6" width="11.800" height="10.800" fill="none" stroke="#333" stroke-width="1"/><rect x="3.200" y="2.800" width="6.600" height="6.400" fill="none" stroke="#333" stroke-width=".9"/><path d="M4.500 4.800 h4 M4.500 6.200 h4 M4.500 7.600 h4" stroke="#555" stroke-width=".6"/></svg>
<svg style="left:844.00px;top:521.50px;" width="13" height="12" viewBox="0 0 13 12"><path d="M.6 .6 h11.800 v10.800 h-11.800z M3.200 .6 v5 h4.800 v-5" fill="none" stroke="#333" stroke-width="1"/></svg>
<div style="left:872.00px;top:527.00px;width:6.00px;height:1.00px;background:#555;"></div>
<div style="left:883.70px;top:527.00px;width:93.00px;height:1.00px;background:#555;"></div>
<div style="left:906.50px;top:522.50px;width:4.00px;height:10.00px;background:#555;"></div>
<div style="left:930.30px;top:525.00px;width:1.00px;height:5.00px;background:#555;"></div>
<span style="left:980.99px;top:521.30px;font:400 12px/12px 'Liberation Sans','DejaVu Sans',sans-serif;color:#444;">+</span>
<span style="left:998.50px;top:522.95px;font:400 9.7px/9.7px 'Liberation Sans','DejaVu Sans',sans-serif;color:#333;transform:scaleX(0.9799);">57%</span>
<div style="left:0.00px;top:538.00px;width:1024.00px;height:38.00px;background:linear-gradient(90deg,#e6f0ee 0%,#dfeceb 45%,#dce9ea 70%,#e6eef0 100%);border-top:1px solid #c2c8c8;"></div>
<span style="left:16.00px;top:546.05px;font:400 9.5px/9.5px 'Liberation Sans','DejaVu Sans',sans-serif;color:#333;direction:rtl;transform:scaleX(0.8605);">٠٩:١٠ ص</span>
<span style="left:15.00px;top:558.05px;font:400 9.5px/9.5px 'Liberation Sans','DejaVu Sans',sans-serif;color:#333;direction:rtl;transform:scaleX(0.9326);">٢٠٢٦/٠٣/١٦</span>
<span style="left:72.00px;top:552.05px;font:400 9.5px/9.5px 'Liberation Sans','DejaVu Sans',sans-serif;color:#333;transform:scaleX(0.9460);">٦٣٪</span>
<svg style="left:90.00px;top:552.00px;" width="17" height="9" viewBox="0 0 17 9"><rect x=".6" y=".6" width="14" height="7.800" rx="2.300" fill="none" stroke="#333" stroke-width="1"/><rect x="2.200" y="2.200" width="8" height="4.600" rx="1.200" fill="#222"/><path d="M15.800 3 v3" stroke="#333" stroke-width="1.200" stroke-linecap="round"/></svg>
<svg style="left:113.00px;top:551.50px;" width="12" height="10" viewBox="0 0 12 10"><path d="M.6 3.500 h2 l2.600-2.500 v8 l-2.600-2.500 h-2z" fill="none" stroke="#333" stroke-width=".9" stroke-linejoin="round"/><path d="M7 3 a3 3 0 0 1 0 4 M8.800 1.500 a5.500 5.500 0 0 1 0 7" fill="none" stroke="#333" stroke-width=".9" stroke-linecap="round"/><path d="M10.600 .5 a7.500 7.500 0 0 1 0 9" fill="none" stroke="#aaa" stroke-width=".8" stroke-linecap="round"/></svg>
<svg style="left:131.50px;top:551.50px;" width="15" height="11" viewBox="0 0 15 11"><path d="M1 3.800 a9 9 0 0 1 13 0 M3.200 6 a6 6 0 0 1 8.600 0 M5.300 8 a3.200 3.200 0 0 1 4.400 0" fill="none" stroke="#333" stroke-width="1.100" stroke-linecap="round"/><circle cx="7.500" cy="9.800" r=".9" fill="#333"/></svg>
<span style="left:164.71px;top:551.50px;font:400 11px/11px 'Liberation Sans','DejaVu Sans',sans-serif;color:#444;">ع</span>
<svg style="left:192.50px;top:551.50px;" width="14" height="10" viewBox="0 0 14 10"><path d="M3.500 9 a3 3 0 0 1-.3-6 a4.200 4.200 0 0 1 8 .9 a2.600 2.600 0 0 1-.2 5.100z" fill="#e9e9e9" stroke="#333" stroke-width="1"/><path d="M3 8.800 c3-.5 6-2.500 8-5.500" fill="none" stroke="#999" stroke-width=".6"/></svg>
<svg style="left:221.00px;top:554.50px;" width="8" height="5" viewBox="0 0 8 5"><path d="M.6 4.400 L4 .8 L7.400 4.400" fill="none" stroke="#333" stroke-width="1.100" stroke-linecap="round" stroke-linejoin="round"/></svg>
<svg style="left:292.00px;top:547.00px;" width="19" height="20" viewBox="0 0 19 20"><path d="M9.500 1.200 a8.300 8.300 0 0 0-7.100 12.600 l-1.200 4.400 l4.500-1.200 a8.300 8.300 0 1 0 3.800-15.800z" fill="none" stroke="#238b45" stroke-width="1.700"/><path d="M6.500 5.600 c-.5 0-1.300 .8-1.200 2 c.2 2.400 3.200 5.500 5.800 5.900 c1.200 .1 2-.7 2.100-1.300 c.1-.5-1.700-1.400-2.100-1.400 c-.4 0-.6 .8-1 .8 c-.8 0-2.800-2-2.800-2.700 c0-.4 .8-.7 .8-1.100 c0-.5-.8-2.200-1.600-2.200z" fill="#238b45"/></svg>
<div style="left:299.00px;top:569.80px;width:5.00px;height:2.00px;background:#7a7f80;border-radius:1px;"></div>
<div style="left:328.50px;top:548.50px;width:17.00px;height:17.00px;background:#0a66c2;border-radius:2px;"></div>
<span style="left:332.00px;top:551.50px;font:700 12px/12px 'Liberation Sans','DejaVu Sans',sans-serif;color:#fff;transform:scaleX(0.9370);">in</span>
<svg style="left:363.00px;top:548.00px;" width="19" height="18" viewBox="0 0 19 18"><rect x="1" y="1" width="17" height="12" rx="1" fill="#1f8fe0"/><rect x="5" y="2" width="9" height="11" rx="1" fill="#5cc3f7"/><path d="M2 13 h15 l1.500 2.500 h-18z" fill="#1672c4"/><rect x="6" y="15" width="7" height="2" fill="#2aa1ee"/></svg>
<div style="left:397.500px;top:547.500px;width:19px;height:19px;background:#0866ff;border-radius:50%;overflow:hidden;"><span style="left:6.800px;top:1.500px;font:700 21px/21px 'Liberation Sans',sans-serif;color:#fff;">f</span></div>
<svg style="left:433.00px;top:547.50px;" width="19" height="19" viewBox="0 0 19 19"><circle cx="9.500" cy="9.500" r="9.300" fill="#fbc116"/><path d="M9.500 9.500 L1.450 4.850 A9.300 9.300 0 0 1 17.550 4.850z" fill="#e33b2e"/><path d="M9.500 9.500 L1.450 4.850 A9.300 9.300 0 0 0 9.500 18.800 L13.500 11z" fill="#2ba24c"/><path d="M9.500 4.850 h8.050 A9.300 9.300 0 0 0 1.450 4.850 L5.500 11.500z" fill="#e33b2e"/><circle cx="9.500" cy="9.500" r="4.400" fill="#fff"/><circle cx="9.500" cy="9.500" r="3.500" fill="#4285f4"/></svg>
<div style="left:440.00px;top:569.80px;width:5.00px;height:2.00px;background:#7a7f80;border-radius:1px;"></div>
<div style="left:468.00px;top:547.50px;width:19.00px;height:19.00px;background:linear-gradient(#37aee2,#1e96c8);border-radius:50%;"></div>
<svg style="left:468.00px;top:547.50px;" width="19" height="19" viewBox="0 0 19 19"><path d="M3.800 9.300 L14.600 5 c.5-.2 .9 .1 .8 .8 l-1.800 8.600 c-.1 .6-.5 .8-1 .5 l-2.800-2.100 l-1.400 1.300 c-.2 .2-.3 .3-.6 .3 l.2-2.900 l5.200-4.700 c.2-.2 0-.3-.3-.1 l-6.400 4 l-2.700-.9 c-.6-.2-.6-.6 0-.8z" fill="#fff"/></svg>
<div style="left:498.00px;top:541.50px;width:30.50px;height:31.00px;background:rgba(255,255,255,.6);border:1px solid rgba(0,0,0,.05);border-radius:4px;"></div>
<svg style="left:503.00px;top:547.00px;" width="19" height="19" viewBox="0 0 19 19"><clipPath id="xlc"><rect x="4" y=".5" width="13.500" height="18" rx="2"/></clipPath><g clip-path="url(#xlc)"><rect x="4" y=".5" width="13.500" height="18" fill="#1f7a3c"/><rect x="4" y=".5" width="7" height="7.500" fill="#5bb35d"/><rect x="11" y=".5" width="6.500" height="7.500" fill="#3a9d4f"/><rect x="11" y="8" width="6.500" height="10.500" fill="#1b6b34"/><circle cx="11.500" cy="3" r=".6" fill="#e8e36a"/><circle cx="13" cy="1.800" r=".5" fill="#e8e36a"/></g><rect x=".5" y="7.500" width="9.500" height="9.500" rx="2" fill="#0f6f38"/><path d="M3.200 10 L7.300 14.500 M7.300 10 L3.200 14.500" stroke="#fff" stroke-width="1.500"/></svg>
<div style="left:506.80px;top:570.20px;width:11.80px;height:2.30px;background:#1a66d1;border-radius:1.100px;"></div>
<svg style="left:538.50px;top:548.00px;" width="20" height="18" viewBox="0 0 20 18"><path d="M1 2.500 a1.300 1.300 0 0 1 1.300-1.300 h5 l2 2 h9 a1.300 1.300 0 0 1 1.300 1.300 v11 a1.300 1.300 0 0 1-1.300 1.300 h-16 a1.300 1.300 0 0 1-1.300-1.300z" fill="#f0a30a"/><path d="M.8 5.500 h18.800 v10 a1.300 1.300 0 0 1-1.300 1.300 h-16.200 a1.300 1.300 0 0 1-1.300-1.300z" fill="#ffd257"/><rect x="4.500" y="11.500" width="11.500" height="5.300" rx="1" fill="#1a78d6"/><rect x="7.500" y="14" width="5.500" height="1.300" fill="#0b4f9b"/></svg>
<div style="left:545.50px;top:569.80px;width:5.00px;height:2.00px;background:#7a7f80;border-radius:1px;"></div>
<svg style="left:573.50px;top:547.50px;" width="19" height="19" viewBox="0 0 19 19"><rect x="5" y="1" width="13" height="17" rx="1.800" fill="#2b7cd3"/><rect x="5" y="1" width="13" height="5.700" rx="1.500" fill="#41a5ee"/><rect x="5" y="12" width="13" height="6" rx="1.500" fill="#103f91"/><rect x=".5" y="5.500" width="10.500" height="10.500" rx="1.800" fill="#185abd"/></svg>
<span style="left:575.99px;top:554.25px;font:700 8.5px/8.5px 'Liberation Sans','DejaVu Sans',sans-serif;color:#fff;">w</span>
<div style="left:613.50px;top:548.00px;width:13.00px;height:12.50px;background:#f2f2f2;border-radius:1.500px;box-shadow:0 0 1px rgba(0,0,0,.25);"></div>
<div style="left:609.50px;top:552.50px;width:14.00px;height:13.00px;background:#1e1e1e;border-radius:1.500px;"></div>
<div style="left:613.50px;top:552.50px;width:10.00px;height:8.00px;background:#bdbdbd;opacity:.85;"></div>
<div style="left:638.70px;top:544.70px;width:174.00px;height:23.30px;background:#f4f8f8;border:1px solid #d5dcdc;border-radius:11.700px;"></div>
<svg style="left:642.00px;top:546.00px;" width="40" height="21" viewBox="0 0 40 21"><ellipse cx="20" cy="9" rx="17" ry="7.500" fill="#cfe6f3"/><ellipse cx="30" cy="5" rx="8" ry="3" fill="#f3d9c2"/><ellipse cx="12" cy="4.500" rx="6" ry="2" fill="#f3d9c2"/><path d="M21 16.500 c1.500-8 4.500-13.500 8.500-13.500 c4 0 6.500 5.500 7.500 11.500 c-4 2.500-11 3-16 2z" fill="#c9774a"/><path d="M26 15.500 c.8-5 2.500-8.500 4.500-8.500 c2.300 0 3.500 3.500 4 7.500z" fill="#e9b58a"/><path d="M18 17 c4-2.500 13-3.500 21-1.500 l-1 2.500 h-19z" fill="#6d9a4e"/><path d="M2 16 c6-1.500 16-1.500 24 1 c-3 3-18 3.500-24 1z" fill="#4f9fd0"/><path d="M4 18 c5-.8 12-.8 18 .5" fill="none" stroke="#e8c18e" stroke-width="1.200"/><path d="M2 5 C10 1.500 22 2.500 30 7" fill="none" stroke="#4a3b2e" stroke-width=".8"/><path d="M8 4.200 v4.300 M13 3.300 v5.200" stroke="#2c2c2c" stroke-width=".7"/><rect x="4.500" y="8.300" width="11.500" height="5.200" rx=".8" fill="#27313b"/><rect x="5.700" y="9.300" width="9" height="1.600" fill="#9fb7ca"/></svg>
<span style="left:762.00px;top:551.50px;font:400 11px/11px 'Liberation Sans','DejaVu Sans',sans-serif;color:#5c5c5c;direction:rtl;">بحث</span>
<svg style="left:792.00px;top:550.00px;" width="13" height="13" viewBox="0 0 13 13"><circle cx="5.300" cy="5.300" r="4.300" fill="none" stroke="#222" stroke-width="1.300"/><path d="M8.500 8.500 L12 12" stroke="#222" stroke-width="1.500" stroke-linecap="round"/></svg>
<div style="left:823.50px;top:547.70px;width:9.00px;height:9.00px;background:linear-gradient(135deg,#36b5f5,#0f7fd9);border-radius:.8px;"></div>
<div style="left:833.30px;top:547.70px;width:9.00px;height:9.00px;background:linear-gradient(135deg,#36b5f5,#0f7fd9);border-radius:.8px;"></div>
<div style="left:823.50px;top:557.50px;width:9.00px;height:9.00px;background:linear-gradient(135deg,#36b5f5,#0f7fd9);border-radius:.8px;"></div>
<div style="left:833.30px;top:557.50px;width:9.00px;height:9.00px;background:linear-gradient(135deg,#36b5f5,#0f7fd9);border-radius:.8px;"></div>
<div style="left:990.20px;top:548.90px;width:16.40px;height:16.40px;background:radial-gradient(circle at 35% 35%,#f5962a,#ee7712);border-radius:50%;"></div>
<div style="left:982.80px;top:543.30px;width:18.00px;height:12.20px;background:rgba(253,253,253,.93);border-radius:6.100px;"></div>
<span style="left:986.55px;top:545.10px;font:400 9px/9px 'Liberation Sans','DejaVu Sans',sans-serif;color:#333;transform:scaleX(0.7906);">١٧°</span>
</div></body></html>
